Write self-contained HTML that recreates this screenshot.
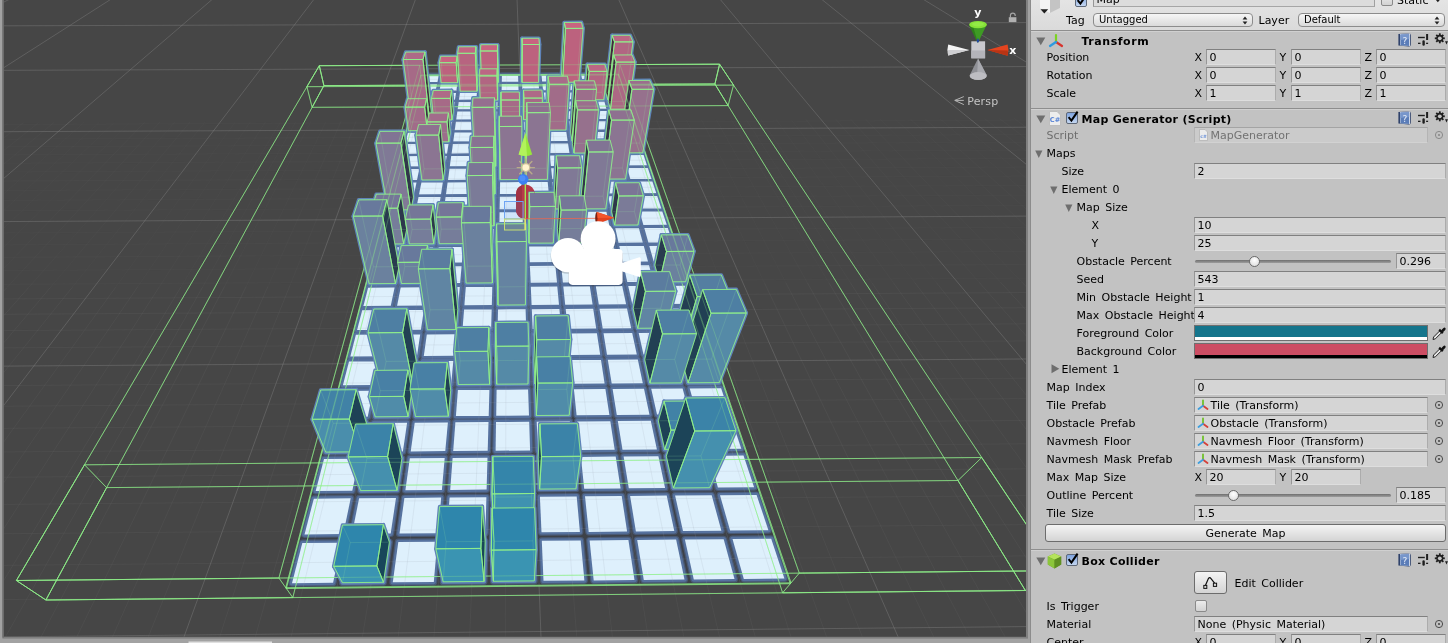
<!DOCTYPE html>
<html><head><meta charset="utf-8"><title>Unity</title><style>
body{margin:0;background:#c2c2c2;overflow:hidden}
#root{will-change:transform;transform:translateZ(0);position:relative;width:1448px;height:643px;overflow:hidden;font-family:'DejaVu Sans','Liberation Sans',sans-serif;font-size:11px;word-spacing:2px}
.t{position:absolute;white-space:nowrap;line-height:14px;height:14px;font-size:11px}
.t.b{font-weight:bold;word-spacing:0px;letter-spacing:0.3px}
.a{position:absolute}
.f{position:absolute;box-sizing:content-box;border:1px solid #acacac;border-top-color:#808080;border-left-color:#969696;border-bottom-color:#dedede;background:#d5d5d5;white-space:nowrap;overflow:hidden}
.f span{position:absolute;left:2.5px;top:1px;line-height:14px}
.dd{position:absolute;height:12px;border:1px solid #8c8c8c;border-radius:4px;background:linear-gradient(#f6f6f6,#dadada);white-space:nowrap}
.dd span{position:absolute;left:5px;top:-1px;line-height:14px;font-size:10px}
.btn{position:absolute;border:1px solid #6c6c6c;border-radius:3px;background:linear-gradient(#f4f4f4,#d4d4d4);text-align:center}
.btn span{line-height:16px;position:relative;top:1px}
.cb{position:absolute;border:1px solid #5e6878;border-radius:2px;background:linear-gradient(#7ea3df,#c4d6f0)}
</style></head><body><div id="root">
<svg width="1030" height="643" viewBox="0 0 1030 643" style="position:absolute;left:0;top:0">
<defs><clipPath id="sc"><rect x="4" y="0" width="1022" height="636.8"/></clipPath></defs>
<rect x="0" y="0" width="1030" height="643" fill="#a2a2a2"/>
<rect x="2.4" y="0" width="1025.6" height="638.6" fill="#808080"/>
<rect x="2.4" y="0" width="1.6" height="637.5" fill="#6c6c6c"/>
<rect x="4" y="0" width="1022" height="636.8" fill="#464646"/>
<rect x="188.5" y="641.5" width="83.5" height="1.5" fill="#e0e0e0"/>
<g clip-path="url(#sc)">
<g><line x1="-2944.3" y1="835.4" x2="101.6" y2="-126.0" stroke="#8a8a8a" stroke-width="1" stroke-opacity="0.38"/><line x1="-2898.9" y1="834.8" x2="-1211.2" y2="295.3" stroke="#8a8a8a" stroke-width="1" stroke-opacity="0.10"/><line x1="-1211.2" y1="295.3" x2="-680.5" y2="125.7" stroke="#8a8a8a" stroke-width="1" stroke-opacity="0.05"/><line x1="-2853.6" y1="834.3" x2="-1188.8" y2="295.2" stroke="#8a8a8a" stroke-width="1" stroke-opacity="0.10"/><line x1="-1188.8" y1="295.2" x2="-665.1" y2="125.6" stroke="#8a8a8a" stroke-width="1" stroke-opacity="0.05"/><line x1="-2808.4" y1="833.7" x2="-1166.4" y2="295.1" stroke="#8a8a8a" stroke-width="1" stroke-opacity="0.10"/><line x1="-1166.4" y1="295.1" x2="-649.7" y2="125.5" stroke="#8a8a8a" stroke-width="1" stroke-opacity="0.05"/><line x1="-2763.2" y1="833.2" x2="-1143.9" y2="294.9" stroke="#8a8a8a" stroke-width="1" stroke-opacity="0.10"/><line x1="-1143.9" y1="294.9" x2="-634.3" y2="125.5" stroke="#8a8a8a" stroke-width="1" stroke-opacity="0.05"/><line x1="-2718.0" y1="832.7" x2="-1121.5" y2="294.8" stroke="#8a8a8a" stroke-width="1" stroke-opacity="0.10"/><line x1="-1121.5" y1="294.8" x2="-618.9" y2="125.4" stroke="#8a8a8a" stroke-width="1" stroke-opacity="0.05"/><line x1="-2672.9" y1="832.1" x2="-1099.1" y2="294.6" stroke="#8a8a8a" stroke-width="1" stroke-opacity="0.10"/><line x1="-1099.1" y1="294.6" x2="-603.5" y2="125.4" stroke="#8a8a8a" stroke-width="1" stroke-opacity="0.05"/><line x1="-2627.8" y1="831.6" x2="-1076.8" y2="294.5" stroke="#8a8a8a" stroke-width="1" stroke-opacity="0.10"/><line x1="-1076.8" y1="294.5" x2="-588.1" y2="125.3" stroke="#8a8a8a" stroke-width="1" stroke-opacity="0.05"/><line x1="-2582.7" y1="831.1" x2="-1054.4" y2="294.4" stroke="#8a8a8a" stroke-width="1" stroke-opacity="0.10"/><line x1="-1054.4" y1="294.4" x2="-572.7" y2="125.2" stroke="#8a8a8a" stroke-width="1" stroke-opacity="0.05"/><line x1="-2537.8" y1="830.5" x2="-1032.0" y2="294.2" stroke="#8a8a8a" stroke-width="1" stroke-opacity="0.10"/><line x1="-1032.0" y1="294.2" x2="-557.3" y2="125.2" stroke="#8a8a8a" stroke-width="1" stroke-opacity="0.05"/><line x1="-2492.8" y1="830.0" x2="153.2" y2="-126.1" stroke="#8a8a8a" stroke-width="1" stroke-opacity="0.38"/><line x1="-2447.9" y1="829.5" x2="-987.3" y2="294.0" stroke="#8a8a8a" stroke-width="1" stroke-opacity="0.10"/><line x1="-987.3" y1="294.0" x2="-526.6" y2="125.0" stroke="#8a8a8a" stroke-width="1" stroke-opacity="0.05"/><line x1="-2403.0" y1="828.9" x2="-965.0" y2="293.8" stroke="#8a8a8a" stroke-width="1" stroke-opacity="0.10"/><line x1="-965.0" y1="293.8" x2="-511.2" y2="125.0" stroke="#8a8a8a" stroke-width="1" stroke-opacity="0.05"/><line x1="-2358.2" y1="828.4" x2="-942.7" y2="293.7" stroke="#8a8a8a" stroke-width="1" stroke-opacity="0.10"/><line x1="-942.7" y1="293.7" x2="-495.8" y2="124.9" stroke="#8a8a8a" stroke-width="1" stroke-opacity="0.05"/><line x1="-2313.5" y1="827.9" x2="-920.4" y2="293.5" stroke="#8a8a8a" stroke-width="1" stroke-opacity="0.10"/><line x1="-920.4" y1="293.5" x2="-480.5" y2="124.8" stroke="#8a8a8a" stroke-width="1" stroke-opacity="0.05"/><line x1="-2268.7" y1="827.3" x2="-898.1" y2="293.4" stroke="#8a8a8a" stroke-width="1" stroke-opacity="0.10"/><line x1="-898.1" y1="293.4" x2="-465.1" y2="124.8" stroke="#8a8a8a" stroke-width="1" stroke-opacity="0.05"/><line x1="-2224.1" y1="826.8" x2="-875.8" y2="293.3" stroke="#8a8a8a" stroke-width="1" stroke-opacity="0.10"/><line x1="-875.8" y1="293.3" x2="-449.8" y2="124.7" stroke="#8a8a8a" stroke-width="1" stroke-opacity="0.05"/><line x1="-2179.4" y1="826.3" x2="-853.5" y2="293.1" stroke="#8a8a8a" stroke-width="1" stroke-opacity="0.10"/><line x1="-853.5" y1="293.1" x2="-434.4" y2="124.6" stroke="#8a8a8a" stroke-width="1" stroke-opacity="0.05"/><line x1="-2134.8" y1="825.7" x2="-831.2" y2="293.0" stroke="#8a8a8a" stroke-width="1" stroke-opacity="0.10"/><line x1="-831.2" y1="293.0" x2="-419.1" y2="124.6" stroke="#8a8a8a" stroke-width="1" stroke-opacity="0.05"/><line x1="-2090.3" y1="825.2" x2="-809.0" y2="292.9" stroke="#8a8a8a" stroke-width="1" stroke-opacity="0.10"/><line x1="-809.0" y1="292.9" x2="-403.8" y2="124.5" stroke="#8a8a8a" stroke-width="1" stroke-opacity="0.05"/><line x1="-2045.8" y1="824.7" x2="204.7" y2="-126.1" stroke="#8a8a8a" stroke-width="1" stroke-opacity="0.38"/><line x1="-2001.3" y1="824.1" x2="-764.5" y2="292.6" stroke="#8a8a8a" stroke-width="1" stroke-opacity="0.10"/><line x1="-764.5" y1="292.6" x2="-373.1" y2="124.4" stroke="#8a8a8a" stroke-width="1" stroke-opacity="0.05"/><line x1="-1956.9" y1="823.6" x2="-742.3" y2="292.5" stroke="#8a8a8a" stroke-width="1" stroke-opacity="0.10"/><line x1="-742.3" y1="292.5" x2="-357.8" y2="124.3" stroke="#8a8a8a" stroke-width="1" stroke-opacity="0.05"/><line x1="-1912.5" y1="823.1" x2="-720.1" y2="292.3" stroke="#8a8a8a" stroke-width="1" stroke-opacity="0.10"/><line x1="-720.1" y1="292.3" x2="-342.5" y2="124.2" stroke="#8a8a8a" stroke-width="1" stroke-opacity="0.05"/><line x1="-1868.2" y1="822.6" x2="-697.9" y2="292.2" stroke="#8a8a8a" stroke-width="1" stroke-opacity="0.10"/><line x1="-697.9" y1="292.2" x2="-327.2" y2="124.2" stroke="#8a8a8a" stroke-width="1" stroke-opacity="0.05"/><line x1="-1823.9" y1="822.0" x2="-675.7" y2="292.0" stroke="#8a8a8a" stroke-width="1" stroke-opacity="0.10"/><line x1="-675.7" y1="292.0" x2="-311.9" y2="124.1" stroke="#8a8a8a" stroke-width="1" stroke-opacity="0.05"/><line x1="-1779.7" y1="821.5" x2="-653.5" y2="291.9" stroke="#8a8a8a" stroke-width="1" stroke-opacity="0.10"/><line x1="-653.5" y1="291.9" x2="-296.6" y2="124.0" stroke="#8a8a8a" stroke-width="1" stroke-opacity="0.05"/><line x1="-1735.5" y1="821.0" x2="-631.4" y2="291.8" stroke="#8a8a8a" stroke-width="1" stroke-opacity="0.10"/><line x1="-631.4" y1="291.8" x2="-281.3" y2="124.0" stroke="#8a8a8a" stroke-width="1" stroke-opacity="0.05"/><line x1="-1691.3" y1="820.4" x2="-609.2" y2="291.6" stroke="#8a8a8a" stroke-width="1" stroke-opacity="0.10"/><line x1="-609.2" y1="291.6" x2="-266.0" y2="123.9" stroke="#8a8a8a" stroke-width="1" stroke-opacity="0.05"/><line x1="-1647.2" y1="819.9" x2="-587.1" y2="291.5" stroke="#8a8a8a" stroke-width="1" stroke-opacity="0.10"/><line x1="-587.1" y1="291.5" x2="-250.7" y2="123.9" stroke="#8a8a8a" stroke-width="1" stroke-opacity="0.05"/><line x1="-1603.1" y1="819.4" x2="256.1" y2="-126.2" stroke="#8a8a8a" stroke-width="1" stroke-opacity="0.38"/><line x1="-1559.1" y1="818.9" x2="-542.8" y2="291.2" stroke="#8a8a8a" stroke-width="1" stroke-opacity="0.10"/><line x1="-542.8" y1="291.2" x2="-220.2" y2="123.7" stroke="#8a8a8a" stroke-width="1" stroke-opacity="0.05"/><line x1="-1515.1" y1="818.3" x2="-520.7" y2="291.1" stroke="#8a8a8a" stroke-width="1" stroke-opacity="0.10"/><line x1="-520.7" y1="291.1" x2="-204.9" y2="123.7" stroke="#8a8a8a" stroke-width="1" stroke-opacity="0.05"/><line x1="-1471.1" y1="817.8" x2="-498.6" y2="291.0" stroke="#8a8a8a" stroke-width="1" stroke-opacity="0.10"/><line x1="-498.6" y1="291.0" x2="-189.7" y2="123.6" stroke="#8a8a8a" stroke-width="1" stroke-opacity="0.05"/><line x1="-1427.2" y1="817.3" x2="-476.5" y2="290.8" stroke="#8a8a8a" stroke-width="1" stroke-opacity="0.10"/><line x1="-476.5" y1="290.8" x2="-174.4" y2="123.5" stroke="#8a8a8a" stroke-width="1" stroke-opacity="0.05"/><line x1="-1383.4" y1="816.8" x2="-454.5" y2="290.7" stroke="#8a8a8a" stroke-width="1" stroke-opacity="0.10"/><line x1="-454.5" y1="290.7" x2="-159.2" y2="123.5" stroke="#8a8a8a" stroke-width="1" stroke-opacity="0.05"/><line x1="-1339.6" y1="816.3" x2="-432.4" y2="290.6" stroke="#8a8a8a" stroke-width="1" stroke-opacity="0.10"/><line x1="-432.4" y1="290.6" x2="-143.9" y2="123.4" stroke="#8a8a8a" stroke-width="1" stroke-opacity="0.05"/><line x1="-1295.8" y1="815.7" x2="-410.3" y2="290.4" stroke="#8a8a8a" stroke-width="1" stroke-opacity="0.10"/><line x1="-410.3" y1="290.4" x2="-128.7" y2="123.3" stroke="#8a8a8a" stroke-width="1" stroke-opacity="0.05"/><line x1="-1252.1" y1="815.2" x2="-388.3" y2="290.3" stroke="#8a8a8a" stroke-width="1" stroke-opacity="0.10"/><line x1="-388.3" y1="290.3" x2="-113.5" y2="123.3" stroke="#8a8a8a" stroke-width="1" stroke-opacity="0.05"/><line x1="-1208.4" y1="814.7" x2="-366.3" y2="290.2" stroke="#8a8a8a" stroke-width="1" stroke-opacity="0.10"/><line x1="-366.3" y1="290.2" x2="-98.2" y2="123.2" stroke="#8a8a8a" stroke-width="1" stroke-opacity="0.05"/><line x1="-1164.7" y1="814.2" x2="307.4" y2="-126.3" stroke="#8a8a8a" stroke-width="1" stroke-opacity="0.38"/><line x1="-1121.1" y1="813.7" x2="-322.2" y2="289.9" stroke="#8a8a8a" stroke-width="1" stroke-opacity="0.10"/><line x1="-322.2" y1="289.9" x2="-67.8" y2="123.1" stroke="#8a8a8a" stroke-width="1" stroke-opacity="0.05"/><line x1="-1077.6" y1="813.1" x2="-300.2" y2="289.8" stroke="#8a8a8a" stroke-width="1" stroke-opacity="0.10"/><line x1="-300.2" y1="289.8" x2="-52.6" y2="123.0" stroke="#8a8a8a" stroke-width="1" stroke-opacity="0.05"/><line x1="-1034.1" y1="812.6" x2="-278.2" y2="289.6" stroke="#8a8a8a" stroke-width="1" stroke-opacity="0.10"/><line x1="-278.2" y1="289.6" x2="-37.4" y2="122.9" stroke="#8a8a8a" stroke-width="1" stroke-opacity="0.05"/><line x1="-990.6" y1="812.1" x2="-256.3" y2="289.5" stroke="#8a8a8a" stroke-width="1" stroke-opacity="0.10"/><line x1="-256.3" y1="289.5" x2="-22.2" y2="122.9" stroke="#8a8a8a" stroke-width="1" stroke-opacity="0.05"/><line x1="-947.2" y1="811.6" x2="-234.3" y2="289.3" stroke="#8a8a8a" stroke-width="1" stroke-opacity="0.10"/><line x1="-234.3" y1="289.3" x2="-7.0" y2="122.8" stroke="#8a8a8a" stroke-width="1" stroke-opacity="0.05"/><line x1="-903.8" y1="811.1" x2="-212.3" y2="289.2" stroke="#8a8a8a" stroke-width="1" stroke-opacity="0.10"/><line x1="-212.3" y1="289.2" x2="8.2" y2="122.7" stroke="#8a8a8a" stroke-width="1" stroke-opacity="0.05"/><line x1="-860.4" y1="810.6" x2="-190.4" y2="289.1" stroke="#8a8a8a" stroke-width="1" stroke-opacity="0.10"/><line x1="-190.4" y1="289.1" x2="23.4" y2="122.7" stroke="#8a8a8a" stroke-width="1" stroke-opacity="0.05"/><line x1="-817.1" y1="810.0" x2="-168.5" y2="288.9" stroke="#8a8a8a" stroke-width="1" stroke-opacity="0.10"/><line x1="-168.5" y1="288.9" x2="38.6" y2="122.6" stroke="#8a8a8a" stroke-width="1" stroke-opacity="0.05"/><line x1="-773.8" y1="809.5" x2="-146.5" y2="288.8" stroke="#8a8a8a" stroke-width="1" stroke-opacity="0.10"/><line x1="-146.5" y1="288.8" x2="53.8" y2="122.6" stroke="#8a8a8a" stroke-width="1" stroke-opacity="0.05"/><line x1="-730.6" y1="809.0" x2="358.7" y2="-126.4" stroke="#8a8a8a" stroke-width="1" stroke-opacity="0.38"/><line x1="-687.4" y1="808.5" x2="-102.7" y2="288.5" stroke="#8a8a8a" stroke-width="1" stroke-opacity="0.10"/><line x1="-102.7" y1="288.5" x2="84.1" y2="122.4" stroke="#8a8a8a" stroke-width="1" stroke-opacity="0.05"/><line x1="-644.3" y1="808.0" x2="-80.8" y2="288.4" stroke="#8a8a8a" stroke-width="1" stroke-opacity="0.10"/><line x1="-80.8" y1="288.4" x2="99.2" y2="122.4" stroke="#8a8a8a" stroke-width="1" stroke-opacity="0.05"/><line x1="-601.2" y1="807.5" x2="-59.0" y2="288.3" stroke="#8a8a8a" stroke-width="1" stroke-opacity="0.10"/><line x1="-59.0" y1="288.3" x2="114.4" y2="122.3" stroke="#8a8a8a" stroke-width="1" stroke-opacity="0.05"/><line x1="-558.1" y1="807.0" x2="-37.1" y2="288.1" stroke="#8a8a8a" stroke-width="1" stroke-opacity="0.10"/><line x1="-37.1" y1="288.1" x2="129.5" y2="122.2" stroke="#8a8a8a" stroke-width="1" stroke-opacity="0.05"/><line x1="-515.1" y1="806.4" x2="-15.2" y2="288.0" stroke="#8a8a8a" stroke-width="1" stroke-opacity="0.10"/><line x1="-15.2" y1="288.0" x2="144.7" y2="122.2" stroke="#8a8a8a" stroke-width="1" stroke-opacity="0.05"/><line x1="-472.2" y1="805.9" x2="6.6" y2="287.9" stroke="#8a8a8a" stroke-width="1" stroke-opacity="0.10"/><line x1="6.6" y1="287.9" x2="159.8" y2="122.1" stroke="#8a8a8a" stroke-width="1" stroke-opacity="0.05"/><line x1="-429.2" y1="805.4" x2="28.5" y2="287.7" stroke="#8a8a8a" stroke-width="1" stroke-opacity="0.10"/><line x1="28.5" y1="287.7" x2="175.0" y2="122.0" stroke="#8a8a8a" stroke-width="1" stroke-opacity="0.05"/><line x1="-386.3" y1="804.9" x2="50.3" y2="287.6" stroke="#8a8a8a" stroke-width="1" stroke-opacity="0.10"/><line x1="50.3" y1="287.6" x2="190.1" y2="122.0" stroke="#8a8a8a" stroke-width="1" stroke-opacity="0.05"/><line x1="-343.5" y1="804.4" x2="72.1" y2="287.5" stroke="#8a8a8a" stroke-width="1" stroke-opacity="0.10"/><line x1="72.1" y1="287.5" x2="205.2" y2="121.9" stroke="#8a8a8a" stroke-width="1" stroke-opacity="0.05"/><line x1="-300.7" y1="803.9" x2="410.0" y2="-126.4" stroke="#8a8a8a" stroke-width="1" stroke-opacity="0.38"/><line x1="-257.9" y1="803.4" x2="115.7" y2="287.2" stroke="#8a8a8a" stroke-width="1" stroke-opacity="0.10"/><line x1="115.7" y1="287.2" x2="235.4" y2="121.8" stroke="#8a8a8a" stroke-width="1" stroke-opacity="0.05"/><line x1="-215.2" y1="802.9" x2="137.5" y2="287.1" stroke="#8a8a8a" stroke-width="1" stroke-opacity="0.10"/><line x1="137.5" y1="287.1" x2="250.5" y2="121.7" stroke="#8a8a8a" stroke-width="1" stroke-opacity="0.05"/><line x1="-172.5" y1="802.4" x2="159.3" y2="286.9" stroke="#8a8a8a" stroke-width="1" stroke-opacity="0.10"/><line x1="159.3" y1="286.9" x2="265.6" y2="121.7" stroke="#8a8a8a" stroke-width="1" stroke-opacity="0.05"/><line x1="-129.9" y1="801.9" x2="181.0" y2="286.8" stroke="#8a8a8a" stroke-width="1" stroke-opacity="0.10"/><line x1="181.0" y1="286.8" x2="280.7" y2="121.6" stroke="#8a8a8a" stroke-width="1" stroke-opacity="0.05"/><line x1="-87.2" y1="801.4" x2="202.8" y2="286.7" stroke="#8a8a8a" stroke-width="1" stroke-opacity="0.10"/><line x1="202.8" y1="286.7" x2="295.8" y2="121.5" stroke="#8a8a8a" stroke-width="1" stroke-opacity="0.05"/><line x1="-44.7" y1="800.8" x2="224.5" y2="286.5" stroke="#8a8a8a" stroke-width="1" stroke-opacity="0.10"/><line x1="224.5" y1="286.5" x2="310.9" y2="121.5" stroke="#8a8a8a" stroke-width="1" stroke-opacity="0.05"/><line x1="-2.2" y1="800.3" x2="246.2" y2="286.4" stroke="#8a8a8a" stroke-width="1" stroke-opacity="0.10"/><line x1="246.2" y1="286.4" x2="326.0" y2="121.4" stroke="#8a8a8a" stroke-width="1" stroke-opacity="0.05"/><line x1="40.3" y1="799.8" x2="268.0" y2="286.3" stroke="#8a8a8a" stroke-width="1" stroke-opacity="0.10"/><line x1="268.0" y1="286.3" x2="341.1" y2="121.3" stroke="#8a8a8a" stroke-width="1" stroke-opacity="0.05"/><line x1="82.8" y1="799.3" x2="289.7" y2="286.1" stroke="#8a8a8a" stroke-width="1" stroke-opacity="0.10"/><line x1="289.7" y1="286.1" x2="356.1" y2="121.3" stroke="#8a8a8a" stroke-width="1" stroke-opacity="0.05"/><line x1="125.2" y1="798.8" x2="461.2" y2="-126.5" stroke="#8a8a8a" stroke-width="1" stroke-opacity="0.38"/><line x1="167.5" y1="798.3" x2="333.1" y2="285.9" stroke="#8a8a8a" stroke-width="1" stroke-opacity="0.10"/><line x1="333.1" y1="285.9" x2="386.3" y2="121.1" stroke="#8a8a8a" stroke-width="1" stroke-opacity="0.05"/><line x1="209.8" y1="797.8" x2="354.7" y2="285.7" stroke="#8a8a8a" stroke-width="1" stroke-opacity="0.10"/><line x1="354.7" y1="285.7" x2="401.3" y2="121.1" stroke="#8a8a8a" stroke-width="1" stroke-opacity="0.05"/><line x1="252.1" y1="797.3" x2="376.4" y2="285.6" stroke="#8a8a8a" stroke-width="1" stroke-opacity="0.10"/><line x1="376.4" y1="285.6" x2="416.4" y2="121.0" stroke="#8a8a8a" stroke-width="1" stroke-opacity="0.05"/><line x1="294.3" y1="796.8" x2="398.1" y2="285.5" stroke="#8a8a8a" stroke-width="1" stroke-opacity="0.10"/><line x1="398.1" y1="285.5" x2="431.4" y2="120.9" stroke="#8a8a8a" stroke-width="1" stroke-opacity="0.05"/><line x1="336.5" y1="796.3" x2="419.7" y2="285.3" stroke="#8a8a8a" stroke-width="1" stroke-opacity="0.10"/><line x1="419.7" y1="285.3" x2="446.5" y2="120.9" stroke="#8a8a8a" stroke-width="1" stroke-opacity="0.05"/><line x1="378.7" y1="795.8" x2="441.3" y2="285.2" stroke="#8a8a8a" stroke-width="1" stroke-opacity="0.10"/><line x1="441.3" y1="285.2" x2="461.5" y2="120.8" stroke="#8a8a8a" stroke-width="1" stroke-opacity="0.05"/><line x1="420.8" y1="795.3" x2="463.0" y2="285.1" stroke="#8a8a8a" stroke-width="1" stroke-opacity="0.10"/><line x1="463.0" y1="285.1" x2="476.5" y2="120.8" stroke="#8a8a8a" stroke-width="1" stroke-opacity="0.05"/><line x1="462.9" y1="794.8" x2="484.6" y2="285.0" stroke="#8a8a8a" stroke-width="1" stroke-opacity="0.10"/><line x1="484.6" y1="285.0" x2="491.6" y2="120.7" stroke="#8a8a8a" stroke-width="1" stroke-opacity="0.05"/><line x1="504.9" y1="794.3" x2="506.2" y2="284.8" stroke="#8a8a8a" stroke-width="1" stroke-opacity="0.10"/><line x1="506.2" y1="284.8" x2="506.6" y2="120.6" stroke="#8a8a8a" stroke-width="1" stroke-opacity="0.05"/><line x1="546.9" y1="793.8" x2="512.3" y2="-126.6" stroke="#8a8a8a" stroke-width="1" stroke-opacity="0.38"/><line x1="588.9" y1="793.3" x2="549.3" y2="284.6" stroke="#8a8a8a" stroke-width="1" stroke-opacity="0.10"/><line x1="549.3" y1="284.6" x2="536.6" y2="120.5" stroke="#8a8a8a" stroke-width="1" stroke-opacity="0.05"/><line x1="630.8" y1="792.8" x2="570.9" y2="284.4" stroke="#8a8a8a" stroke-width="1" stroke-opacity="0.10"/><line x1="570.9" y1="284.4" x2="551.6" y2="120.4" stroke="#8a8a8a" stroke-width="1" stroke-opacity="0.05"/><line x1="672.7" y1="792.3" x2="592.5" y2="284.3" stroke="#8a8a8a" stroke-width="1" stroke-opacity="0.10"/><line x1="592.5" y1="284.3" x2="566.6" y2="120.4" stroke="#8a8a8a" stroke-width="1" stroke-opacity="0.05"/><line x1="714.5" y1="791.8" x2="614.0" y2="284.2" stroke="#8a8a8a" stroke-width="1" stroke-opacity="0.10"/><line x1="614.0" y1="284.2" x2="581.6" y2="120.3" stroke="#8a8a8a" stroke-width="1" stroke-opacity="0.05"/><line x1="756.3" y1="791.3" x2="635.6" y2="284.0" stroke="#8a8a8a" stroke-width="1" stroke-opacity="0.10"/><line x1="635.6" y1="284.0" x2="596.6" y2="120.2" stroke="#8a8a8a" stroke-width="1" stroke-opacity="0.05"/><line x1="798.1" y1="790.8" x2="657.1" y2="283.9" stroke="#8a8a8a" stroke-width="1" stroke-opacity="0.10"/><line x1="657.1" y1="283.9" x2="611.6" y2="120.2" stroke="#8a8a8a" stroke-width="1" stroke-opacity="0.05"/><line x1="839.8" y1="790.3" x2="678.6" y2="283.8" stroke="#8a8a8a" stroke-width="1" stroke-opacity="0.10"/><line x1="678.6" y1="283.8" x2="626.5" y2="120.1" stroke="#8a8a8a" stroke-width="1" stroke-opacity="0.05"/><line x1="881.4" y1="789.8" x2="700.1" y2="283.6" stroke="#8a8a8a" stroke-width="1" stroke-opacity="0.10"/><line x1="700.1" y1="283.6" x2="641.5" y2="120.1" stroke="#8a8a8a" stroke-width="1" stroke-opacity="0.05"/><line x1="923.1" y1="789.3" x2="721.6" y2="283.5" stroke="#8a8a8a" stroke-width="1" stroke-opacity="0.10"/><line x1="721.6" y1="283.5" x2="656.5" y2="120.0" stroke="#8a8a8a" stroke-width="1" stroke-opacity="0.05"/><line x1="964.7" y1="788.8" x2="563.4" y2="-126.7" stroke="#8a8a8a" stroke-width="1" stroke-opacity="0.38"/><line x1="1006.2" y1="788.3" x2="764.6" y2="283.2" stroke="#8a8a8a" stroke-width="1" stroke-opacity="0.10"/><line x1="764.6" y1="283.2" x2="686.4" y2="119.9" stroke="#8a8a8a" stroke-width="1" stroke-opacity="0.05"/><line x1="1047.8" y1="787.8" x2="786.0" y2="283.1" stroke="#8a8a8a" stroke-width="1" stroke-opacity="0.10"/><line x1="786.0" y1="283.1" x2="701.4" y2="119.8" stroke="#8a8a8a" stroke-width="1" stroke-opacity="0.05"/><line x1="1089.2" y1="787.4" x2="807.5" y2="283.0" stroke="#8a8a8a" stroke-width="1" stroke-opacity="0.10"/><line x1="807.5" y1="283.0" x2="716.3" y2="119.7" stroke="#8a8a8a" stroke-width="1" stroke-opacity="0.05"/><line x1="1130.7" y1="786.9" x2="828.9" y2="282.8" stroke="#8a8a8a" stroke-width="1" stroke-opacity="0.10"/><line x1="828.9" y1="282.8" x2="731.3" y2="119.7" stroke="#8a8a8a" stroke-width="1" stroke-opacity="0.05"/><line x1="1172.1" y1="786.4" x2="850.4" y2="282.7" stroke="#8a8a8a" stroke-width="1" stroke-opacity="0.10"/><line x1="850.4" y1="282.7" x2="746.2" y2="119.6" stroke="#8a8a8a" stroke-width="1" stroke-opacity="0.05"/><line x1="1213.4" y1="785.9" x2="871.8" y2="282.6" stroke="#8a8a8a" stroke-width="1" stroke-opacity="0.10"/><line x1="871.8" y1="282.6" x2="761.1" y2="119.5" stroke="#8a8a8a" stroke-width="1" stroke-opacity="0.05"/><line x1="1254.8" y1="785.4" x2="893.2" y2="282.5" stroke="#8a8a8a" stroke-width="1" stroke-opacity="0.10"/><line x1="893.2" y1="282.5" x2="776.1" y2="119.5" stroke="#8a8a8a" stroke-width="1" stroke-opacity="0.05"/><line x1="1296.0" y1="784.9" x2="914.6" y2="282.3" stroke="#8a8a8a" stroke-width="1" stroke-opacity="0.10"/><line x1="914.6" y1="282.3" x2="791.0" y2="119.4" stroke="#8a8a8a" stroke-width="1" stroke-opacity="0.05"/><line x1="1337.3" y1="784.4" x2="936.0" y2="282.2" stroke="#8a8a8a" stroke-width="1" stroke-opacity="0.10"/><line x1="936.0" y1="282.2" x2="805.9" y2="119.4" stroke="#8a8a8a" stroke-width="1" stroke-opacity="0.05"/><line x1="1378.5" y1="783.9" x2="614.4" y2="-126.7" stroke="#8a8a8a" stroke-width="1" stroke-opacity="0.38"/><line x1="1419.7" y1="783.4" x2="978.8" y2="281.9" stroke="#8a8a8a" stroke-width="1" stroke-opacity="0.10"/><line x1="978.8" y1="281.9" x2="835.7" y2="119.2" stroke="#8a8a8a" stroke-width="1" stroke-opacity="0.05"/><line x1="1460.8" y1="782.9" x2="1000.1" y2="281.8" stroke="#8a8a8a" stroke-width="1" stroke-opacity="0.10"/><line x1="1000.1" y1="281.8" x2="850.6" y2="119.2" stroke="#8a8a8a" stroke-width="1" stroke-opacity="0.05"/><line x1="1501.9" y1="782.4" x2="1021.5" y2="281.7" stroke="#8a8a8a" stroke-width="1" stroke-opacity="0.10"/><line x1="1021.5" y1="281.7" x2="865.5" y2="119.1" stroke="#8a8a8a" stroke-width="1" stroke-opacity="0.05"/><line x1="1542.9" y1="782.0" x2="1042.8" y2="281.5" stroke="#8a8a8a" stroke-width="1" stroke-opacity="0.10"/><line x1="1042.8" y1="281.5" x2="880.4" y2="119.0" stroke="#8a8a8a" stroke-width="1" stroke-opacity="0.05"/><line x1="1583.9" y1="781.5" x2="1064.1" y2="281.4" stroke="#8a8a8a" stroke-width="1" stroke-opacity="0.10"/><line x1="1064.1" y1="281.4" x2="895.3" y2="119.0" stroke="#8a8a8a" stroke-width="1" stroke-opacity="0.05"/><line x1="1624.9" y1="781.0" x2="1085.5" y2="281.3" stroke="#8a8a8a" stroke-width="1" stroke-opacity="0.10"/><line x1="1085.5" y1="281.3" x2="910.2" y2="118.9" stroke="#8a8a8a" stroke-width="1" stroke-opacity="0.05"/><line x1="1665.8" y1="780.5" x2="1106.8" y2="281.1" stroke="#8a8a8a" stroke-width="1" stroke-opacity="0.10"/><line x1="1106.8" y1="281.1" x2="925.0" y2="118.8" stroke="#8a8a8a" stroke-width="1" stroke-opacity="0.05"/><line x1="1706.7" y1="780.0" x2="1128.1" y2="281.0" stroke="#8a8a8a" stroke-width="1" stroke-opacity="0.10"/><line x1="1128.1" y1="281.0" x2="939.9" y2="118.8" stroke="#8a8a8a" stroke-width="1" stroke-opacity="0.05"/><line x1="1747.6" y1="779.5" x2="1149.3" y2="280.9" stroke="#8a8a8a" stroke-width="1" stroke-opacity="0.10"/><line x1="1149.3" y1="280.9" x2="954.8" y2="118.7" stroke="#8a8a8a" stroke-width="1" stroke-opacity="0.05"/><line x1="1788.4" y1="779.0" x2="665.3" y2="-126.8" stroke="#8a8a8a" stroke-width="1" stroke-opacity="0.38"/><line x1="1829.2" y1="778.5" x2="1191.9" y2="280.6" stroke="#8a8a8a" stroke-width="1" stroke-opacity="0.10"/><line x1="1191.9" y1="280.6" x2="984.5" y2="118.6" stroke="#8a8a8a" stroke-width="1" stroke-opacity="0.05"/><line x1="1869.9" y1="778.1" x2="1213.1" y2="280.5" stroke="#8a8a8a" stroke-width="1" stroke-opacity="0.10"/><line x1="1213.1" y1="280.5" x2="999.4" y2="118.5" stroke="#8a8a8a" stroke-width="1" stroke-opacity="0.05"/><line x1="1910.6" y1="777.6" x2="1234.4" y2="280.4" stroke="#8a8a8a" stroke-width="1" stroke-opacity="0.10"/><line x1="1234.4" y1="280.4" x2="1014.2" y2="118.5" stroke="#8a8a8a" stroke-width="1" stroke-opacity="0.05"/><line x1="1951.3" y1="777.1" x2="1255.6" y2="280.2" stroke="#8a8a8a" stroke-width="1" stroke-opacity="0.10"/><line x1="1255.6" y1="280.2" x2="1029.0" y2="118.4" stroke="#8a8a8a" stroke-width="1" stroke-opacity="0.05"/><line x1="1991.9" y1="776.6" x2="1276.9" y2="280.1" stroke="#8a8a8a" stroke-width="1" stroke-opacity="0.10"/><line x1="1276.9" y1="280.1" x2="1043.9" y2="118.3" stroke="#8a8a8a" stroke-width="1" stroke-opacity="0.05"/><line x1="2032.5" y1="776.1" x2="1298.1" y2="280.0" stroke="#8a8a8a" stroke-width="1" stroke-opacity="0.10"/><line x1="1298.1" y1="280.0" x2="1058.7" y2="118.3" stroke="#8a8a8a" stroke-width="1" stroke-opacity="0.05"/><line x1="2073.1" y1="775.6" x2="1319.3" y2="279.8" stroke="#8a8a8a" stroke-width="1" stroke-opacity="0.10"/><line x1="1319.3" y1="279.8" x2="1073.5" y2="118.2" stroke="#8a8a8a" stroke-width="1" stroke-opacity="0.05"/><line x1="2113.6" y1="775.2" x2="1340.5" y2="279.7" stroke="#8a8a8a" stroke-width="1" stroke-opacity="0.10"/><line x1="1340.5" y1="279.7" x2="1088.4" y2="118.2" stroke="#8a8a8a" stroke-width="1" stroke-opacity="0.05"/><line x1="2154.1" y1="774.7" x2="1361.7" y2="279.6" stroke="#8a8a8a" stroke-width="1" stroke-opacity="0.10"/><line x1="1361.7" y1="279.6" x2="1103.2" y2="118.1" stroke="#8a8a8a" stroke-width="1" stroke-opacity="0.05"/><line x1="2194.5" y1="774.2" x2="716.2" y2="-126.9" stroke="#8a8a8a" stroke-width="1" stroke-opacity="0.38"/><line x1="2234.9" y1="773.7" x2="1404.0" y2="279.3" stroke="#8a8a8a" stroke-width="1" stroke-opacity="0.10"/><line x1="1404.0" y1="279.3" x2="1132.8" y2="118.0" stroke="#8a8a8a" stroke-width="1" stroke-opacity="0.05"/><line x1="2275.3" y1="773.2" x2="1425.1" y2="279.2" stroke="#8a8a8a" stroke-width="1" stroke-opacity="0.10"/><line x1="1425.1" y1="279.2" x2="1147.6" y2="117.9" stroke="#8a8a8a" stroke-width="1" stroke-opacity="0.05"/><line x1="2315.6" y1="772.8" x2="1446.3" y2="279.1" stroke="#8a8a8a" stroke-width="1" stroke-opacity="0.10"/><line x1="1446.3" y1="279.1" x2="1162.4" y2="117.8" stroke="#8a8a8a" stroke-width="1" stroke-opacity="0.05"/><line x1="2355.9" y1="772.3" x2="1467.4" y2="278.9" stroke="#8a8a8a" stroke-width="1" stroke-opacity="0.10"/><line x1="1467.4" y1="278.9" x2="1177.2" y2="117.8" stroke="#8a8a8a" stroke-width="1" stroke-opacity="0.05"/><line x1="2396.1" y1="771.8" x2="1488.5" y2="278.8" stroke="#8a8a8a" stroke-width="1" stroke-opacity="0.10"/><line x1="1488.5" y1="278.8" x2="1192.0" y2="117.7" stroke="#8a8a8a" stroke-width="1" stroke-opacity="0.05"/><line x1="2436.3" y1="771.3" x2="1509.7" y2="278.7" stroke="#8a8a8a" stroke-width="1" stroke-opacity="0.10"/><line x1="1509.7" y1="278.7" x2="1206.8" y2="117.7" stroke="#8a8a8a" stroke-width="1" stroke-opacity="0.05"/><line x1="2476.5" y1="770.8" x2="1530.8" y2="278.5" stroke="#8a8a8a" stroke-width="1" stroke-opacity="0.10"/><line x1="1530.8" y1="278.5" x2="1221.5" y2="117.6" stroke="#8a8a8a" stroke-width="1" stroke-opacity="0.05"/><line x1="2516.7" y1="770.4" x2="1551.9" y2="278.4" stroke="#8a8a8a" stroke-width="1" stroke-opacity="0.10"/><line x1="1551.9" y1="278.4" x2="1236.3" y2="117.5" stroke="#8a8a8a" stroke-width="1" stroke-opacity="0.05"/><line x1="2556.8" y1="769.9" x2="1572.9" y2="278.3" stroke="#8a8a8a" stroke-width="1" stroke-opacity="0.10"/><line x1="1572.9" y1="278.3" x2="1251.1" y2="117.5" stroke="#8a8a8a" stroke-width="1" stroke-opacity="0.05"/><line x1="2596.8" y1="769.4" x2="767.0" y2="-127.0" stroke="#8a8a8a" stroke-width="1" stroke-opacity="0.38"/><line x1="2636.8" y1="768.9" x2="1615.1" y2="278.0" stroke="#8a8a8a" stroke-width="1" stroke-opacity="0.10"/><line x1="1615.1" y1="278.0" x2="1280.6" y2="117.3" stroke="#8a8a8a" stroke-width="1" stroke-opacity="0.05"/><line x1="2676.8" y1="768.5" x2="1636.1" y2="277.9" stroke="#8a8a8a" stroke-width="1" stroke-opacity="0.10"/><line x1="1636.1" y1="277.9" x2="1295.3" y2="117.3" stroke="#8a8a8a" stroke-width="1" stroke-opacity="0.05"/><line x1="2716.8" y1="768.0" x2="1657.2" y2="277.8" stroke="#8a8a8a" stroke-width="1" stroke-opacity="0.10"/><line x1="1657.2" y1="277.8" x2="1310.1" y2="117.2" stroke="#8a8a8a" stroke-width="1" stroke-opacity="0.05"/><line x1="2756.7" y1="767.5" x2="1678.2" y2="277.6" stroke="#8a8a8a" stroke-width="1" stroke-opacity="0.10"/><line x1="1678.2" y1="277.6" x2="1324.8" y2="117.1" stroke="#8a8a8a" stroke-width="1" stroke-opacity="0.05"/><line x1="2796.6" y1="767.0" x2="1699.2" y2="277.5" stroke="#8a8a8a" stroke-width="1" stroke-opacity="0.10"/><line x1="1699.2" y1="277.5" x2="1339.6" y2="117.1" stroke="#8a8a8a" stroke-width="1" stroke-opacity="0.05"/><line x1="2836.4" y1="766.6" x2="1720.2" y2="277.4" stroke="#8a8a8a" stroke-width="1" stroke-opacity="0.10"/><line x1="1720.2" y1="277.4" x2="1354.3" y2="117.0" stroke="#8a8a8a" stroke-width="1" stroke-opacity="0.05"/><line x1="2876.2" y1="766.1" x2="1741.2" y2="277.3" stroke="#8a8a8a" stroke-width="1" stroke-opacity="0.10"/><line x1="1741.2" y1="277.3" x2="1369.0" y2="117.0" stroke="#8a8a8a" stroke-width="1" stroke-opacity="0.05"/><line x1="2916.0" y1="765.6" x2="1762.2" y2="277.1" stroke="#8a8a8a" stroke-width="1" stroke-opacity="0.10"/><line x1="1762.2" y1="277.1" x2="1383.7" y2="116.9" stroke="#8a8a8a" stroke-width="1" stroke-opacity="0.05"/><line x1="2955.7" y1="765.1" x2="1783.2" y2="277.0" stroke="#8a8a8a" stroke-width="1" stroke-opacity="0.10"/><line x1="1783.2" y1="277.0" x2="1398.5" y2="116.8" stroke="#8a8a8a" stroke-width="1" stroke-opacity="0.05"/><line x1="2995.4" y1="764.7" x2="817.8" y2="-127.0" stroke="#8a8a8a" stroke-width="1" stroke-opacity="0.38"/><line x1="3035.1" y1="764.2" x2="1825.1" y2="276.7" stroke="#8a8a8a" stroke-width="1" stroke-opacity="0.10"/><line x1="1825.1" y1="276.7" x2="1427.9" y2="116.7" stroke="#8a8a8a" stroke-width="1" stroke-opacity="0.05"/><line x1="3074.7" y1="763.7" x2="1846.1" y2="276.6" stroke="#8a8a8a" stroke-width="1" stroke-opacity="0.10"/><line x1="1846.1" y1="276.6" x2="1442.6" y2="116.6" stroke="#8a8a8a" stroke-width="1" stroke-opacity="0.05"/><line x1="3114.3" y1="763.2" x2="1867.0" y2="276.5" stroke="#8a8a8a" stroke-width="1" stroke-opacity="0.10"/><line x1="1867.0" y1="276.5" x2="1457.3" y2="116.6" stroke="#8a8a8a" stroke-width="1" stroke-opacity="0.05"/><line x1="3153.8" y1="762.8" x2="1887.9" y2="276.4" stroke="#8a8a8a" stroke-width="1" stroke-opacity="0.10"/><line x1="1887.9" y1="276.4" x2="1472.0" y2="116.5" stroke="#8a8a8a" stroke-width="1" stroke-opacity="0.05"/><line x1="3193.3" y1="762.3" x2="1908.9" y2="276.2" stroke="#8a8a8a" stroke-width="1" stroke-opacity="0.10"/><line x1="1908.9" y1="276.2" x2="1486.7" y2="116.5" stroke="#8a8a8a" stroke-width="1" stroke-opacity="0.05"/><line x1="3232.8" y1="761.8" x2="1929.8" y2="276.1" stroke="#8a8a8a" stroke-width="1" stroke-opacity="0.10"/><line x1="1929.8" y1="276.1" x2="1501.3" y2="116.4" stroke="#8a8a8a" stroke-width="1" stroke-opacity="0.05"/><line x1="3272.2" y1="761.4" x2="1950.7" y2="276.0" stroke="#8a8a8a" stroke-width="1" stroke-opacity="0.10"/><line x1="1950.7" y1="276.0" x2="1516.0" y2="116.3" stroke="#8a8a8a" stroke-width="1" stroke-opacity="0.05"/><line x1="3311.6" y1="760.9" x2="1971.6" y2="275.9" stroke="#8a8a8a" stroke-width="1" stroke-opacity="0.10"/><line x1="1971.6" y1="275.9" x2="1530.7" y2="116.3" stroke="#8a8a8a" stroke-width="1" stroke-opacity="0.05"/><line x1="3351.0" y1="760.4" x2="1992.4" y2="275.7" stroke="#8a8a8a" stroke-width="1" stroke-opacity="0.10"/><line x1="1992.4" y1="275.7" x2="1545.4" y2="116.2" stroke="#8a8a8a" stroke-width="1" stroke-opacity="0.05"/><line x1="3390.3" y1="760.0" x2="868.5" y2="-127.1" stroke="#8a8a8a" stroke-width="1" stroke-opacity="0.38"/><line x1="3429.6" y1="759.5" x2="2034.2" y2="275.5" stroke="#8a8a8a" stroke-width="1" stroke-opacity="0.10"/><line x1="2034.2" y1="275.5" x2="1574.7" y2="116.1" stroke="#8a8a8a" stroke-width="1" stroke-opacity="0.05"/><line x1="3468.8" y1="759.0" x2="2055.0" y2="275.3" stroke="#8a8a8a" stroke-width="1" stroke-opacity="0.10"/><line x1="2055.0" y1="275.3" x2="1589.3" y2="116.0" stroke="#8a8a8a" stroke-width="1" stroke-opacity="0.05"/><line x1="3508.1" y1="758.6" x2="2075.9" y2="275.2" stroke="#8a8a8a" stroke-width="1" stroke-opacity="0.10"/><line x1="2075.9" y1="275.2" x2="1604.0" y2="116.0" stroke="#8a8a8a" stroke-width="1" stroke-opacity="0.05"/><line x1="3547.2" y1="758.1" x2="2096.7" y2="275.1" stroke="#8a8a8a" stroke-width="1" stroke-opacity="0.10"/><line x1="2096.7" y1="275.1" x2="1618.6" y2="115.9" stroke="#8a8a8a" stroke-width="1" stroke-opacity="0.05"/><line x1="3586.4" y1="757.6" x2="2117.5" y2="275.0" stroke="#8a8a8a" stroke-width="1" stroke-opacity="0.10"/><line x1="2117.5" y1="275.0" x2="1633.3" y2="115.8" stroke="#8a8a8a" stroke-width="1" stroke-opacity="0.05"/><line x1="3625.5" y1="757.2" x2="2138.3" y2="274.8" stroke="#8a8a8a" stroke-width="1" stroke-opacity="0.10"/><line x1="2138.3" y1="274.8" x2="1647.9" y2="115.8" stroke="#8a8a8a" stroke-width="1" stroke-opacity="0.05"/><line x1="3664.6" y1="756.7" x2="2159.1" y2="274.7" stroke="#8a8a8a" stroke-width="1" stroke-opacity="0.10"/><line x1="2159.1" y1="274.7" x2="1662.5" y2="115.7" stroke="#8a8a8a" stroke-width="1" stroke-opacity="0.05"/><line x1="3703.6" y1="756.2" x2="2179.9" y2="274.6" stroke="#8a8a8a" stroke-width="1" stroke-opacity="0.10"/><line x1="2179.9" y1="274.6" x2="1677.1" y2="115.6" stroke="#8a8a8a" stroke-width="1" stroke-opacity="0.05"/><line x1="3742.6" y1="755.8" x2="2200.7" y2="274.5" stroke="#8a8a8a" stroke-width="1" stroke-opacity="0.10"/><line x1="2200.7" y1="274.5" x2="1691.8" y2="115.6" stroke="#8a8a8a" stroke-width="1" stroke-opacity="0.05"/><line x1="3781.6" y1="755.3" x2="919.1" y2="-127.2" stroke="#8a8a8a" stroke-width="1" stroke-opacity="0.38"/><line x1="-2298.3" y1="797.8" x2="3217.4" y2="733.9" stroke="#8a8a8a" stroke-width="1" stroke-opacity="0.10"/><line x1="-2160.0" y1="745.9" x2="3091.5" y2="688.1" stroke="#8a8a8a" stroke-width="1" stroke-opacity="0.10"/><line x1="-2034.8" y1="699.0" x2="2976.9" y2="646.3" stroke="#8a8a8a" stroke-width="1" stroke-opacity="0.10"/><line x1="-3059.5" y1="667.7" x2="3868.9" y2="598.0" stroke="#8a8a8a" stroke-width="1" stroke-opacity="0.38"/><line x1="-1816.5" y1="617.1" x2="2775.6" y2="572.9" stroke="#8a8a8a" stroke-width="1" stroke-opacity="0.10"/><line x1="-1720.8" y1="581.3" x2="2686.8" y2="540.5" stroke="#8a8a8a" stroke-width="1" stroke-opacity="0.10"/><line x1="-1632.7" y1="548.3" x2="2604.7" y2="510.6" stroke="#8a8a8a" stroke-width="1" stroke-opacity="0.10"/><line x1="-1551.3" y1="517.7" x2="2528.6" y2="482.8" stroke="#8a8a8a" stroke-width="1" stroke-opacity="0.10"/><line x1="-1475.9" y1="489.5" x2="2457.7" y2="457.0" stroke="#8a8a8a" stroke-width="1" stroke-opacity="0.10"/><line x1="-1405.8" y1="463.2" x2="2391.7" y2="432.9" stroke="#8a8a8a" stroke-width="1" stroke-opacity="0.10"/><line x1="-1340.5" y1="438.7" x2="2330.0" y2="410.4" stroke="#8a8a8a" stroke-width="1" stroke-opacity="0.10"/><line x1="-1279.4" y1="415.8" x2="2272.2" y2="389.3" stroke="#8a8a8a" stroke-width="1" stroke-opacity="0.10"/><line x1="-1222.3" y1="394.4" x2="2218.0" y2="369.6" stroke="#8a8a8a" stroke-width="1" stroke-opacity="0.10"/><line x1="-1945.3" y1="379.8" x2="2874.9" y2="346.0" stroke="#8a8a8a" stroke-width="1" stroke-opacity="0.38"/><line x1="-1118.4" y1="355.5" x2="2118.9" y2="333.5" stroke="#8a8a8a" stroke-width="1" stroke-opacity="0.10"/><line x1="-1071.0" y1="337.7" x2="2073.6" y2="316.9" stroke="#8a8a8a" stroke-width="1" stroke-opacity="0.10"/><line x1="-1026.3" y1="320.9" x2="2030.7" y2="301.3" stroke="#8a8a8a" stroke-width="1" stroke-opacity="0.10"/><line x1="-984.0" y1="305.1" x2="1990.2" y2="286.5" stroke="#8a8a8a" stroke-width="1" stroke-opacity="0.10"/><line x1="-944.0" y1="290.1" x2="1951.7" y2="272.5" stroke="#8a8a8a" stroke-width="1" stroke-opacity="0.05"/><line x1="-906.1" y1="275.9" x2="1915.2" y2="259.2" stroke="#8a8a8a" stroke-width="1" stroke-opacity="0.05"/><line x1="-870.2" y1="262.4" x2="1880.4" y2="246.5" stroke="#8a8a8a" stroke-width="1" stroke-opacity="0.05"/><line x1="-836.0" y1="249.6" x2="1847.4" y2="234.4" stroke="#8a8a8a" stroke-width="1" stroke-opacity="0.05"/><line x1="-803.4" y1="237.4" x2="1815.9" y2="223.0" stroke="#8a8a8a" stroke-width="1" stroke-opacity="0.05"/><line x1="-1361.5" y1="228.9" x2="2334.6" y2="209.1" stroke="#8a8a8a" stroke-width="1" stroke-opacity="0.38"/><line x1="-742.9" y1="214.7" x2="1757.1" y2="201.5" stroke="#8a8a8a" stroke-width="1" stroke-opacity="0.05"/><line x1="-714.6" y1="204.1" x2="1729.7" y2="191.5" stroke="#8a8a8a" stroke-width="1" stroke-opacity="0.05"/><line x1="-687.7" y1="194.0" x2="1703.4" y2="182.0" stroke="#8a8a8a" stroke-width="1" stroke-opacity="0.05"/><line x1="-661.8" y1="184.3" x2="1678.3" y2="172.8" stroke="#8a8a8a" stroke-width="1" stroke-opacity="0.05"/><line x1="-637.1" y1="175.0" x2="1654.2" y2="164.0" stroke="#8a8a8a" stroke-width="1" stroke-opacity="0.05"/><line x1="-613.4" y1="166.1" x2="1631.0" y2="155.6" stroke="#8a8a8a" stroke-width="1" stroke-opacity="0.05"/><line x1="-590.7" y1="157.6" x2="1608.8" y2="147.5" stroke="#8a8a8a" stroke-width="1" stroke-opacity="0.05"/><line x1="-568.8" y1="149.4" x2="1587.4" y2="139.7" stroke="#8a8a8a" stroke-width="1" stroke-opacity="0.05"/><line x1="-547.8" y1="141.6" x2="1566.9" y2="132.2" stroke="#8a8a8a" stroke-width="1" stroke-opacity="0.05"/><line x1="-1002.2" y1="136.1" x2="1995.1" y2="123.0" stroke="#8a8a8a" stroke-width="1" stroke-opacity="0.38"/><line x1="-508.2" y1="126.7" x2="1528.0" y2="118.0" stroke="#8a8a8a" stroke-width="1" stroke-opacity="0.05"/><line x1="-758.8" y1="73.1" x2="1762.0" y2="63.9" stroke="#8a8a8a" stroke-width="1" stroke-opacity="0.38"/><line x1="-582.9" y1="27.7" x2="1592.0" y2="20.8" stroke="#8a8a8a" stroke-width="1" stroke-opacity="0.38"/><line x1="-450.0" y1="-6.7" x2="1462.6" y2="-12.0" stroke="#8a8a8a" stroke-width="1" stroke-opacity="0.38"/><line x1="-345.9" y1="-33.5" x2="1360.8" y2="-37.8" stroke="#8a8a8a" stroke-width="1" stroke-opacity="0.38"/><line x1="-262.3" y1="-55.2" x2="1278.6" y2="-58.6" stroke="#8a8a8a" stroke-width="1" stroke-opacity="0.38"/><line x1="-193.6" y1="-72.9" x2="1210.9" y2="-75.8" stroke="#8a8a8a" stroke-width="1" stroke-opacity="0.38"/><line x1="-136.1" y1="-87.8" x2="1154.1" y2="-90.2" stroke="#8a8a8a" stroke-width="1" stroke-opacity="0.38"/><line x1="-87.4" y1="-100.4" x2="1105.7" y2="-102.4" stroke="#8a8a8a" stroke-width="1" stroke-opacity="0.38"/><line x1="-45.5" y1="-111.2" x2="1064.1" y2="-113.0" stroke="#8a8a8a" stroke-width="1" stroke-opacity="0.38"/><line x1="-9.1" y1="-120.6" x2="1028.0" y2="-122.2" stroke="#8a8a8a" stroke-width="1" stroke-opacity="0.38"/><line x1="22.8" y1="-128.8" x2="996.2" y2="-130.2" stroke="#8a8a8a" stroke-width="1" stroke-opacity="0.38"/><line x1="51.0" y1="-136.1" x2="968.1" y2="-137.3" stroke="#8a8a8a" stroke-width="1" stroke-opacity="0.38"/></g>
<polygon points="286.1,588.1 790.7,583.3 618.7,74.6 420.9,75.4" fill="#3d4148"/>
<g fill="none" stroke="#56729f" stroke-width="7.0" stroke-linejoin="round" stroke-opacity="0.5"><polygon points="420.8,82.8 437.3,82.7 438.7,76.0 422.5,76.1"/><polygon points="441.0,82.7 457.6,82.7 458.6,76.0 442.4,76.0"/><polygon points="461.3,82.7 477.8,82.6 478.4,75.9 462.2,76.0"/><polygon points="481.6,82.6 498.1,82.5 498.2,75.8 482.1,75.9"/><polygon points="501.8,82.5 518.3,82.4 518.1,75.7 501.9,75.8"/><polygon points="522.0,82.4 538.5,82.4 537.9,75.7 521.7,75.7"/><polygon points="542.2,82.3 558.7,82.3 557.7,75.6 541.6,75.7"/><polygon points="562.5,82.3 578.9,82.2 577.5,75.5 561.4,75.6"/><polygon points="582.7,82.2 599.1,82.1 597.3,75.5 581.2,75.5"/><polygon points="602.8,82.1 619.3,82.0 617.1,75.4 601.0,75.4"/><polygon points="418.6,91.4 435.5,91.3 437.0,84.3 420.4,84.4"/><polygon points="439.4,91.3 456.3,91.3 457.3,84.2 440.7,84.3"/><polygon points="460.1,91.2 477.1,91.2 477.7,84.1 461.1,84.2"/><polygon points="480.9,91.2 497.8,91.1 498.0,84.1 481.4,84.1"/><polygon points="501.6,91.1 518.6,91.0 518.3,84.0 501.8,84.1"/><polygon points="522.4,91.0 539.3,90.9 538.6,83.9 522.1,84.0"/><polygon points="543.1,90.9 560.0,90.9 559.0,83.8 542.4,83.9"/><polygon points="563.9,90.8 580.7,90.8 579.2,83.8 562.7,83.8"/><polygon points="584.6,90.8 601.4,90.7 599.5,83.7 583.0,83.7"/><polygon points="605.3,90.7 622.1,90.6 619.8,83.6 603.3,83.7"/><polygon points="416.2,100.5 433.6,100.4 435.2,93.0 418.1,93.1"/><polygon points="437.6,100.4 454.9,100.3 456.0,92.9 439.0,93.0"/><polygon points="458.9,100.3 476.3,100.2 476.9,92.8 459.9,92.9"/><polygon points="480.2,100.2 497.6,100.1 497.8,92.7 480.8,92.8"/><polygon points="501.5,100.1 518.8,100.1 518.6,92.7 501.6,92.7"/><polygon points="522.8,100.0 540.1,100.0 539.4,92.6 522.5,92.6"/><polygon points="544.1,100.0 561.4,99.9 560.3,92.5 543.3,92.6"/><polygon points="565.3,99.9 582.7,99.8 581.1,92.4 564.1,92.5"/><polygon points="586.6,99.8 603.9,99.7 601.9,92.3 584.9,92.4"/><polygon points="607.8,99.7 625.1,99.6 622.7,92.2 605.7,92.3"/><polygon points="413.8,110.0 431.6,109.9 433.3,102.1 415.8,102.2"/><polygon points="435.7,109.9 453.5,109.8 454.7,102.0 437.2,102.1"/><polygon points="457.6,109.8 475.4,109.8 476.1,101.9 458.7,102.0"/><polygon points="479.5,109.7 497.3,109.7 497.5,101.9 480.1,101.9"/><polygon points="501.3,109.6 519.2,109.6 518.9,101.8 501.5,101.8"/><polygon points="523.2,109.6 541.0,109.5 540.3,101.7 522.9,101.8"/><polygon points="545.0,109.5 562.8,109.4 561.7,101.6 544.2,101.7"/><polygon points="566.9,109.4 584.7,109.3 583.0,101.5 565.6,101.6"/><polygon points="588.7,109.3 606.5,109.2 604.4,101.4 587.0,101.5"/><polygon points="610.5,109.2 628.3,109.1 625.7,101.3 608.3,101.4"/><polygon points="411.2,120.1 429.5,120.0 431.3,111.8 413.3,111.8"/><polygon points="433.7,120.0 452.0,119.9 453.3,111.7 435.3,111.7"/><polygon points="456.2,119.9 474.5,119.8 475.3,111.6 457.3,111.6"/><polygon points="478.7,119.8 497.0,119.7 497.2,111.5 479.3,111.6"/><polygon points="501.2,119.7 519.5,119.6 519.2,111.4 501.3,111.5"/><polygon points="523.6,119.6 541.9,119.5 541.2,111.3 523.3,111.4"/><polygon points="546.1,119.5 564.4,119.4 563.1,111.2 545.2,111.3"/><polygon points="568.5,119.4 586.8,119.3 585.1,111.1 567.2,111.2"/><polygon points="591.0,119.3 609.2,119.2 607.0,111.0 589.1,111.1"/><polygon points="613.4,119.2 631.6,119.1 628.9,110.9 611.0,111.0"/><polygon points="408.5,130.7 427.3,130.6 429.1,121.9 410.7,122.0"/><polygon points="431.6,130.6 450.5,130.5 451.8,121.8 433.3,121.9"/><polygon points="454.7,130.5 473.6,130.4 474.4,121.7 455.9,121.8"/><polygon points="477.9,130.4 496.7,130.3 497.0,121.6 478.5,121.7"/><polygon points="501.0,130.3 519.8,130.2 519.5,121.5 501.1,121.6"/><polygon points="524.1,130.2 542.9,130.1 542.1,121.4 523.7,121.5"/><polygon points="547.2,130.1 566.0,130.0 564.7,121.3 546.3,121.4"/><polygon points="570.3,130.0 589.1,129.9 587.2,121.2 568.8,121.3"/><polygon points="593.3,129.9 612.1,129.8 609.7,121.2 591.4,121.2"/><polygon points="616.4,129.8 635.2,129.7 632.3,121.1 613.9,121.1"/><polygon points="405.6,142.0 425.0,141.9 426.9,132.7 407.9,132.8"/><polygon points="429.4,141.9 448.8,141.8 450.2,132.6 431.2,132.7"/><polygon points="453.2,141.8 472.6,141.7 473.4,132.5 454.5,132.6"/><polygon points="477.0,141.7 496.4,141.6 496.7,132.4 477.7,132.4"/><polygon points="500.8,141.6 520.2,141.5 519.9,132.3 501.0,132.3"/><polygon points="524.6,141.4 543.9,141.4 543.1,132.2 524.2,132.2"/><polygon points="548.3,141.3 567.7,141.3 566.3,132.1 547.4,132.1"/><polygon points="572.1,141.2 591.4,141.1 589.5,132.0 570.6,132.0"/><polygon points="595.8,141.1 615.2,141.0 612.7,131.9 593.8,131.9"/><polygon points="619.6,141.0 638.9,140.9 635.8,131.8 617.0,131.8"/><polygon points="402.5,153.9 422.5,153.8 424.5,144.1 405.0,144.1"/><polygon points="427.0,153.8 447.0,153.7 448.5,143.9 429.0,144.0"/><polygon points="451.6,153.7 471.5,153.6 472.4,143.8 452.9,143.9"/><polygon points="476.1,153.6 496.1,153.5 496.3,143.7 476.8,143.8"/><polygon points="500.6,153.5 520.6,153.4 520.2,143.6 500.8,143.7"/><polygon points="525.1,153.4 545.0,153.3 544.1,143.5 524.7,143.6"/><polygon points="549.6,153.2 569.5,153.2 568.0,143.4 548.6,143.5"/><polygon points="574.0,153.1 594.0,153.0 591.9,143.3 572.4,143.4"/><polygon points="598.5,153.0 618.4,152.9 615.8,143.2 596.3,143.3"/><polygon points="622.9,152.9 642.8,152.8 639.6,143.1 620.2,143.2"/><polygon points="399.2,166.6 419.8,166.5 422.0,156.1 401.9,156.2"/><polygon points="424.5,166.5 445.1,166.4 446.7,156.0 426.6,156.1"/><polygon points="449.8,166.4 470.4,166.3 471.3,155.9 451.2,156.0"/><polygon points="475.1,166.3 495.7,166.2 496.0,155.8 475.9,155.9"/><polygon points="500.4,166.1 521.0,166.0 520.6,155.7 500.6,155.8"/><polygon points="525.6,166.0 546.2,165.9 545.3,155.6 525.2,155.6"/><polygon points="550.9,165.9 571.4,165.8 569.9,155.4 549.8,155.5"/><polygon points="576.1,165.8 596.6,165.7 594.5,155.3 574.4,155.4"/><polygon points="601.3,165.7 621.8,165.6 619.0,155.2 599.0,155.3"/><polygon points="626.5,165.5 647.0,165.4 643.6,155.1 623.6,155.2"/><polygon points="395.7,180.1 417.0,180.0 419.3,169.0 398.6,169.1"/><polygon points="421.9,180.0 443.1,179.9 444.8,168.8 424.0,168.9"/><polygon points="448.0,179.9 469.2,179.8 470.2,168.7 449.5,168.8"/><polygon points="474.1,179.7 495.3,179.6 495.6,168.6 474.9,168.7"/><polygon points="500.2,179.6 521.4,179.5 521.0,168.5 500.3,168.6"/><polygon points="526.2,179.5 547.4,179.4 546.4,168.3 525.7,168.4"/><polygon points="552.3,179.3 573.5,179.2 571.8,168.2 551.1,168.3"/><polygon points="578.3,179.2 599.5,179.1 597.2,168.1 576.5,168.2"/><polygon points="604.3,179.1 625.5,179.0 622.5,168.0 601.9,168.1"/><polygon points="630.3,179.0 651.5,178.9 647.8,167.9 627.2,168.0"/><polygon points="392.0,194.5 414.0,194.4 416.5,182.6 395.1,182.7"/><polygon points="419.0,194.4 441.0,194.3 442.8,182.5 421.4,182.6"/><polygon points="446.0,194.2 468.0,194.1 469.0,182.3 447.6,182.5"/><polygon points="473.0,194.1 494.9,194.0 495.3,182.2 473.9,182.3"/><polygon points="499.9,194.0 521.9,193.9 521.5,182.1 500.1,182.2"/><polygon points="526.8,193.8 548.8,193.7 547.7,182.0 526.3,182.1"/><polygon points="553.7,193.7 575.7,193.6 573.9,181.8 552.5,181.9"/><polygon points="580.6,193.6 602.5,193.4 600.1,181.7 578.7,181.8"/><polygon points="607.5,193.4 629.4,193.3 626.2,181.6 604.9,181.7"/><polygon points="634.4,193.3 656.3,193.2 652.4,181.4 631.1,181.5"/><polygon points="388.1,209.9 410.8,209.8 413.5,197.2 391.3,197.3"/><polygon points="416.0,209.8 438.7,209.6 440.6,197.0 418.5,197.1"/><polygon points="443.9,209.6 466.6,209.5 467.7,196.9 445.6,197.0"/><polygon points="471.8,209.5 494.5,209.3 494.8,196.8 472.7,196.9"/><polygon points="499.6,209.3 522.3,209.2 521.9,196.6 499.9,196.7"/><polygon points="527.5,209.2 550.2,209.1 549.0,196.5 527.0,196.6"/><polygon points="555.3,209.0 578.0,208.9 576.1,196.3 554.0,196.5"/><polygon points="583.1,208.9 605.8,208.8 603.1,196.2 581.1,196.3"/><polygon points="610.9,208.7 633.6,208.6 630.2,196.1 608.1,196.2"/><polygon points="638.7,208.6 661.3,208.5 657.2,195.9 635.2,196.0"/><polygon points="383.8,226.4 407.4,226.3 410.2,212.7 387.3,212.9"/><polygon points="412.7,226.2 436.3,226.1 438.3,212.6 415.4,212.7"/><polygon points="441.6,226.1 465.2,225.9 466.4,212.4 443.5,212.6"/><polygon points="470.5,225.9 494.0,225.8 494.4,212.3 471.6,212.4"/><polygon points="499.4,225.8 522.9,225.6 522.4,212.2 499.6,212.3"/><polygon points="528.2,225.6 551.7,225.5 550.5,212.0 527.6,212.1"/><polygon points="557.0,225.4 580.5,225.3 578.4,211.9 555.6,212.0"/><polygon points="585.8,225.3 609.3,225.2 606.4,211.7 583.6,211.8"/><polygon points="614.6,225.1 638.0,225.0 634.4,211.6 611.6,211.7"/><polygon points="643.4,225.0 666.8,224.8 662.3,211.4 639.6,211.5"/><polygon points="379.3,244.1 403.7,243.9 406.7,229.4 383.0,229.6"/><polygon points="409.3,243.9 433.7,243.8 435.8,229.3 412.1,229.4"/><polygon points="439.2,243.7 463.6,243.6 464.9,229.1 441.2,229.2"/><polygon points="469.2,243.6 493.5,243.4 493.9,229.0 470.3,229.1"/><polygon points="499.1,243.4 523.4,243.3 523.0,228.8 499.3,228.9"/><polygon points="529.0,243.2 553.3,243.1 552.0,228.6 528.3,228.8"/><polygon points="558.8,243.1 583.2,242.9 581.0,228.5 557.4,228.6"/><polygon points="588.7,242.9 613.0,242.8 610.0,228.3 586.3,228.4"/><polygon points="618.5,242.7 642.8,242.6 638.9,228.2 615.3,228.3"/><polygon points="648.4,242.6 672.6,242.4 667.8,228.0 644.3,228.1"/><polygon points="374.4,263.1 399.7,263.0 403.0,247.3 378.4,247.5"/><polygon points="405.5,262.9 430.9,262.8 433.2,247.2 408.6,247.3"/><polygon points="436.6,262.8 461.9,262.6 463.3,247.0 438.7,247.1"/><polygon points="467.7,262.6 493.0,262.4 493.4,246.8 468.9,247.0"/><polygon points="498.7,262.4 524.0,262.2 523.5,246.7 499.0,246.8"/><polygon points="529.8,262.2 555.1,262.1 553.6,246.5 529.1,246.6"/><polygon points="560.8,262.0 586.1,261.9 583.7,246.3 559.2,246.5"/><polygon points="591.8,261.8 617.0,261.7 613.7,246.2 589.3,246.3"/><polygon points="622.8,261.7 648.0,261.5 643.8,246.0 619.3,246.1"/><polygon points="653.7,261.5 678.9,261.3 673.8,245.8 649.3,245.9"/><polygon points="369.1,283.7 395.5,283.5 399.0,266.7 373.4,266.8"/><polygon points="401.4,283.5 427.8,283.3 430.3,266.5 404.8,266.6"/><polygon points="433.8,283.3 460.1,283.1 461.6,266.3 436.1,266.4"/><polygon points="466.1,283.1 492.4,282.9 492.9,266.1 467.4,266.2"/><polygon points="498.4,282.9 524.7,282.7 524.2,265.9 498.7,266.1"/><polygon points="530.7,282.7 557.0,282.5 555.4,265.7 529.9,265.9"/><polygon points="562.9,282.5 589.2,282.3 586.6,265.5 561.2,265.7"/><polygon points="595.1,282.3 621.4,282.1 617.8,265.4 592.4,265.5"/><polygon points="627.3,282.1 653.6,281.9 649.0,265.2 623.6,265.3"/><polygon points="659.5,281.9 685.7,281.7 680.1,265.0 654.8,265.1"/><polygon points="363.4,305.9 390.8,305.8 394.6,287.5 368.1,287.7"/><polygon points="397.1,305.7 424.5,305.5 427.2,287.3 400.7,287.5"/><polygon points="430.7,305.5 458.2,305.3 459.8,287.1 433.2,287.3"/><polygon points="464.4,305.3 491.8,305.1 492.3,286.9 465.8,287.1"/><polygon points="498.0,305.1 525.4,304.9 524.8,286.7 498.3,286.9"/><polygon points="531.6,304.9 559.0,304.7 557.3,286.5 530.8,286.7"/><polygon points="565.2,304.7 592.6,304.5 589.8,286.3 563.3,286.5"/><polygon points="598.8,304.4 626.1,304.3 622.2,286.1 595.8,286.3"/><polygon points="632.3,304.2 659.6,304.1 654.6,285.9 628.2,286.1"/><polygon points="665.8,304.0 693.1,303.8 687.0,285.7 660.6,285.9"/><polygon points="357.1,330.1 385.8,329.9 389.9,310.1 362.2,310.3"/><polygon points="392.3,329.9 420.9,329.7 423.9,309.9 396.2,310.0"/><polygon points="427.4,329.7 456.0,329.5 457.8,309.6 430.1,309.8"/><polygon points="462.5,329.4 491.1,329.2 491.7,309.4 464.1,309.6"/><polygon points="497.6,329.2 526.2,329.0 525.6,309.2 498.0,309.4"/><polygon points="532.7,329.0 561.2,328.8 559.4,309.0 531.8,309.2"/><polygon points="567.7,328.7 596.2,328.5 593.2,308.8 565.7,309.0"/><polygon points="602.7,328.5 631.2,328.3 627.0,308.6 599.5,308.7"/><polygon points="637.7,328.3 666.1,328.1 660.8,308.3 633.2,308.5"/><polygon points="672.6,328.0 701.1,327.8 694.5,308.1 667.0,308.3"/><polygon points="350.3,356.5 380.3,356.3 384.8,334.6 355.9,334.8"/><polygon points="387.1,356.2 417.0,356.0 420.2,334.4 391.4,334.6"/><polygon points="423.8,356.0 453.7,355.8 455.6,334.2 426.8,334.4"/><polygon points="460.5,355.7 490.4,355.5 491.0,333.9 462.2,334.1"/><polygon points="497.2,355.5 527.0,355.3 526.3,333.7 497.5,333.9"/><polygon points="533.8,355.2 563.6,355.0 561.6,333.5 532.9,333.6"/><polygon points="570.4,355.0 600.2,354.8 596.9,333.2 568.2,333.4"/><polygon points="607.0,354.7 636.8,354.5 632.2,333.0 603.5,333.2"/><polygon points="643.5,354.5 673.3,354.3 667.4,332.7 638.7,332.9"/><polygon points="680.0,354.2 709.8,354.0 702.6,332.5 673.9,332.7"/><polygon points="342.9,385.3 374.3,385.1 379.2,361.4 349.0,361.6"/><polygon points="381.4,385.1 412.8,384.8 416.3,361.2 386.1,361.4"/><polygon points="419.9,384.8 451.2,384.6 453.3,360.9 423.1,361.1"/><polygon points="458.3,384.5 489.6,384.3 490.2,360.6 460.1,360.9"/><polygon points="496.7,384.2 528.0,384.0 527.2,360.4 497.1,360.6"/><polygon points="535.0,384.0 566.3,383.7 564.1,360.1 534.0,360.3"/><polygon points="573.4,383.7 604.6,383.4 601.0,359.9 570.9,360.1"/><polygon points="611.7,383.4 642.8,383.2 637.8,359.6 607.8,359.8"/><polygon points="649.9,383.1 681.1,382.9 674.7,359.4 644.7,359.6"/><polygon points="688.1,382.8 719.3,382.6 711.5,359.1 681.5,359.3"/><polygon points="334.8,417.1 367.7,416.8 373.1,390.8 341.5,391.0"/><polygon points="375.2,416.8 408.1,416.5 411.9,390.5 380.3,390.7"/><polygon points="415.5,416.5 448.4,416.2 450.7,390.2 419.1,390.4"/><polygon points="455.9,416.1 488.7,415.9 489.4,389.9 457.9,390.1"/><polygon points="496.2,415.8 529.0,415.6 528.1,389.6 496.6,389.8"/><polygon points="536.4,415.5 569.2,415.3 566.8,389.3 535.3,389.6"/><polygon points="576.6,415.2 609.4,415.0 605.4,389.1 573.9,389.3"/><polygon points="616.8,414.9 649.5,414.7 644.0,388.8 612.6,389.0"/><polygon points="657.0,414.6 689.7,414.4 682.6,388.5 651.2,388.7"/><polygon points="697.1,414.3 729.7,414.1 721.1,388.2 689.7,388.4"/><polygon points="325.7,452.1 360.4,451.8 366.4,423.0 333.2,423.3"/><polygon points="368.3,451.8 402.9,451.5 407.1,422.7 373.9,423.0"/><polygon points="410.7,451.4 445.3,451.1 447.9,422.4 414.7,422.7"/><polygon points="453.2,451.1 487.7,450.8 488.5,422.1 455.4,422.3"/><polygon points="495.6,450.7 530.1,450.5 529.2,421.8 496.0,422.0"/><polygon points="537.9,450.4 572.4,450.1 569.8,421.5 536.7,421.7"/><polygon points="580.2,450.1 614.7,449.8 610.3,421.2 577.3,421.4"/><polygon points="622.5,449.7 656.9,449.4 650.8,420.8 617.8,421.1"/><polygon points="664.7,449.4 699.1,449.1 691.3,420.5 658.3,420.8"/><polygon points="706.9,449.0 741.3,448.8 731.8,420.2 698.8,420.5"/><polygon points="315.7,491.0 352.3,490.7 359.0,458.7 324.0,459.0"/><polygon points="360.6,490.6 397.1,490.3 401.9,458.4 366.9,458.6"/><polygon points="405.4,490.2 441.9,489.9 444.7,458.0 409.8,458.3"/><polygon points="450.2,489.9 486.6,489.5 487.5,457.7 452.6,457.9"/><polygon points="494.9,489.5 531.3,489.2 530.3,457.3 495.4,457.6"/><polygon points="539.6,489.1 576.0,488.8 573.0,457.0 538.2,457.3"/><polygon points="584.2,488.7 620.6,488.4 615.7,456.6 580.9,456.9"/><polygon points="628.8,488.3 665.1,488.0 658.4,456.3 623.6,456.6"/><polygon points="673.4,488.0 709.6,487.7 701.0,455.9 666.3,456.2"/><polygon points="717.9,487.6 754.1,487.3 743.5,455.6 708.9,455.9"/><polygon points="304.5,534.4 343.3,534.1 350.7,498.3 313.8,498.7"/><polygon points="352.0,534.0 390.7,533.6 396.0,498.0 359.1,498.3"/><polygon points="399.5,533.6 438.1,533.2 441.2,497.6 404.4,497.9"/><polygon points="446.8,533.1 485.4,532.8 486.4,497.2 449.6,497.5"/><polygon points="494.2,532.7 532.7,532.4 531.6,496.8 494.8,497.1"/><polygon points="541.5,532.3 579.9,532.0 576.7,496.4 539.9,496.7"/><polygon points="588.7,531.9 627.1,531.5 621.7,496.0 585.0,496.3"/><polygon points="635.9,531.5 674.3,531.1 666.7,495.6 630.1,496.0"/><polygon points="683.0,531.0 721.4,530.7 711.7,495.3 675.1,495.6"/><polygon points="730.1,530.6 768.4,530.3 756.6,494.9 720.0,495.2"/><polygon points="292.0,583.2 333.1,582.8 341.5,542.7 302.3,543.0"/><polygon points="342.4,582.7 383.5,582.3 389.4,542.2 350.3,542.6"/><polygon points="392.8,582.3 433.8,581.9 437.3,541.8 398.3,542.1"/><polygon points="443.1,581.8 484.1,581.4 485.2,541.4 446.2,541.7"/><polygon points="493.4,581.3 534.3,580.9 533.0,540.9 494.0,541.3"/><polygon points="543.5,580.8 584.4,580.4 580.7,540.5 541.8,540.8"/><polygon points="593.7,580.4 634.5,580.0 628.4,540.1 589.6,540.4"/><polygon points="643.8,579.9 684.5,579.5 676.1,539.6 637.2,540.0"/><polygon points="693.8,579.4 734.5,579.0 723.7,539.2 684.9,539.6"/><polygon points="743.8,578.9 784.4,578.5 771.2,538.8 732.5,539.1"/></g>
<g stroke="#56729f" stroke-width="4.6" stroke-linejoin="round" paint-order="stroke"><polygon points="420.8,82.8 437.3,82.7 438.7,76.0 422.5,76.1" fill="#def0fc"/><polygon points="441.0,82.7 457.6,82.7 458.6,76.0 442.4,76.0" fill="#def0fc"/><polygon points="461.3,82.7 477.8,82.6 478.4,75.9 462.2,76.0" fill="#def0fc"/><polygon points="481.6,82.6 498.1,82.5 498.2,75.8 482.1,75.9" fill="#def0fc"/><polygon points="501.8,82.5 518.3,82.4 518.1,75.7 501.9,75.8" fill="#def0fc"/><polygon points="522.0,82.4 538.5,82.4 537.9,75.7 521.7,75.7" fill="#def0fc"/><polygon points="542.2,82.3 558.7,82.3 557.7,75.6 541.6,75.7" fill="#def0fc"/><polygon points="562.5,82.3 578.9,82.2 577.5,75.5 561.4,75.6" fill="#def0fc"/><polygon points="582.7,82.2 599.1,82.1 597.3,75.5 581.2,75.5" fill="#def0fc"/><polygon points="602.8,82.1 619.3,82.0 617.1,75.4 601.0,75.4" fill="#def0fc"/><polygon points="418.6,91.4 435.5,91.3 437.0,84.3 420.4,84.4" fill="#def0fc"/><polygon points="439.4,91.3 456.3,91.3 457.3,84.2 440.7,84.3" fill="#def0fc"/><polygon points="460.1,91.2 477.1,91.2 477.7,84.1 461.1,84.2" fill="#def0fc"/><polygon points="480.9,91.2 497.8,91.1 498.0,84.1 481.4,84.1" fill="#def0fc"/><polygon points="501.6,91.1 518.6,91.0 518.3,84.0 501.8,84.1" fill="#def0fc"/><polygon points="522.4,91.0 539.3,90.9 538.6,83.9 522.1,84.0" fill="#def0fc"/><polygon points="543.1,90.9 560.0,90.9 559.0,83.8 542.4,83.9" fill="#def0fc"/><polygon points="563.9,90.8 580.7,90.8 579.2,83.8 562.7,83.8" fill="#def0fc"/><polygon points="584.6,90.8 601.4,90.7 599.5,83.7 583.0,83.7" fill="#def0fc"/><polygon points="605.3,90.7 622.1,90.6 619.8,83.6 603.3,83.7" fill="#def0fc"/><polygon points="416.2,100.5 433.6,100.4 435.2,93.0 418.1,93.1" fill="#def0fc"/><polygon points="437.6,100.4 454.9,100.3 456.0,92.9 439.0,93.0" fill="#def0fc"/><polygon points="458.9,100.3 476.3,100.2 476.9,92.8 459.9,92.9" fill="#def0fc"/><polygon points="480.2,100.2 497.6,100.1 497.8,92.7 480.8,92.8" fill="#def0fc"/><polygon points="501.5,100.1 518.8,100.1 518.6,92.7 501.6,92.7" fill="#def0fc"/><polygon points="522.8,100.0 540.1,100.0 539.4,92.6 522.5,92.6" fill="#def0fc"/><polygon points="544.1,100.0 561.4,99.9 560.3,92.5 543.3,92.6" fill="#def0fc"/><polygon points="565.3,99.9 582.7,99.8 581.1,92.4 564.1,92.5" fill="#def0fc"/><polygon points="586.6,99.8 603.9,99.7 601.9,92.3 584.9,92.4" fill="#def0fc"/><polygon points="607.8,99.7 625.1,99.6 622.7,92.2 605.7,92.3" fill="#def0fc"/><polygon points="413.8,110.0 431.6,109.9 433.3,102.1 415.8,102.2" fill="#def0fc"/><polygon points="435.7,109.9 453.5,109.8 454.7,102.0 437.2,102.1" fill="#def0fc"/><polygon points="457.6,109.8 475.4,109.8 476.1,101.9 458.7,102.0" fill="#def0fc"/><polygon points="479.5,109.7 497.3,109.7 497.5,101.9 480.1,101.9" fill="#def0fc"/><polygon points="501.3,109.6 519.2,109.6 518.9,101.8 501.5,101.8" fill="#def0fc"/><polygon points="523.2,109.6 541.0,109.5 540.3,101.7 522.9,101.8" fill="#def0fc"/><polygon points="545.0,109.5 562.8,109.4 561.7,101.6 544.2,101.7" fill="#def0fc"/><polygon points="566.9,109.4 584.7,109.3 583.0,101.5 565.6,101.6" fill="#def0fc"/><polygon points="588.7,109.3 606.5,109.2 604.4,101.4 587.0,101.5" fill="#def0fc"/><polygon points="610.5,109.2 628.3,109.1 625.7,101.3 608.3,101.4" fill="#def0fc"/><polygon points="411.2,120.1 429.5,120.0 431.3,111.8 413.3,111.8" fill="#def0fc"/><polygon points="433.7,120.0 452.0,119.9 453.3,111.7 435.3,111.7" fill="#def0fc"/><polygon points="456.2,119.9 474.5,119.8 475.3,111.6 457.3,111.6" fill="#def0fc"/><polygon points="478.7,119.8 497.0,119.7 497.2,111.5 479.3,111.6" fill="#def0fc"/><polygon points="501.2,119.7 519.5,119.6 519.2,111.4 501.3,111.5" fill="#def0fc"/><polygon points="523.6,119.6 541.9,119.5 541.2,111.3 523.3,111.4" fill="#def0fc"/><polygon points="546.1,119.5 564.4,119.4 563.1,111.2 545.2,111.3" fill="#def0fc"/><polygon points="568.5,119.4 586.8,119.3 585.1,111.1 567.2,111.2" fill="#def0fc"/><polygon points="591.0,119.3 609.2,119.2 607.0,111.0 589.1,111.1" fill="#def0fc"/><polygon points="613.4,119.2 631.6,119.1 628.9,110.9 611.0,111.0" fill="#def0fc"/><polygon points="408.5,130.7 427.3,130.6 429.1,121.9 410.7,122.0" fill="#def0fc"/><polygon points="431.6,130.6 450.5,130.5 451.8,121.8 433.3,121.9" fill="#def0fc"/><polygon points="454.7,130.5 473.6,130.4 474.4,121.7 455.9,121.8" fill="#def0fc"/><polygon points="477.9,130.4 496.7,130.3 497.0,121.6 478.5,121.7" fill="#def0fc"/><polygon points="501.0,130.3 519.8,130.2 519.5,121.5 501.1,121.6" fill="#def0fc"/><polygon points="524.1,130.2 542.9,130.1 542.1,121.4 523.7,121.5" fill="#def0fc"/><polygon points="547.2,130.1 566.0,130.0 564.7,121.3 546.3,121.4" fill="#def0fc"/><polygon points="570.3,130.0 589.1,129.9 587.2,121.2 568.8,121.3" fill="#def0fc"/><polygon points="593.3,129.9 612.1,129.8 609.7,121.2 591.4,121.2" fill="#def0fc"/><polygon points="616.4,129.8 635.2,129.7 632.3,121.1 613.9,121.1" fill="#def0fc"/><polygon points="405.6,142.0 425.0,141.9 426.9,132.7 407.9,132.8" fill="#def0fc"/><polygon points="429.4,141.9 448.8,141.8 450.2,132.6 431.2,132.7" fill="#def0fc"/><polygon points="453.2,141.8 472.6,141.7 473.4,132.5 454.5,132.6" fill="#def0fc"/><polygon points="477.0,141.7 496.4,141.6 496.7,132.4 477.7,132.4" fill="#def0fc"/><polygon points="500.8,141.6 520.2,141.5 519.9,132.3 501.0,132.3" fill="#def0fc"/><polygon points="524.6,141.4 543.9,141.4 543.1,132.2 524.2,132.2" fill="#def0fc"/><polygon points="548.3,141.3 567.7,141.3 566.3,132.1 547.4,132.1" fill="#def0fc"/><polygon points="572.1,141.2 591.4,141.1 589.5,132.0 570.6,132.0" fill="#def0fc"/><polygon points="595.8,141.1 615.2,141.0 612.7,131.9 593.8,131.9" fill="#def0fc"/><polygon points="619.6,141.0 638.9,140.9 635.8,131.8 617.0,131.8" fill="#def0fc"/><polygon points="402.5,153.9 422.5,153.8 424.5,144.1 405.0,144.1" fill="#def0fc"/><polygon points="427.0,153.8 447.0,153.7 448.5,143.9 429.0,144.0" fill="#def0fc"/><polygon points="451.6,153.7 471.5,153.6 472.4,143.8 452.9,143.9" fill="#def0fc"/><polygon points="476.1,153.6 496.1,153.5 496.3,143.7 476.8,143.8" fill="#def0fc"/><polygon points="500.6,153.5 520.6,153.4 520.2,143.6 500.8,143.7" fill="#def0fc"/><polygon points="525.1,153.4 545.0,153.3 544.1,143.5 524.7,143.6" fill="#def0fc"/><polygon points="549.6,153.2 569.5,153.2 568.0,143.4 548.6,143.5" fill="#def0fc"/><polygon points="574.0,153.1 594.0,153.0 591.9,143.3 572.4,143.4" fill="#def0fc"/><polygon points="598.5,153.0 618.4,152.9 615.8,143.2 596.3,143.3" fill="#def0fc"/><polygon points="622.9,152.9 642.8,152.8 639.6,143.1 620.2,143.2" fill="#def0fc"/><polygon points="399.2,166.6 419.8,166.5 422.0,156.1 401.9,156.2" fill="#def0fc"/><polygon points="424.5,166.5 445.1,166.4 446.7,156.0 426.6,156.1" fill="#def0fc"/><polygon points="449.8,166.4 470.4,166.3 471.3,155.9 451.2,156.0" fill="#def0fc"/><polygon points="475.1,166.3 495.7,166.2 496.0,155.8 475.9,155.9" fill="#def0fc"/><polygon points="500.4,166.1 521.0,166.0 520.6,155.7 500.6,155.8" fill="#def0fc"/><polygon points="525.6,166.0 546.2,165.9 545.3,155.6 525.2,155.6" fill="#def0fc"/><polygon points="550.9,165.9 571.4,165.8 569.9,155.4 549.8,155.5" fill="#def0fc"/><polygon points="576.1,165.8 596.6,165.7 594.5,155.3 574.4,155.4" fill="#def0fc"/><polygon points="601.3,165.7 621.8,165.6 619.0,155.2 599.0,155.3" fill="#def0fc"/><polygon points="626.5,165.5 647.0,165.4 643.6,155.1 623.6,155.2" fill="#def0fc"/><polygon points="395.7,180.1 417.0,180.0 419.3,169.0 398.6,169.1" fill="#def0fc"/><polygon points="421.9,180.0 443.1,179.9 444.8,168.8 424.0,168.9" fill="#def0fc"/><polygon points="448.0,179.9 469.2,179.8 470.2,168.7 449.5,168.8" fill="#def0fc"/><polygon points="474.1,179.7 495.3,179.6 495.6,168.6 474.9,168.7" fill="#def0fc"/><polygon points="500.2,179.6 521.4,179.5 521.0,168.5 500.3,168.6" fill="#def0fc"/><polygon points="526.2,179.5 547.4,179.4 546.4,168.3 525.7,168.4" fill="#def0fc"/><polygon points="552.3,179.3 573.5,179.2 571.8,168.2 551.1,168.3" fill="#def0fc"/><polygon points="578.3,179.2 599.5,179.1 597.2,168.1 576.5,168.2" fill="#def0fc"/><polygon points="604.3,179.1 625.5,179.0 622.5,168.0 601.9,168.1" fill="#def0fc"/><polygon points="630.3,179.0 651.5,178.9 647.8,167.9 627.2,168.0" fill="#def0fc"/><polygon points="392.0,194.5 414.0,194.4 416.5,182.6 395.1,182.7" fill="#def0fc"/><polygon points="419.0,194.4 441.0,194.3 442.8,182.5 421.4,182.6" fill="#def0fc"/><polygon points="446.0,194.2 468.0,194.1 469.0,182.3 447.6,182.5" fill="#def0fc"/><polygon points="473.0,194.1 494.9,194.0 495.3,182.2 473.9,182.3" fill="#def0fc"/><polygon points="499.9,194.0 521.9,193.9 521.5,182.1 500.1,182.2" fill="#def0fc"/><polygon points="526.8,193.8 548.8,193.7 547.7,182.0 526.3,182.1" fill="#def0fc"/><polygon points="553.7,193.7 575.7,193.6 573.9,181.8 552.5,181.9" fill="#def0fc"/><polygon points="580.6,193.6 602.5,193.4 600.1,181.7 578.7,181.8" fill="#def0fc"/><polygon points="607.5,193.4 629.4,193.3 626.2,181.6 604.9,181.7" fill="#def0fc"/><polygon points="634.4,193.3 656.3,193.2 652.4,181.4 631.1,181.5" fill="#def0fc"/><polygon points="388.1,209.9 410.8,209.8 413.5,197.2 391.3,197.3" fill="#def0fc"/><polygon points="416.0,209.8 438.7,209.6 440.6,197.0 418.5,197.1" fill="#def0fc"/><polygon points="443.9,209.6 466.6,209.5 467.7,196.9 445.6,197.0" fill="#def0fc"/><polygon points="471.8,209.5 494.5,209.3 494.8,196.8 472.7,196.9" fill="#def0fc"/><polygon points="499.6,209.3 522.3,209.2 521.9,196.6 499.9,196.7" fill="#def0fc"/><polygon points="527.5,209.2 550.2,209.1 549.0,196.5 527.0,196.6" fill="#def0fc"/><polygon points="555.3,209.0 578.0,208.9 576.1,196.3 554.0,196.5" fill="#def0fc"/><polygon points="583.1,208.9 605.8,208.8 603.1,196.2 581.1,196.3" fill="#def0fc"/><polygon points="610.9,208.7 633.6,208.6 630.2,196.1 608.1,196.2" fill="#def0fc"/><polygon points="638.7,208.6 661.3,208.5 657.2,195.9 635.2,196.0" fill="#def0fc"/><polygon points="383.8,226.4 407.4,226.3 410.2,212.7 387.3,212.9" fill="#def0fc"/><polygon points="412.7,226.2 436.3,226.1 438.3,212.6 415.4,212.7" fill="#def0fc"/><polygon points="441.6,226.1 465.2,225.9 466.4,212.4 443.5,212.6" fill="#def0fc"/><polygon points="470.5,225.9 494.0,225.8 494.4,212.3 471.6,212.4" fill="#def0fc"/><polygon points="499.4,225.8 522.9,225.6 522.4,212.2 499.6,212.3" fill="#def0fc"/><polygon points="528.2,225.6 551.7,225.5 550.5,212.0 527.6,212.1" fill="#def0fc"/><polygon points="557.0,225.4 580.5,225.3 578.4,211.9 555.6,212.0" fill="#def0fc"/><polygon points="585.8,225.3 609.3,225.2 606.4,211.7 583.6,211.8" fill="#def0fc"/><polygon points="614.6,225.1 638.0,225.0 634.4,211.6 611.6,211.7" fill="#def0fc"/><polygon points="643.4,225.0 666.8,224.8 662.3,211.4 639.6,211.5" fill="#def0fc"/><polygon points="379.3,244.1 403.7,243.9 406.7,229.4 383.0,229.6" fill="#def0fc"/><polygon points="409.3,243.9 433.7,243.8 435.8,229.3 412.1,229.4" fill="#def0fc"/><polygon points="439.2,243.7 463.6,243.6 464.9,229.1 441.2,229.2" fill="#def0fc"/><polygon points="469.2,243.6 493.5,243.4 493.9,229.0 470.3,229.1" fill="#def0fc"/><polygon points="499.1,243.4 523.4,243.3 523.0,228.8 499.3,228.9" fill="#def0fc"/><polygon points="529.0,243.2 553.3,243.1 552.0,228.6 528.3,228.8" fill="#def0fc"/><polygon points="558.8,243.1 583.2,242.9 581.0,228.5 557.4,228.6" fill="#def0fc"/><polygon points="588.7,242.9 613.0,242.8 610.0,228.3 586.3,228.4" fill="#def0fc"/><polygon points="618.5,242.7 642.8,242.6 638.9,228.2 615.3,228.3" fill="#def0fc"/><polygon points="648.4,242.6 672.6,242.4 667.8,228.0 644.3,228.1" fill="#def0fc"/><polygon points="374.4,263.1 399.7,263.0 403.0,247.3 378.4,247.5" fill="#def0fc"/><polygon points="405.5,262.9 430.9,262.8 433.2,247.2 408.6,247.3" fill="#def0fc"/><polygon points="436.6,262.8 461.9,262.6 463.3,247.0 438.7,247.1" fill="#def0fc"/><polygon points="467.7,262.6 493.0,262.4 493.4,246.8 468.9,247.0" fill="#def0fc"/><polygon points="498.7,262.4 524.0,262.2 523.5,246.7 499.0,246.8" fill="#def0fc"/><polygon points="529.8,262.2 555.1,262.1 553.6,246.5 529.1,246.6" fill="#def0fc"/><polygon points="560.8,262.0 586.1,261.9 583.7,246.3 559.2,246.5" fill="#def0fc"/><polygon points="591.8,261.8 617.0,261.7 613.7,246.2 589.3,246.3" fill="#def0fc"/><polygon points="622.8,261.7 648.0,261.5 643.8,246.0 619.3,246.1" fill="#def0fc"/><polygon points="653.7,261.5 678.9,261.3 673.8,245.8 649.3,245.9" fill="#def0fc"/><polygon points="369.1,283.7 395.5,283.5 399.0,266.7 373.4,266.8" fill="#def0fc"/><polygon points="401.4,283.5 427.8,283.3 430.3,266.5 404.8,266.6" fill="#def0fc"/><polygon points="433.8,283.3 460.1,283.1 461.6,266.3 436.1,266.4" fill="#def0fc"/><polygon points="466.1,283.1 492.4,282.9 492.9,266.1 467.4,266.2" fill="#def0fc"/><polygon points="498.4,282.9 524.7,282.7 524.2,265.9 498.7,266.1" fill="#def0fc"/><polygon points="530.7,282.7 557.0,282.5 555.4,265.7 529.9,265.9" fill="#def0fc"/><polygon points="562.9,282.5 589.2,282.3 586.6,265.5 561.2,265.7" fill="#def0fc"/><polygon points="595.1,282.3 621.4,282.1 617.8,265.4 592.4,265.5" fill="#def0fc"/><polygon points="627.3,282.1 653.6,281.9 649.0,265.2 623.6,265.3" fill="#def0fc"/><polygon points="659.5,281.9 685.7,281.7 680.1,265.0 654.8,265.1" fill="#def0fc"/><polygon points="363.4,305.9 390.8,305.8 394.6,287.5 368.1,287.7" fill="#def0fc"/><polygon points="397.1,305.7 424.5,305.5 427.2,287.3 400.7,287.5" fill="#def0fc"/><polygon points="430.7,305.5 458.2,305.3 459.8,287.1 433.2,287.3" fill="#def0fc"/><polygon points="464.4,305.3 491.8,305.1 492.3,286.9 465.8,287.1" fill="#def0fc"/><polygon points="498.0,305.1 525.4,304.9 524.8,286.7 498.3,286.9" fill="#def0fc"/><polygon points="531.6,304.9 559.0,304.7 557.3,286.5 530.8,286.7" fill="#def0fc"/><polygon points="565.2,304.7 592.6,304.5 589.8,286.3 563.3,286.5" fill="#def0fc"/><polygon points="598.8,304.4 626.1,304.3 622.2,286.1 595.8,286.3" fill="#def0fc"/><polygon points="632.3,304.2 659.6,304.1 654.6,285.9 628.2,286.1" fill="#def0fc"/><polygon points="665.8,304.0 693.1,303.8 687.0,285.7 660.6,285.9" fill="#def0fc"/><polygon points="357.1,330.1 385.8,329.9 389.9,310.1 362.2,310.3" fill="#def0fc"/><polygon points="392.3,329.9 420.9,329.7 423.9,309.9 396.2,310.0" fill="#def0fc"/><polygon points="427.4,329.7 456.0,329.5 457.8,309.6 430.1,309.8" fill="#def0fc"/><polygon points="462.5,329.4 491.1,329.2 491.7,309.4 464.1,309.6" fill="#def0fc"/><polygon points="497.6,329.2 526.2,329.0 525.6,309.2 498.0,309.4" fill="#def0fc"/><polygon points="532.7,329.0 561.2,328.8 559.4,309.0 531.8,309.2" fill="#def0fc"/><polygon points="567.7,328.7 596.2,328.5 593.2,308.8 565.7,309.0" fill="#def0fc"/><polygon points="602.7,328.5 631.2,328.3 627.0,308.6 599.5,308.7" fill="#def0fc"/><polygon points="637.7,328.3 666.1,328.1 660.8,308.3 633.2,308.5" fill="#def0fc"/><polygon points="672.6,328.0 701.1,327.8 694.5,308.1 667.0,308.3" fill="#def0fc"/><polygon points="350.3,356.5 380.3,356.3 384.8,334.6 355.9,334.8" fill="#def0fc"/><polygon points="387.1,356.2 417.0,356.0 420.2,334.4 391.4,334.6" fill="#def0fc"/><polygon points="423.8,356.0 453.7,355.8 455.6,334.2 426.8,334.4" fill="#def0fc"/><polygon points="460.5,355.7 490.4,355.5 491.0,333.9 462.2,334.1" fill="#def0fc"/><polygon points="497.2,355.5 527.0,355.3 526.3,333.7 497.5,333.9" fill="#def0fc"/><polygon points="533.8,355.2 563.6,355.0 561.6,333.5 532.9,333.6" fill="#def0fc"/><polygon points="570.4,355.0 600.2,354.8 596.9,333.2 568.2,333.4" fill="#def0fc"/><polygon points="607.0,354.7 636.8,354.5 632.2,333.0 603.5,333.2" fill="#def0fc"/><polygon points="643.5,354.5 673.3,354.3 667.4,332.7 638.7,332.9" fill="#def0fc"/><polygon points="680.0,354.2 709.8,354.0 702.6,332.5 673.9,332.7" fill="#def0fc"/><polygon points="342.9,385.3 374.3,385.1 379.2,361.4 349.0,361.6" fill="#def0fc"/><polygon points="381.4,385.1 412.8,384.8 416.3,361.2 386.1,361.4" fill="#def0fc"/><polygon points="419.9,384.8 451.2,384.6 453.3,360.9 423.1,361.1" fill="#def0fc"/><polygon points="458.3,384.5 489.6,384.3 490.2,360.6 460.1,360.9" fill="#def0fc"/><polygon points="496.7,384.2 528.0,384.0 527.2,360.4 497.1,360.6" fill="#def0fc"/><polygon points="535.0,384.0 566.3,383.7 564.1,360.1 534.0,360.3" fill="#def0fc"/><polygon points="573.4,383.7 604.6,383.4 601.0,359.9 570.9,360.1" fill="#def0fc"/><polygon points="611.7,383.4 642.8,383.2 637.8,359.6 607.8,359.8" fill="#def0fc"/><polygon points="649.9,383.1 681.1,382.9 674.7,359.4 644.7,359.6" fill="#def0fc"/><polygon points="688.1,382.8 719.3,382.6 711.5,359.1 681.5,359.3" fill="#def0fc"/><polygon points="334.8,417.1 367.7,416.8 373.1,390.8 341.5,391.0" fill="#def0fc"/><polygon points="375.2,416.8 408.1,416.5 411.9,390.5 380.3,390.7" fill="#def0fc"/><polygon points="415.5,416.5 448.4,416.2 450.7,390.2 419.1,390.4" fill="#def0fc"/><polygon points="455.9,416.1 488.7,415.9 489.4,389.9 457.9,390.1" fill="#def0fc"/><polygon points="496.2,415.8 529.0,415.6 528.1,389.6 496.6,389.8" fill="#def0fc"/><polygon points="536.4,415.5 569.2,415.3 566.8,389.3 535.3,389.6" fill="#def0fc"/><polygon points="576.6,415.2 609.4,415.0 605.4,389.1 573.9,389.3" fill="#def0fc"/><polygon points="616.8,414.9 649.5,414.7 644.0,388.8 612.6,389.0" fill="#def0fc"/><polygon points="657.0,414.6 689.7,414.4 682.6,388.5 651.2,388.7" fill="#def0fc"/><polygon points="697.1,414.3 729.7,414.1 721.1,388.2 689.7,388.4" fill="#def0fc"/><polygon points="325.7,452.1 360.4,451.8 366.4,423.0 333.2,423.3" fill="#def0fc"/><polygon points="368.3,451.8 402.9,451.5 407.1,422.7 373.9,423.0" fill="#def0fc"/><polygon points="410.7,451.4 445.3,451.1 447.9,422.4 414.7,422.7" fill="#def0fc"/><polygon points="453.2,451.1 487.7,450.8 488.5,422.1 455.4,422.3" fill="#def0fc"/><polygon points="495.6,450.7 530.1,450.5 529.2,421.8 496.0,422.0" fill="#def0fc"/><polygon points="537.9,450.4 572.4,450.1 569.8,421.5 536.7,421.7" fill="#def0fc"/><polygon points="580.2,450.1 614.7,449.8 610.3,421.2 577.3,421.4" fill="#def0fc"/><polygon points="622.5,449.7 656.9,449.4 650.8,420.8 617.8,421.1" fill="#def0fc"/><polygon points="664.7,449.4 699.1,449.1 691.3,420.5 658.3,420.8" fill="#def0fc"/><polygon points="706.9,449.0 741.3,448.8 731.8,420.2 698.8,420.5" fill="#def0fc"/><polygon points="315.7,491.0 352.3,490.7 359.0,458.7 324.0,459.0" fill="#def0fc"/><polygon points="360.6,490.6 397.1,490.3 401.9,458.4 366.9,458.6" fill="#def0fc"/><polygon points="405.4,490.2 441.9,489.9 444.7,458.0 409.8,458.3" fill="#def0fc"/><polygon points="450.2,489.9 486.6,489.5 487.5,457.7 452.6,457.9" fill="#def0fc"/><polygon points="494.9,489.5 531.3,489.2 530.3,457.3 495.4,457.6" fill="#def0fc"/><polygon points="539.6,489.1 576.0,488.8 573.0,457.0 538.2,457.3" fill="#def0fc"/><polygon points="584.2,488.7 620.6,488.4 615.7,456.6 580.9,456.9" fill="#def0fc"/><polygon points="628.8,488.3 665.1,488.0 658.4,456.3 623.6,456.6" fill="#def0fc"/><polygon points="673.4,488.0 709.6,487.7 701.0,455.9 666.3,456.2" fill="#def0fc"/><polygon points="717.9,487.6 754.1,487.3 743.5,455.6 708.9,455.9" fill="#def0fc"/><polygon points="304.5,534.4 343.3,534.1 350.7,498.3 313.8,498.7" fill="#def0fc"/><polygon points="352.0,534.0 390.7,533.6 396.0,498.0 359.1,498.3" fill="#def0fc"/><polygon points="399.5,533.6 438.1,533.2 441.2,497.6 404.4,497.9" fill="#def0fc"/><polygon points="446.8,533.1 485.4,532.8 486.4,497.2 449.6,497.5" fill="#def0fc"/><polygon points="494.2,532.7 532.7,532.4 531.6,496.8 494.8,497.1" fill="#def0fc"/><polygon points="541.5,532.3 579.9,532.0 576.7,496.4 539.9,496.7" fill="#def0fc"/><polygon points="588.7,531.9 627.1,531.5 621.7,496.0 585.0,496.3" fill="#def0fc"/><polygon points="635.9,531.5 674.3,531.1 666.7,495.6 630.1,496.0" fill="#def0fc"/><polygon points="683.0,531.0 721.4,530.7 711.7,495.3 675.1,495.6" fill="#def0fc"/><polygon points="730.1,530.6 768.4,530.3 756.6,494.9 720.0,495.2" fill="#def0fc"/><polygon points="292.0,583.2 333.1,582.8 341.5,542.7 302.3,543.0" fill="#def0fc"/><polygon points="342.4,582.7 383.5,582.3 389.4,542.2 350.3,542.6" fill="#def0fc"/><polygon points="392.8,582.3 433.8,581.9 437.3,541.8 398.3,542.1" fill="#def0fc"/><polygon points="443.1,581.8 484.1,581.4 485.2,541.4 446.2,541.7" fill="#def0fc"/><polygon points="493.4,581.3 534.3,580.9 533.0,540.9 494.0,541.3" fill="#def0fc"/><polygon points="543.5,580.8 584.4,580.4 580.7,540.5 541.8,540.8" fill="#def0fc"/><polygon points="593.7,580.4 634.5,580.0 628.4,540.1 589.6,540.4" fill="#def0fc"/><polygon points="643.8,579.9 684.5,579.5 676.1,539.6 637.2,540.0" fill="#def0fc"/><polygon points="693.8,579.4 734.5,579.0 723.7,539.2 684.9,539.6" fill="#def0fc"/><polygon points="743.8,578.9 784.4,578.5 771.2,538.8 732.5,539.1" fill="#def0fc"/></g>
<clipPath id="fl"><polygon points="286.1,588.1 790.7,583.3 618.7,74.6 420.9,75.4" fill="#000"/></clipPath>
<g clip-path="url(#fl)" stroke-opacity="0.15"><line x1="269.1" y1="588.2" x2="414.3" y2="75.4" stroke="#9aa4ae" stroke-width="1"/><line x1="303.0" y1="587.9" x2="427.5" y2="75.3" stroke="#9aa4ae" stroke-width="1"/><line x1="336.8" y1="587.6" x2="440.7" y2="75.3" stroke="#9aa4ae" stroke-width="1"/><line x1="370.6" y1="587.3" x2="453.9" y2="75.2" stroke="#9aa4ae" stroke-width="1"/><line x1="404.3" y1="587.0" x2="467.1" y2="75.2" stroke="#9aa4ae" stroke-width="1"/><line x1="438.0" y1="586.6" x2="480.3" y2="75.1" stroke="#9aa4ae" stroke-width="1"/><line x1="471.8" y1="586.3" x2="493.5" y2="75.1" stroke="#9aa4ae" stroke-width="1"/><line x1="505.4" y1="586.0" x2="506.7" y2="75.0" stroke="#9aa4ae" stroke-width="1"/><line x1="539.1" y1="585.7" x2="519.9" y2="75.0" stroke="#9aa4ae" stroke-width="1"/><line x1="572.7" y1="585.3" x2="533.1" y2="74.9" stroke="#9aa4ae" stroke-width="1"/><line x1="606.3" y1="585.0" x2="546.2" y2="74.9" stroke="#9aa4ae" stroke-width="1"/><line x1="639.9" y1="584.7" x2="559.4" y2="74.9" stroke="#9aa4ae" stroke-width="1"/><line x1="673.4" y1="584.4" x2="572.6" y2="74.8" stroke="#9aa4ae" stroke-width="1"/><line x1="707.0" y1="584.1" x2="585.8" y2="74.8" stroke="#9aa4ae" stroke-width="1"/><line x1="740.5" y1="583.7" x2="598.9" y2="74.7" stroke="#9aa4ae" stroke-width="1"/><line x1="773.9" y1="583.4" x2="612.1" y2="74.7" stroke="#9aa4ae" stroke-width="1"/><line x1="807.4" y1="583.1" x2="625.2" y2="74.6" stroke="#9aa4ae" stroke-width="1"/><line x1="283.7" y1="596.9" x2="793.6" y2="592.0" stroke="#9aa4ae" stroke-width="1"/><line x1="292.7" y1="562.7" x2="782.2" y2="558.1" stroke="#9aa4ae" stroke-width="1"/><line x1="301.0" y1="531.1" x2="771.6" y2="526.9" stroke="#9aa4ae" stroke-width="1"/><line x1="308.7" y1="501.8" x2="761.8" y2="497.9" stroke="#9aa4ae" stroke-width="1"/><line x1="315.9" y1="474.7" x2="752.7" y2="471.1" stroke="#9aa4ae" stroke-width="1"/><line x1="322.5" y1="449.4" x2="744.3" y2="446.0" stroke="#9aa4ae" stroke-width="1"/><line x1="328.7" y1="425.8" x2="736.4" y2="422.7" stroke="#9aa4ae" stroke-width="1"/><line x1="334.5" y1="403.8" x2="729.0" y2="400.9" stroke="#9aa4ae" stroke-width="1"/><line x1="339.9" y1="383.1" x2="722.1" y2="380.4" stroke="#9aa4ae" stroke-width="1"/><line x1="345.0" y1="363.7" x2="715.6" y2="361.1" stroke="#9aa4ae" stroke-width="1"/><line x1="349.8" y1="345.5" x2="709.4" y2="343.0" stroke="#9aa4ae" stroke-width="1"/><line x1="354.4" y1="328.3" x2="703.7" y2="326.0" stroke="#9aa4ae" stroke-width="1"/><line x1="358.6" y1="312.0" x2="698.2" y2="309.9" stroke="#9aa4ae" stroke-width="1"/><line x1="362.7" y1="296.7" x2="693.1" y2="294.6" stroke="#9aa4ae" stroke-width="1"/><line x1="366.5" y1="282.1" x2="688.2" y2="280.2" stroke="#9aa4ae" stroke-width="1"/><line x1="370.1" y1="268.3" x2="683.5" y2="266.5" stroke="#9aa4ae" stroke-width="1"/><line x1="373.6" y1="255.2" x2="679.1" y2="253.4" stroke="#9aa4ae" stroke-width="1"/><line x1="376.9" y1="242.7" x2="674.9" y2="241.1" stroke="#9aa4ae" stroke-width="1"/><line x1="380.0" y1="230.9" x2="671.0" y2="229.3" stroke="#9aa4ae" stroke-width="1"/><line x1="383.0" y1="219.5" x2="667.1" y2="218.0" stroke="#9aa4ae" stroke-width="1"/><line x1="385.8" y1="208.7" x2="663.5" y2="207.3" stroke="#9aa4ae" stroke-width="1"/><line x1="388.5" y1="198.4" x2="660.1" y2="197.0" stroke="#9aa4ae" stroke-width="1"/><line x1="391.1" y1="188.5" x2="656.7" y2="187.2" stroke="#9aa4ae" stroke-width="1"/><line x1="393.6" y1="179.1" x2="653.6" y2="177.8" stroke="#9aa4ae" stroke-width="1"/><line x1="396.0" y1="170.0" x2="650.5" y2="168.8" stroke="#9aa4ae" stroke-width="1"/><line x1="398.3" y1="161.4" x2="647.6" y2="160.2" stroke="#9aa4ae" stroke-width="1"/><line x1="400.4" y1="153.0" x2="644.8" y2="151.9" stroke="#9aa4ae" stroke-width="1"/><line x1="402.6" y1="145.0" x2="642.1" y2="143.9" stroke="#9aa4ae" stroke-width="1"/><line x1="404.6" y1="137.3" x2="639.5" y2="136.3" stroke="#9aa4ae" stroke-width="1"/><line x1="406.5" y1="129.9" x2="637.0" y2="128.9" stroke="#9aa4ae" stroke-width="1"/><line x1="408.4" y1="122.8" x2="634.6" y2="121.8" stroke="#9aa4ae" stroke-width="1"/><line x1="410.2" y1="115.9" x2="632.3" y2="115.0" stroke="#9aa4ae" stroke-width="1"/><line x1="411.9" y1="109.3" x2="630.1" y2="108.4" stroke="#9aa4ae" stroke-width="1"/><line x1="413.6" y1="102.9" x2="627.9" y2="102.0" stroke="#9aa4ae" stroke-width="1"/><line x1="415.2" y1="96.7" x2="625.8" y2="95.9" stroke="#9aa4ae" stroke-width="1"/><line x1="416.8" y1="90.8" x2="623.8" y2="90.0" stroke="#9aa4ae" stroke-width="1"/><line x1="418.3" y1="85.0" x2="621.9" y2="84.2" stroke="#9aa4ae" stroke-width="1"/><line x1="419.8" y1="79.4" x2="620.0" y2="78.7" stroke="#9aa4ae" stroke-width="1"/></g>
<g stroke-opacity="0.72"><line x1="286.3" y1="588.5" x2="790.3" y2="583.7" stroke="#8ff08a" stroke-width="1.0"/><line x1="286.3" y1="588.5" x2="420.9" y2="75.8" stroke="#8ff08a" stroke-width="1.0"/><line x1="286.3" y1="588.5" x2="285.8" y2="587.7" stroke="#8ff08a" stroke-width="1.0"/><line x1="285.8" y1="587.7" x2="791.0" y2="582.9" stroke="#8ff08a" stroke-width="1.0"/><line x1="285.8" y1="587.7" x2="420.8" y2="75.0" stroke="#8ff08a" stroke-width="1.0"/><line x1="420.9" y1="75.8" x2="618.6" y2="75.0" stroke="#8ff08a" stroke-width="1.0"/><line x1="420.9" y1="75.8" x2="420.8" y2="75.0" stroke="#8ff08a" stroke-width="1.0"/><line x1="420.8" y1="75.0" x2="618.7" y2="74.2" stroke="#8ff08a" stroke-width="1.0"/><line x1="790.3" y1="583.7" x2="618.6" y2="75.0" stroke="#8ff08a" stroke-width="1.0"/><line x1="790.3" y1="583.7" x2="791.0" y2="582.9" stroke="#8ff08a" stroke-width="1.0"/><line x1="791.0" y1="582.9" x2="618.7" y2="74.2" stroke="#8ff08a" stroke-width="1.0"/><line x1="618.6" y1="75.0" x2="618.7" y2="74.2" stroke="#8ff08a" stroke-width="1.0"/><line x1="45.9" y1="600.0" x2="292.8" y2="597.6" stroke="#8ff08a" stroke-width="1.0"/><line x1="45.9" y1="600.0" x2="323.9" y2="85.6" stroke="#8ff08a" stroke-width="1.0"/><line x1="45.9" y1="600.0" x2="16.4" y2="580.5" stroke="#8ff08a" stroke-width="1.0"/><line x1="16.4" y1="580.5" x2="278.9" y2="578.0" stroke="#8ff08a" stroke-width="1.0"/><line x1="16.4" y1="580.5" x2="319.3" y2="65.7" stroke="#8ff08a" stroke-width="1.0"/><line x1="323.9" y1="85.6" x2="422.0" y2="85.2" stroke="#8ff08a" stroke-width="1.0"/><line x1="323.9" y1="85.6" x2="319.3" y2="65.7" stroke="#8ff08a" stroke-width="1.0"/><line x1="319.3" y1="65.7" x2="419.7" y2="65.3" stroke="#8ff08a" stroke-width="1.0"/><line x1="292.8" y1="597.6" x2="422.0" y2="85.2" stroke="#8ff08a" stroke-width="1.0"/><line x1="292.8" y1="597.6" x2="278.9" y2="578.0" stroke="#8ff08a" stroke-width="1.0"/><line x1="278.9" y1="578.0" x2="419.7" y2="65.3" stroke="#8ff08a" stroke-width="1.0"/><line x1="422.0" y1="85.2" x2="419.7" y2="65.3" stroke="#8ff08a" stroke-width="1.0"/><line x1="782.6" y1="592.8" x2="1025.4" y2="590.5" stroke="#8ff08a" stroke-width="1.0"/><line x1="782.6" y1="592.8" x2="617.4" y2="84.4" stroke="#8ff08a" stroke-width="1.0"/><line x1="782.6" y1="592.8" x2="799.3" y2="573.1" stroke="#8ff08a" stroke-width="1.0"/><line x1="799.3" y1="573.1" x2="1057.2" y2="570.7" stroke="#8ff08a" stroke-width="1.0"/><line x1="799.3" y1="573.1" x2="619.9" y2="64.6" stroke="#8ff08a" stroke-width="1.0"/><line x1="617.4" y1="84.4" x2="714.9" y2="84.0" stroke="#8ff08a" stroke-width="1.0"/><line x1="617.4" y1="84.4" x2="619.9" y2="64.6" stroke="#8ff08a" stroke-width="1.0"/><line x1="619.9" y1="64.6" x2="719.6" y2="64.2" stroke="#8ff08a" stroke-width="1.0"/><line x1="1025.4" y1="590.5" x2="714.9" y2="84.0" stroke="#8ff08a" stroke-width="1.0"/><line x1="1025.4" y1="590.5" x2="1057.2" y2="570.7" stroke="#8ff08a" stroke-width="1.0"/><line x1="1057.2" y1="570.7" x2="719.6" y2="64.2" stroke="#8ff08a" stroke-width="1.0"/><line x1="714.9" y1="84.0" x2="719.6" y2="64.2" stroke="#8ff08a" stroke-width="1.0"/><line x1="312.1" y1="107.3" x2="728.1" y2="105.6" stroke="#8ff08a" stroke-width="1.0"/><line x1="312.1" y1="107.3" x2="323.9" y2="85.6" stroke="#8ff08a" stroke-width="1.0"/><line x1="312.1" y1="107.3" x2="306.9" y2="86.7" stroke="#8ff08a" stroke-width="1.0"/><line x1="306.9" y1="86.7" x2="733.5" y2="85.1" stroke="#8ff08a" stroke-width="1.0"/><line x1="306.9" y1="86.7" x2="319.3" y2="65.7" stroke="#8ff08a" stroke-width="1.0"/><line x1="323.9" y1="85.6" x2="714.9" y2="84.0" stroke="#8ff08a" stroke-width="1.0"/><line x1="323.9" y1="85.6" x2="319.3" y2="65.7" stroke="#8ff08a" stroke-width="1.0"/><line x1="319.3" y1="65.7" x2="719.6" y2="64.2" stroke="#8ff08a" stroke-width="1.0"/><line x1="728.1" y1="105.6" x2="714.9" y2="84.0" stroke="#8ff08a" stroke-width="1.0"/><line x1="728.1" y1="105.6" x2="733.5" y2="85.1" stroke="#8ff08a" stroke-width="1.0"/><line x1="733.5" y1="85.1" x2="719.6" y2="64.2" stroke="#8ff08a" stroke-width="1.0"/><line x1="714.9" y1="84.0" x2="719.6" y2="64.2" stroke="#8ff08a" stroke-width="1.0"/><line x1="45.9" y1="600.0" x2="1025.4" y2="590.5" stroke="#8ff08a" stroke-width="1.0"/><line x1="45.9" y1="600.0" x2="106.6" y2="487.6" stroke="#8ff08a" stroke-width="1.0"/><line x1="45.9" y1="600.0" x2="16.4" y2="580.5" stroke="#8ff08a" stroke-width="1.0"/><line x1="16.4" y1="580.5" x2="1057.2" y2="570.7" stroke="#8ff08a" stroke-width="1.0"/><line x1="16.4" y1="580.5" x2="84.5" y2="464.8" stroke="#8ff08a" stroke-width="1.0"/><line x1="106.6" y1="487.6" x2="958.0" y2="480.5" stroke="#8ff08a" stroke-width="1.0"/><line x1="106.6" y1="487.6" x2="84.5" y2="464.8" stroke="#8ff08a" stroke-width="1.0"/><line x1="84.5" y1="464.8" x2="981.7" y2="457.5" stroke="#8ff08a" stroke-width="1.0"/><line x1="1025.4" y1="590.5" x2="958.0" y2="480.5" stroke="#8ff08a" stroke-width="1.0"/><line x1="1025.4" y1="590.5" x2="1057.2" y2="570.7" stroke="#8ff08a" stroke-width="1.0"/><line x1="1057.2" y1="570.7" x2="981.7" y2="457.5" stroke="#8ff08a" stroke-width="1.0"/><line x1="958.0" y1="480.5" x2="981.7" y2="457.5" stroke="#8ff08a" stroke-width="1.0"/></g>
<g stroke="#5f83b8" stroke-width="3.6" stroke-linejoin="round"><polygon points="562.5,82.3 561.4,75.6 564.3,22.5 565.5,28.4" fill="#5f83b8"/><polygon points="562.5,82.3 578.9,82.2 583.1,28.4 565.5,28.4" fill="#5f83b8"/><polygon points="565.5,28.4 583.1,28.4 581.5,22.4 564.3,22.5" fill="#5f83b8"/><polygon points="457.6,82.7 458.6,76.0 457.2,56.2 456.2,62.7" fill="#5f83b8"/><polygon points="441.0,82.7 457.6,82.7 456.2,62.7 439.3,62.7" fill="#5f83b8"/><polygon points="439.3,62.7 456.2,62.7 457.2,56.2 440.7,56.3" fill="#5f83b8"/><polygon points="522.0,82.4 521.7,75.7 522.0,38.3 522.3,44.5" fill="#5f83b8"/><polygon points="522.0,82.4 538.5,82.4 539.6,44.5 522.3,44.5" fill="#5f83b8"/><polygon points="522.3,44.5 539.6,44.5 538.9,38.3 522.0,38.3" fill="#5f83b8"/><polygon points="498.1,82.5 498.2,75.8 497.6,44.7 497.4,51.0" fill="#5f83b8"/><polygon points="481.6,82.6 498.1,82.5 497.4,51.0 480.3,51.0" fill="#5f83b8"/><polygon points="480.3,51.0 497.4,51.0 497.6,44.7 480.8,44.7" fill="#5f83b8"/><polygon points="477.1,91.2 477.7,84.1 476.0,46.7 475.3,53.3" fill="#5f83b8"/><polygon points="460.1,91.2 477.1,91.2 475.3,53.3 457.6,53.3" fill="#5f83b8"/><polygon points="457.6,53.3 475.3,53.3 476.0,46.7 458.6,46.8" fill="#5f83b8"/><polygon points="607.8,99.7 605.7,92.3 612.1,35.3 614.5,41.9" fill="#5f83b8"/><polygon points="607.8,99.7 625.1,99.6 633.0,41.9 614.5,41.9" fill="#5f83b8"/><polygon points="614.5,41.9 633.0,41.9 630.2,35.3 612.1,35.3" fill="#5f83b8"/><polygon points="586.6,99.8 584.9,92.4 587.3,64.4 589.1,71.4" fill="#5f83b8"/><polygon points="586.6,99.8 603.9,99.7 607.0,71.4 589.1,71.4" fill="#5f83b8"/><polygon points="589.1,71.4 607.0,71.4 604.9,64.3 587.3,64.4" fill="#5f83b8"/><polygon points="497.6,100.1 497.8,92.7 497.3,68.8 497.0,75.9" fill="#5f83b8"/><polygon points="480.2,100.2 497.6,100.1 497.0,75.9 479.2,75.9" fill="#5f83b8"/><polygon points="479.2,75.9 497.0,75.9 497.3,68.8 479.8,68.8" fill="#5f83b8"/><polygon points="610.5,109.2 608.3,101.4 613.7,55.0 616.1,62.1" fill="#5f83b8"/><polygon points="610.5,109.2 628.3,109.1 635.0,62.1 616.1,62.1" fill="#5f83b8"/><polygon points="616.1,62.1 635.0,62.1 632.1,54.9 613.7,55.0" fill="#5f83b8"/><polygon points="429.5,120.0 431.3,111.8 425.0,52.0 423.0,59.5" fill="#5f83b8"/><polygon points="411.2,120.1 429.5,120.0 423.0,59.5 403.2,59.5" fill="#5f83b8"/><polygon points="403.2,59.5 423.0,59.5 425.0,52.0 405.7,52.1" fill="#5f83b8"/><polygon points="452.0,119.9 453.3,111.7 451.6,90.4 450.3,98.4" fill="#5f83b8"/><polygon points="433.7,120.0 452.0,119.9 450.3,98.4 431.5,98.4" fill="#5f83b8"/><polygon points="431.5,98.4 450.3,98.4 451.6,90.4 433.2,90.5" fill="#5f83b8"/><polygon points="523.6,119.6 523.3,111.4 523.5,90.2 523.9,98.1" fill="#5f83b8"/><polygon points="523.6,119.6 541.9,119.5 542.7,98.1 523.9,98.1" fill="#5f83b8"/><polygon points="523.9,98.1 542.7,98.1 541.9,90.1 523.5,90.2" fill="#5f83b8"/><polygon points="501.2,119.7 501.3,111.5 501.0,92.0 500.8,100.0" fill="#5f83b8"/><polygon points="501.2,119.7 519.5,119.6 519.6,100.0 500.8,100.0" fill="#5f83b8"/><polygon points="500.8,100.0 519.6,100.0 519.3,92.0 501.0,92.0" fill="#5f83b8"/><polygon points="427.3,130.6 429.1,121.9 426.6,98.6 424.7,107.1" fill="#5f83b8"/><polygon points="408.5,130.7 427.3,130.6 424.7,107.1 405.2,107.2" fill="#5f83b8"/><polygon points="405.2,107.2 424.7,107.1 426.6,98.6 407.6,98.7" fill="#5f83b8"/><polygon points="547.2,130.1 546.3,121.4 548.1,76.3 549.1,84.3" fill="#5f83b8"/><polygon points="547.2,130.1 566.0,130.0 569.0,84.3 549.1,84.3" fill="#5f83b8"/><polygon points="549.1,84.3 569.0,84.3 567.5,76.2 548.1,76.3" fill="#5f83b8"/><polygon points="572.1,141.2 570.6,132.0 574.2,80.8 575.9,89.3" fill="#5f83b8"/><polygon points="572.1,141.2 591.4,141.1 596.6,89.3 575.9,89.3" fill="#5f83b8"/><polygon points="575.9,89.3 596.6,89.3 594.4,80.8 574.2,80.8" fill="#5f83b8"/><polygon points="448.8,141.8 450.2,132.6 448.5,112.9 447.1,121.9" fill="#5f83b8"/><polygon points="429.4,141.9 448.8,141.8 447.1,121.9 427.2,121.9" fill="#5f83b8"/><polygon points="427.2,121.9 447.1,121.9 448.5,112.9 429.1,113.0" fill="#5f83b8"/><polygon points="622.9,152.9 620.2,143.2 628.8,80.5 632.0,89.3" fill="#5f83b8"/><polygon points="622.9,152.9 642.8,152.8 653.6,89.3 632.0,89.3" fill="#5f83b8"/><polygon points="632.0,89.3 653.6,89.3 649.8,80.4 628.8,80.5" fill="#5f83b8"/><polygon points="574.0,153.1 572.4,143.4 575.6,100.7 577.4,109.9" fill="#5f83b8"/><polygon points="574.0,153.1 594.0,153.0 598.5,109.9 577.4,109.9" fill="#5f83b8"/><polygon points="577.4,109.9 598.5,109.9 596.2,100.7 575.6,100.7" fill="#5f83b8"/><polygon points="495.7,166.2 496.0,155.8 494.5,97.8 494.2,107.4" fill="#5f83b8"/><polygon points="475.1,166.3 495.7,166.2 494.2,107.4 472.0,107.5" fill="#5f83b8"/><polygon points="472.0,107.5 494.2,107.4 494.5,97.8 472.9,97.9" fill="#5f83b8"/><polygon points="604.3,179.1 601.9,168.1 608.7,109.9 611.5,120.1" fill="#5f83b8"/><polygon points="604.3,179.1 625.5,179.0 634.4,120.1 611.5,120.1" fill="#5f83b8"/><polygon points="611.5,120.1 634.4,120.1 630.9,109.8 608.7,109.9" fill="#5f83b8"/><polygon points="443.1,179.9 444.8,168.8 440.6,124.5 438.7,135.1" fill="#5f83b8"/><polygon points="421.9,180.0 443.1,179.9 438.7,135.1 416.1,135.2" fill="#5f83b8"/><polygon points="416.1,135.2 438.7,135.1 440.6,124.5 418.6,124.6" fill="#5f83b8"/><polygon points="526.2,179.5 525.7,168.4 526.7,102.6 527.2,112.7" fill="#5f83b8"/><polygon points="526.2,179.5 547.4,179.4 550.4,112.6 527.2,112.7" fill="#5f83b8"/><polygon points="527.2,112.7 550.4,112.6 549.2,102.5 526.7,102.6" fill="#5f83b8"/><polygon points="500.2,179.6 500.3,168.6 499.3,116.2 499.1,126.5" fill="#5f83b8"/><polygon points="500.2,179.6 521.4,179.5 521.9,126.4 499.1,126.5" fill="#5f83b8"/><polygon points="499.1,126.5 521.9,126.4 521.5,116.1 499.3,116.2" fill="#5f83b8"/><polygon points="494.9,194.0 495.3,182.2 494.0,136.2 493.6,147.4" fill="#5f83b8"/><polygon points="473.0,194.1 494.9,194.0 493.6,147.4 470.2,147.5" fill="#5f83b8"/><polygon points="470.2,147.5 493.6,147.4 494.0,136.2 471.3,136.3" fill="#5f83b8"/><polygon points="410.8,209.8 413.5,197.2 404.1,131.3 400.9,143.1" fill="#5f83b8"/><polygon points="388.1,209.9 410.8,209.8 400.9,143.1 376.0,143.2" fill="#5f83b8"/><polygon points="376.0,143.2 400.9,143.1 404.1,131.3 379.9,131.4" fill="#5f83b8"/><polygon points="583.1,208.9 581.1,196.3 586.3,140.2 588.7,152.0" fill="#5f83b8"/><polygon points="583.1,208.9 605.8,208.8 613.2,151.9 588.7,152.0" fill="#5f83b8"/><polygon points="588.7,152.0 613.2,151.9 610.1,140.1 586.3,140.2" fill="#5f83b8"/><polygon points="555.3,209.0 554.0,196.5 556.3,155.8 557.7,168.0" fill="#5f83b8"/><polygon points="555.3,209.0 578.0,208.9 581.7,167.8 557.7,168.0" fill="#5f83b8"/><polygon points="557.7,168.0 581.7,167.8 579.6,155.7 556.3,155.8" fill="#5f83b8"/><polygon points="614.6,225.1 611.6,211.7 615.6,182.8 618.8,196.0" fill="#5f83b8"/><polygon points="614.6,225.1 638.0,225.0 643.3,195.8 618.8,196.0" fill="#5f83b8"/><polygon points="618.8,196.0 643.3,195.8 639.3,182.7 615.6,182.8" fill="#5f83b8"/><polygon points="494.0,225.8 494.4,212.3 492.9,162.5 492.5,175.4" fill="#5f83b8"/><polygon points="470.5,225.9 494.0,225.8 492.5,175.4 467.2,175.6" fill="#5f83b8"/><polygon points="467.2,175.6 492.5,175.4 492.9,162.5 468.4,162.6" fill="#5f83b8"/><polygon points="403.7,243.9 406.7,229.4 401.1,194.1 397.7,208.2" fill="#5f83b8"/><polygon points="379.3,244.1 403.7,243.9 397.7,208.2 372.0,208.4" fill="#5f83b8"/><polygon points="372.0,208.4 397.7,208.2 401.1,194.1 376.2,194.2" fill="#5f83b8"/><polygon points="433.7,243.8 435.8,229.3 433.0,204.9 430.7,219.1" fill="#5f83b8"/><polygon points="409.3,243.9 433.7,243.8 430.7,219.1 405.3,219.3" fill="#5f83b8"/><polygon points="405.3,219.3 430.7,219.1 433.0,204.9 408.4,205.0" fill="#5f83b8"/><polygon points="558.8,243.1 557.4,228.6 559.4,195.9 561.0,210.1" fill="#5f83b8"/><polygon points="558.8,243.1 583.2,242.9 586.6,209.9 561.0,210.1" fill="#5f83b8"/><polygon points="561.0,210.1 586.6,209.9 584.1,195.8 559.4,195.9" fill="#5f83b8"/><polygon points="463.6,243.6 464.9,229.1 462.9,202.7 461.6,216.9" fill="#5f83b8"/><polygon points="439.2,243.7 463.6,243.6 461.6,216.9 436.2,217.1" fill="#5f83b8"/><polygon points="436.2,217.1 461.6,216.9 462.9,202.7 438.3,202.8" fill="#5f83b8"/><polygon points="529.0,243.2 528.3,228.8 529.1,192.5 529.7,206.6" fill="#5f83b8"/><polygon points="529.0,243.2 553.3,243.1 555.4,206.4 529.7,206.6" fill="#5f83b8"/><polygon points="529.7,206.6 555.4,206.4 554.0,192.3 529.1,192.5" fill="#5f83b8"/><polygon points="659.5,281.9 654.8,265.1 661.3,234.9 666.5,251.5" fill="#5f83b8"/><polygon points="659.5,281.9 685.7,281.7 694.0,251.3 666.5,251.5" fill="#5f83b8"/><polygon points="666.5,251.5 694.0,251.3 687.9,234.8 661.3,234.9" fill="#5f83b8"/><polygon points="395.5,283.5 399.0,266.7 386.9,199.7 382.6,216.0" fill="#5f83b8"/><polygon points="369.1,283.7 395.5,283.5 382.6,216.0 353.3,216.2" fill="#5f83b8"/><polygon points="353.3,216.2 382.6,216.0 386.9,199.7 358.7,199.9" fill="#5f83b8"/><polygon points="427.8,283.3 430.3,266.5 427.5,245.5 424.9,262.2" fill="#5f83b8"/><polygon points="401.4,283.5 427.8,283.3 424.9,262.2 397.6,262.4" fill="#5f83b8"/><polygon points="397.6,262.4 424.9,262.2 427.5,245.5 401.2,245.6" fill="#5f83b8"/><polygon points="492.4,282.9 492.9,266.1 490.8,206.3 490.3,222.6" fill="#5f83b8"/><polygon points="466.1,283.1 492.4,282.9 490.3,222.6 461.4,222.8" fill="#5f83b8"/><polygon points="461.4,222.8 490.3,222.6 490.8,206.3 463.0,206.4" fill="#5f83b8"/><polygon points="498.0,305.1 498.3,286.9 496.6,223.9 496.2,241.7" fill="#5f83b8"/><polygon points="498.0,305.1 525.4,304.9 526.5,241.5 496.2,241.7" fill="#5f83b8"/><polygon points="496.2,241.7 526.5,241.5 525.8,223.7 496.6,223.9" fill="#5f83b8"/><polygon points="637.7,328.3 633.2,308.5 640.5,271.8 645.4,291.4" fill="#5f83b8"/><polygon points="637.7,328.3 666.1,328.1 675.7,291.2 645.4,291.4" fill="#5f83b8"/><polygon points="645.4,291.4 675.7,291.2 669.7,271.6 640.5,271.8" fill="#5f83b8"/><polygon points="456.0,329.5 457.8,309.6 452.0,249.2 449.9,268.7" fill="#5f83b8"/><polygon points="427.4,329.7 456.0,329.5 449.9,268.7 418.3,268.9" fill="#5f83b8"/><polygon points="418.3,268.9 449.9,268.7 452.0,249.2 421.6,249.3" fill="#5f83b8"/><polygon points="680.0,354.2 673.9,332.7 689.8,275.2 697.1,296.6" fill="#5f83b8"/><polygon points="680.0,354.2 709.8,354.0 730.0,296.4 697.1,296.6" fill="#5f83b8"/><polygon points="697.1,296.6 730.0,296.4 721.3,275.0 689.8,275.2" fill="#5f83b8"/><polygon points="688.1,382.8 681.5,359.3 702.6,289.6 711.0,313.2" fill="#5f83b8"/><polygon points="688.1,382.8 719.3,382.6 746.3,313.0 711.0,313.2" fill="#5f83b8"/><polygon points="711.0,313.2 746.3,313.0 736.3,289.4 702.6,289.6" fill="#5f83b8"/><polygon points="649.9,383.1 644.7,359.6 656.3,310.2 662.5,333.9" fill="#5f83b8"/><polygon points="649.9,383.1 681.1,382.9 696.6,333.7 662.5,333.9" fill="#5f83b8"/><polygon points="662.5,333.9 696.6,333.7 689.0,310.0 656.3,310.2" fill="#5f83b8"/><polygon points="412.8,384.8 416.3,361.2 406.8,308.8 402.6,332.6" fill="#5f83b8"/><polygon points="381.4,385.1 412.8,384.8 402.6,332.6 368.1,332.8" fill="#5f83b8"/><polygon points="368.1,332.8 402.6,332.6 406.8,308.8 373.8,309.0" fill="#5f83b8"/><polygon points="535.0,384.0 534.0,360.3 535.6,316.0 536.7,339.7" fill="#5f83b8"/><polygon points="535.0,384.0 566.3,383.7 570.6,339.5 536.7,339.7" fill="#5f83b8"/><polygon points="536.7,339.7 570.6,339.5 568.1,315.7 535.6,316.0" fill="#5f83b8"/><polygon points="489.6,384.3 490.2,360.6 488.8,327.5 488.0,351.3" fill="#5f83b8"/><polygon points="458.3,384.5 489.6,384.3 488.0,351.3 454.7,351.5" fill="#5f83b8"/><polygon points="454.7,351.5 488.0,351.3 488.8,327.5 456.8,327.7" fill="#5f83b8"/><polygon points="496.7,384.2 497.1,360.6 495.8,322.5 495.4,346.3" fill="#5f83b8"/><polygon points="496.7,384.2 528.0,384.0 528.9,346.1 495.4,346.3" fill="#5f83b8"/><polygon points="495.4,346.3 528.9,346.1 528.0,322.3 495.8,322.5" fill="#5f83b8"/><polygon points="408.1,416.5 411.9,390.5 407.9,370.1 403.7,396.4" fill="#5f83b8"/><polygon points="375.2,416.8 408.1,416.5 403.7,396.4 369.4,396.6" fill="#5f83b8"/><polygon points="369.4,396.6 403.7,396.4 407.9,370.1 375.0,370.4" fill="#5f83b8"/><polygon points="448.4,416.2 450.7,390.2 447.3,362.6 444.7,388.9" fill="#5f83b8"/><polygon points="415.5,416.5 448.4,416.2 444.7,388.9 410.0,389.1" fill="#5f83b8"/><polygon points="410.0,389.1 444.7,388.9 447.3,362.6 414.0,362.8" fill="#5f83b8"/><polygon points="536.4,415.5 535.3,389.6 536.6,356.9 537.8,383.1" fill="#5f83b8"/><polygon points="536.4,415.5 569.2,415.3 572.7,382.9 537.8,383.1" fill="#5f83b8"/><polygon points="537.8,383.1 572.7,382.9 570.1,356.6 536.6,356.9" fill="#5f83b8"/><polygon points="664.7,449.4 658.3,420.8 664.1,401.2 671.0,430.1" fill="#5f83b8"/><polygon points="664.7,449.4 699.1,449.1 706.8,429.9 671.0,430.1" fill="#5f83b8"/><polygon points="671.0,430.1 706.8,429.9 698.4,401.0 664.1,401.2" fill="#5f83b8"/><polygon points="360.4,451.8 366.4,423.0 356.2,389.7 349.3,419.1" fill="#5f83b8"/><polygon points="325.7,452.1 360.4,451.8 349.3,419.1 312.2,419.3" fill="#5f83b8"/><polygon points="312.2,419.3 349.3,419.1 356.2,389.7 320.7,390.0" fill="#5f83b8"/><polygon points="673.4,488.0 666.3,456.2 685.7,398.0 694.7,431.0" fill="#5f83b8"/><polygon points="673.4,488.0 709.6,487.7 735.9,430.7 694.7,431.0" fill="#5f83b8"/><polygon points="694.7,431.0 735.9,430.7 724.9,397.7 685.7,398.0" fill="#5f83b8"/><polygon points="397.1,490.3 401.9,458.4 393.2,423.7 387.6,456.5" fill="#5f83b8"/><polygon points="360.6,490.6 397.1,490.3 387.6,456.5 348.2,456.9" fill="#5f83b8"/><polygon points="348.2,456.9 387.6,456.5 393.2,423.7 355.5,424.0" fill="#5f83b8"/><polygon points="539.6,489.1 538.2,457.3 539.9,423.9 541.5,456.6" fill="#5f83b8"/><polygon points="539.6,489.1 576.0,488.8 580.7,456.3 541.5,456.6" fill="#5f83b8"/><polygon points="541.5,456.6 580.7,456.3 577.3,423.7 539.9,423.9" fill="#5f83b8"/><polygon points="494.2,532.7 494.8,497.1 492.8,456.7 492.0,493.9" fill="#5f83b8"/><polygon points="494.2,532.7 532.7,532.4 534.5,493.5 492.0,493.9" fill="#5f83b8"/><polygon points="492.0,493.9 534.5,493.5 533.2,456.4 492.8,456.7" fill="#5f83b8"/><polygon points="383.5,582.3 389.4,542.2 383.4,524.7 376.9,565.9" fill="#5f83b8"/><polygon points="342.4,582.7 383.5,582.3 376.9,565.9 333.7,566.3" fill="#5f83b8"/><polygon points="333.7,566.3 376.9,565.9 383.4,524.7 342.5,525.1" fill="#5f83b8"/><polygon points="484.1,581.4 485.2,541.4 482.3,506.3 480.9,548.4" fill="#5f83b8"/><polygon points="443.1,581.8 484.1,581.4 480.9,548.4 435.9,548.8" fill="#5f83b8"/><polygon points="435.9,548.8 480.9,548.4 482.3,506.3 439.6,506.6" fill="#5f83b8"/><polygon points="493.4,581.3 494.0,541.3 492.1,508.1 491.3,550.1" fill="#5f83b8"/><polygon points="493.4,581.3 534.3,580.9 536.1,549.7 491.3,550.1" fill="#5f83b8"/><polygon points="491.3,550.1 536.1,549.7 534.6,507.7 492.1,508.1" fill="#5f83b8"/></g>
<g><polygon points="562.5,82.3 561.4,75.6 564.3,22.5 565.5,28.4" fill="#46283c"/><polygon points="562.5,82.3 578.9,82.2 583.1,28.4 565.5,28.4" fill="#bc627e"/><polygon points="565.5,28.4 583.1,28.4 581.5,22.4 564.3,22.5" fill="#c86480"/><line x1="562.5" y1="82.3" x2="578.9" y2="82.2" stroke="rgba(150,230,160,0.22)" stroke-width="0.8"/><line x1="562.5" y1="82.3" x2="561.4" y2="75.6" stroke="rgba(150,230,160,0.22)" stroke-width="0.8"/><line x1="562.5" y1="82.3" x2="565.5" y2="28.4" stroke="rgba(150,230,160,0.22)" stroke-width="0.8"/><line x1="565.5" y1="28.4" x2="583.1" y2="28.4" stroke="rgba(150,230,160,0.22)" stroke-width="0.8"/><line x1="565.5" y1="28.4" x2="564.3" y2="22.5" stroke="rgba(150,230,160,0.22)" stroke-width="0.8"/><line x1="561.4" y1="75.6" x2="577.5" y2="75.5" stroke="rgba(150,230,160,0.22)" stroke-width="0.8"/><line x1="561.4" y1="75.6" x2="564.3" y2="22.5" stroke="rgba(150,230,160,0.22)" stroke-width="0.8"/><line x1="564.3" y1="22.5" x2="581.5" y2="22.4" stroke="rgba(150,230,160,0.22)" stroke-width="0.8"/><line x1="578.9" y1="82.2" x2="577.5" y2="75.5" stroke="rgba(150,230,160,0.22)" stroke-width="0.8"/><line x1="578.9" y1="82.2" x2="583.1" y2="28.4" stroke="rgba(150,230,160,0.22)" stroke-width="0.8"/><line x1="583.1" y1="28.4" x2="581.5" y2="22.4" stroke="rgba(150,230,160,0.22)" stroke-width="0.8"/><line x1="577.5" y1="75.5" x2="581.5" y2="22.4" stroke="rgba(150,230,160,0.22)" stroke-width="0.8"/><polygon points="562.5,82.3 561.4,75.6 564.3,22.5 565.5,28.4" fill="none" stroke="#8ff08a" stroke-width="1.0" stroke-linejoin="round" stroke-opacity="0.85"/><polygon points="562.5,82.3 578.9,82.2 583.1,28.4 565.5,28.4" fill="none" stroke="#8ff08a" stroke-width="1.0" stroke-linejoin="round" stroke-opacity="0.85"/><polygon points="565.5,28.4 583.1,28.4 581.5,22.4 564.3,22.5" fill="none" stroke="#8ff08a" stroke-width="1.0" stroke-linejoin="round" stroke-opacity="0.85"/></g>
<g><polygon points="457.6,82.7 458.6,76.0 457.2,56.2 456.2,62.7" fill="#46283c"/><polygon points="441.0,82.7 457.6,82.7 456.2,62.7 439.3,62.7" fill="#bc627e"/><polygon points="439.3,62.7 456.2,62.7 457.2,56.2 440.7,56.3" fill="#c86480"/><line x1="441.0" y1="82.7" x2="457.6" y2="82.7" stroke="rgba(150,230,160,0.22)" stroke-width="0.8"/><line x1="441.0" y1="82.7" x2="442.4" y2="76.0" stroke="rgba(150,230,160,0.22)" stroke-width="0.8"/><line x1="441.0" y1="82.7" x2="439.3" y2="62.7" stroke="rgba(150,230,160,0.22)" stroke-width="0.8"/><line x1="439.3" y1="62.7" x2="456.2" y2="62.7" stroke="rgba(150,230,160,0.22)" stroke-width="0.8"/><line x1="439.3" y1="62.7" x2="440.7" y2="56.3" stroke="rgba(150,230,160,0.22)" stroke-width="0.8"/><line x1="442.4" y1="76.0" x2="458.6" y2="76.0" stroke="rgba(150,230,160,0.22)" stroke-width="0.8"/><line x1="442.4" y1="76.0" x2="440.7" y2="56.3" stroke="rgba(150,230,160,0.22)" stroke-width="0.8"/><line x1="440.7" y1="56.3" x2="457.2" y2="56.2" stroke="rgba(150,230,160,0.22)" stroke-width="0.8"/><line x1="457.6" y1="82.7" x2="458.6" y2="76.0" stroke="rgba(150,230,160,0.22)" stroke-width="0.8"/><line x1="457.6" y1="82.7" x2="456.2" y2="62.7" stroke="rgba(150,230,160,0.22)" stroke-width="0.8"/><line x1="456.2" y1="62.7" x2="457.2" y2="56.2" stroke="rgba(150,230,160,0.22)" stroke-width="0.8"/><line x1="458.6" y1="76.0" x2="457.2" y2="56.2" stroke="rgba(150,230,160,0.22)" stroke-width="0.8"/><polygon points="457.6,82.7 458.6,76.0 457.2,56.2 456.2,62.7" fill="none" stroke="#8ff08a" stroke-width="1.0" stroke-linejoin="round" stroke-opacity="0.85"/><polygon points="441.0,82.7 457.6,82.7 456.2,62.7 439.3,62.7" fill="none" stroke="#8ff08a" stroke-width="1.0" stroke-linejoin="round" stroke-opacity="0.85"/><polygon points="439.3,62.7 456.2,62.7 457.2,56.2 440.7,56.3" fill="none" stroke="#8ff08a" stroke-width="1.0" stroke-linejoin="round" stroke-opacity="0.85"/></g>
<g><polygon points="522.0,82.4 521.7,75.7 522.0,38.3 522.3,44.5" fill="#46283c"/><polygon points="522.0,82.4 538.5,82.4 539.6,44.5 522.3,44.5" fill="#bc627e"/><polygon points="522.3,44.5 539.6,44.5 538.9,38.3 522.0,38.3" fill="#c86480"/><line x1="522.0" y1="82.4" x2="538.5" y2="82.4" stroke="rgba(150,230,160,0.22)" stroke-width="0.8"/><line x1="522.0" y1="82.4" x2="521.7" y2="75.7" stroke="rgba(150,230,160,0.22)" stroke-width="0.8"/><line x1="522.0" y1="82.4" x2="522.3" y2="44.5" stroke="rgba(150,230,160,0.22)" stroke-width="0.8"/><line x1="522.3" y1="44.5" x2="539.6" y2="44.5" stroke="rgba(150,230,160,0.22)" stroke-width="0.8"/><line x1="522.3" y1="44.5" x2="522.0" y2="38.3" stroke="rgba(150,230,160,0.22)" stroke-width="0.8"/><line x1="521.7" y1="75.7" x2="537.9" y2="75.7" stroke="rgba(150,230,160,0.22)" stroke-width="0.8"/><line x1="521.7" y1="75.7" x2="522.0" y2="38.3" stroke="rgba(150,230,160,0.22)" stroke-width="0.8"/><line x1="522.0" y1="38.3" x2="538.9" y2="38.3" stroke="rgba(150,230,160,0.22)" stroke-width="0.8"/><line x1="538.5" y1="82.4" x2="537.9" y2="75.7" stroke="rgba(150,230,160,0.22)" stroke-width="0.8"/><line x1="538.5" y1="82.4" x2="539.6" y2="44.5" stroke="rgba(150,230,160,0.22)" stroke-width="0.8"/><line x1="539.6" y1="44.5" x2="538.9" y2="38.3" stroke="rgba(150,230,160,0.22)" stroke-width="0.8"/><line x1="537.9" y1="75.7" x2="538.9" y2="38.3" stroke="rgba(150,230,160,0.22)" stroke-width="0.8"/><polygon points="522.0,82.4 521.7,75.7 522.0,38.3 522.3,44.5" fill="none" stroke="#8ff08a" stroke-width="1.0" stroke-linejoin="round" stroke-opacity="0.85"/><polygon points="522.0,82.4 538.5,82.4 539.6,44.5 522.3,44.5" fill="none" stroke="#8ff08a" stroke-width="1.0" stroke-linejoin="round" stroke-opacity="0.85"/><polygon points="522.3,44.5 539.6,44.5 538.9,38.3 522.0,38.3" fill="none" stroke="#8ff08a" stroke-width="1.0" stroke-linejoin="round" stroke-opacity="0.85"/></g>
<g><polygon points="498.1,82.5 498.2,75.8 497.6,44.7 497.4,51.0" fill="#46283c"/><polygon points="481.6,82.6 498.1,82.5 497.4,51.0 480.3,51.0" fill="#bc627e"/><polygon points="480.3,51.0 497.4,51.0 497.6,44.7 480.8,44.7" fill="#c86480"/><line x1="481.6" y1="82.6" x2="498.1" y2="82.5" stroke="rgba(150,230,160,0.22)" stroke-width="0.8"/><line x1="481.6" y1="82.6" x2="482.1" y2="75.9" stroke="rgba(150,230,160,0.22)" stroke-width="0.8"/><line x1="481.6" y1="82.6" x2="480.3" y2="51.0" stroke="rgba(150,230,160,0.22)" stroke-width="0.8"/><line x1="480.3" y1="51.0" x2="497.4" y2="51.0" stroke="rgba(150,230,160,0.22)" stroke-width="0.8"/><line x1="480.3" y1="51.0" x2="480.8" y2="44.7" stroke="rgba(150,230,160,0.22)" stroke-width="0.8"/><line x1="482.1" y1="75.9" x2="498.2" y2="75.8" stroke="rgba(150,230,160,0.22)" stroke-width="0.8"/><line x1="482.1" y1="75.9" x2="480.8" y2="44.7" stroke="rgba(150,230,160,0.22)" stroke-width="0.8"/><line x1="480.8" y1="44.7" x2="497.6" y2="44.7" stroke="rgba(150,230,160,0.22)" stroke-width="0.8"/><line x1="498.1" y1="82.5" x2="498.2" y2="75.8" stroke="rgba(150,230,160,0.22)" stroke-width="0.8"/><line x1="498.1" y1="82.5" x2="497.4" y2="51.0" stroke="rgba(150,230,160,0.22)" stroke-width="0.8"/><line x1="497.4" y1="51.0" x2="497.6" y2="44.7" stroke="rgba(150,230,160,0.22)" stroke-width="0.8"/><line x1="498.2" y1="75.8" x2="497.6" y2="44.7" stroke="rgba(150,230,160,0.22)" stroke-width="0.8"/><polygon points="498.1,82.5 498.2,75.8 497.6,44.7 497.4,51.0" fill="none" stroke="#8ff08a" stroke-width="1.0" stroke-linejoin="round" stroke-opacity="0.85"/><polygon points="481.6,82.6 498.1,82.5 497.4,51.0 480.3,51.0" fill="none" stroke="#8ff08a" stroke-width="1.0" stroke-linejoin="round" stroke-opacity="0.85"/><polygon points="480.3,51.0 497.4,51.0 497.6,44.7 480.8,44.7" fill="none" stroke="#8ff08a" stroke-width="1.0" stroke-linejoin="round" stroke-opacity="0.85"/></g>
<g><polygon points="477.1,91.2 477.7,84.1 476.0,46.7 475.3,53.3" fill="#44293d"/><polygon points="460.1,91.2 477.1,91.2 475.3,53.3 457.6,53.3" fill="#b76480"/><polygon points="457.6,53.3 475.3,53.3 476.0,46.7 458.6,46.8" fill="#c26582"/><line x1="460.1" y1="91.2" x2="477.1" y2="91.2" stroke="rgba(150,230,160,0.22)" stroke-width="0.8"/><line x1="460.1" y1="91.2" x2="461.1" y2="84.2" stroke="rgba(150,230,160,0.22)" stroke-width="0.8"/><line x1="460.1" y1="91.2" x2="457.6" y2="53.3" stroke="rgba(150,230,160,0.22)" stroke-width="0.8"/><line x1="457.6" y1="53.3" x2="475.3" y2="53.3" stroke="rgba(150,230,160,0.22)" stroke-width="0.8"/><line x1="457.6" y1="53.3" x2="458.6" y2="46.8" stroke="rgba(150,230,160,0.22)" stroke-width="0.8"/><line x1="461.1" y1="84.2" x2="477.7" y2="84.1" stroke="rgba(150,230,160,0.22)" stroke-width="0.8"/><line x1="461.1" y1="84.2" x2="458.6" y2="46.8" stroke="rgba(150,230,160,0.22)" stroke-width="0.8"/><line x1="458.6" y1="46.8" x2="476.0" y2="46.7" stroke="rgba(150,230,160,0.22)" stroke-width="0.8"/><line x1="477.1" y1="91.2" x2="477.7" y2="84.1" stroke="rgba(150,230,160,0.22)" stroke-width="0.8"/><line x1="477.1" y1="91.2" x2="475.3" y2="53.3" stroke="rgba(150,230,160,0.22)" stroke-width="0.8"/><line x1="475.3" y1="53.3" x2="476.0" y2="46.7" stroke="rgba(150,230,160,0.22)" stroke-width="0.8"/><line x1="477.7" y1="84.1" x2="476.0" y2="46.7" stroke="rgba(150,230,160,0.22)" stroke-width="0.8"/><polygon points="477.1,91.2 477.7,84.1 476.0,46.7 475.3,53.3" fill="none" stroke="#8ff08a" stroke-width="1.0" stroke-linejoin="round" stroke-opacity="0.85"/><polygon points="460.1,91.2 477.1,91.2 475.3,53.3 457.6,53.3" fill="none" stroke="#8ff08a" stroke-width="1.0" stroke-linejoin="round" stroke-opacity="0.85"/><polygon points="457.6,53.3 475.3,53.3 476.0,46.7 458.6,46.8" fill="none" stroke="#8ff08a" stroke-width="1.0" stroke-linejoin="round" stroke-opacity="0.85"/></g>
<g><polygon points="607.8,99.7 605.7,92.3 612.1,35.3 614.5,41.9" fill="#422a3e"/><polygon points="607.8,99.7 625.1,99.6 633.0,41.9 614.5,41.9" fill="#b16682"/><polygon points="614.5,41.9 633.0,41.9 630.2,35.3 612.1,35.3" fill="#bb6784"/><line x1="607.8" y1="99.7" x2="625.1" y2="99.6" stroke="rgba(150,230,160,0.22)" stroke-width="0.8"/><line x1="607.8" y1="99.7" x2="605.7" y2="92.3" stroke="rgba(150,230,160,0.22)" stroke-width="0.8"/><line x1="607.8" y1="99.7" x2="614.5" y2="41.9" stroke="rgba(150,230,160,0.22)" stroke-width="0.8"/><line x1="614.5" y1="41.9" x2="633.0" y2="41.9" stroke="rgba(150,230,160,0.22)" stroke-width="0.8"/><line x1="614.5" y1="41.9" x2="612.1" y2="35.3" stroke="rgba(150,230,160,0.22)" stroke-width="0.8"/><line x1="605.7" y1="92.3" x2="622.7" y2="92.2" stroke="rgba(150,230,160,0.22)" stroke-width="0.8"/><line x1="605.7" y1="92.3" x2="612.1" y2="35.3" stroke="rgba(150,230,160,0.22)" stroke-width="0.8"/><line x1="612.1" y1="35.3" x2="630.2" y2="35.3" stroke="rgba(150,230,160,0.22)" stroke-width="0.8"/><line x1="625.1" y1="99.6" x2="622.7" y2="92.2" stroke="rgba(150,230,160,0.22)" stroke-width="0.8"/><line x1="625.1" y1="99.6" x2="633.0" y2="41.9" stroke="rgba(150,230,160,0.22)" stroke-width="0.8"/><line x1="633.0" y1="41.9" x2="630.2" y2="35.3" stroke="rgba(150,230,160,0.22)" stroke-width="0.8"/><line x1="622.7" y1="92.2" x2="630.2" y2="35.3" stroke="rgba(150,230,160,0.22)" stroke-width="0.8"/><polygon points="607.8,99.7 605.7,92.3 612.1,35.3 614.5,41.9" fill="none" stroke="#8ff08a" stroke-width="1.0" stroke-linejoin="round" stroke-opacity="0.85"/><polygon points="607.8,99.7 625.1,99.6 633.0,41.9 614.5,41.9" fill="none" stroke="#8ff08a" stroke-width="1.0" stroke-linejoin="round" stroke-opacity="0.85"/><polygon points="614.5,41.9 633.0,41.9 630.2,35.3 612.1,35.3" fill="none" stroke="#8ff08a" stroke-width="1.0" stroke-linejoin="round" stroke-opacity="0.85"/></g>
<g><polygon points="586.6,99.8 584.9,92.4 587.3,64.4 589.1,71.4" fill="#422a3e"/><polygon points="586.6,99.8 603.9,99.7 607.0,71.4 589.1,71.4" fill="#b16682"/><polygon points="589.1,71.4 607.0,71.4 604.9,64.3 587.3,64.4" fill="#bb6784"/><line x1="586.6" y1="99.8" x2="603.9" y2="99.7" stroke="rgba(150,230,160,0.22)" stroke-width="0.8"/><line x1="586.6" y1="99.8" x2="584.9" y2="92.4" stroke="rgba(150,230,160,0.22)" stroke-width="0.8"/><line x1="586.6" y1="99.8" x2="589.1" y2="71.4" stroke="rgba(150,230,160,0.22)" stroke-width="0.8"/><line x1="589.1" y1="71.4" x2="607.0" y2="71.4" stroke="rgba(150,230,160,0.22)" stroke-width="0.8"/><line x1="589.1" y1="71.4" x2="587.3" y2="64.4" stroke="rgba(150,230,160,0.22)" stroke-width="0.8"/><line x1="584.9" y1="92.4" x2="601.9" y2="92.3" stroke="rgba(150,230,160,0.22)" stroke-width="0.8"/><line x1="584.9" y1="92.4" x2="587.3" y2="64.4" stroke="rgba(150,230,160,0.22)" stroke-width="0.8"/><line x1="587.3" y1="64.4" x2="604.9" y2="64.3" stroke="rgba(150,230,160,0.22)" stroke-width="0.8"/><line x1="603.9" y1="99.7" x2="601.9" y2="92.3" stroke="rgba(150,230,160,0.22)" stroke-width="0.8"/><line x1="603.9" y1="99.7" x2="607.0" y2="71.4" stroke="rgba(150,230,160,0.22)" stroke-width="0.8"/><line x1="607.0" y1="71.4" x2="604.9" y2="64.3" stroke="rgba(150,230,160,0.22)" stroke-width="0.8"/><line x1="601.9" y1="92.3" x2="604.9" y2="64.3" stroke="rgba(150,230,160,0.22)" stroke-width="0.8"/><polygon points="586.6,99.8 584.9,92.4 587.3,64.4 589.1,71.4" fill="none" stroke="#8ff08a" stroke-width="1.0" stroke-linejoin="round" stroke-opacity="0.85"/><polygon points="586.6,99.8 603.9,99.7 607.0,71.4 589.1,71.4" fill="none" stroke="#8ff08a" stroke-width="1.0" stroke-linejoin="round" stroke-opacity="0.85"/><polygon points="589.1,71.4 607.0,71.4 604.9,64.3 587.3,64.4" fill="none" stroke="#8ff08a" stroke-width="1.0" stroke-linejoin="round" stroke-opacity="0.85"/></g>
<g><polygon points="497.6,100.1 497.8,92.7 497.3,68.8 497.0,75.9" fill="#422a3e"/><polygon points="480.2,100.2 497.6,100.1 497.0,75.9 479.2,75.9" fill="#b16682"/><polygon points="479.2,75.9 497.0,75.9 497.3,68.8 479.8,68.8" fill="#bb6784"/><line x1="480.2" y1="100.2" x2="497.6" y2="100.1" stroke="rgba(150,230,160,0.22)" stroke-width="0.8"/><line x1="480.2" y1="100.2" x2="480.8" y2="92.8" stroke="rgba(150,230,160,0.22)" stroke-width="0.8"/><line x1="480.2" y1="100.2" x2="479.2" y2="75.9" stroke="rgba(150,230,160,0.22)" stroke-width="0.8"/><line x1="479.2" y1="75.9" x2="497.0" y2="75.9" stroke="rgba(150,230,160,0.22)" stroke-width="0.8"/><line x1="479.2" y1="75.9" x2="479.8" y2="68.8" stroke="rgba(150,230,160,0.22)" stroke-width="0.8"/><line x1="480.8" y1="92.8" x2="497.8" y2="92.7" stroke="rgba(150,230,160,0.22)" stroke-width="0.8"/><line x1="480.8" y1="92.8" x2="479.8" y2="68.8" stroke="rgba(150,230,160,0.22)" stroke-width="0.8"/><line x1="479.8" y1="68.8" x2="497.3" y2="68.8" stroke="rgba(150,230,160,0.22)" stroke-width="0.8"/><line x1="497.6" y1="100.1" x2="497.8" y2="92.7" stroke="rgba(150,230,160,0.22)" stroke-width="0.8"/><line x1="497.6" y1="100.1" x2="497.0" y2="75.9" stroke="rgba(150,230,160,0.22)" stroke-width="0.8"/><line x1="497.0" y1="75.9" x2="497.3" y2="68.8" stroke="rgba(150,230,160,0.22)" stroke-width="0.8"/><line x1="497.8" y1="92.7" x2="497.3" y2="68.8" stroke="rgba(150,230,160,0.22)" stroke-width="0.8"/><polygon points="497.6,100.1 497.8,92.7 497.3,68.8 497.0,75.9" fill="none" stroke="#8ff08a" stroke-width="1.0" stroke-linejoin="round" stroke-opacity="0.85"/><polygon points="480.2,100.2 497.6,100.1 497.0,75.9 479.2,75.9" fill="none" stroke="#8ff08a" stroke-width="1.0" stroke-linejoin="round" stroke-opacity="0.85"/><polygon points="479.2,75.9 497.0,75.9 497.3,68.8 479.8,68.8" fill="none" stroke="#8ff08a" stroke-width="1.0" stroke-linejoin="round" stroke-opacity="0.85"/></g>
<g><polygon points="610.5,109.2 608.3,101.4 613.7,55.0 616.1,62.1" fill="#402c40"/><polygon points="610.5,109.2 628.3,109.1 635.0,62.1 616.1,62.1" fill="#ac6884"/><polygon points="616.1,62.1 635.0,62.1 632.1,54.9 613.7,55.0" fill="#b56886"/><line x1="610.5" y1="109.2" x2="628.3" y2="109.1" stroke="rgba(150,230,160,0.22)" stroke-width="0.8"/><line x1="610.5" y1="109.2" x2="608.3" y2="101.4" stroke="rgba(150,230,160,0.22)" stroke-width="0.8"/><line x1="610.5" y1="109.2" x2="616.1" y2="62.1" stroke="rgba(150,230,160,0.22)" stroke-width="0.8"/><line x1="616.1" y1="62.1" x2="635.0" y2="62.1" stroke="rgba(150,230,160,0.22)" stroke-width="0.8"/><line x1="616.1" y1="62.1" x2="613.7" y2="55.0" stroke="rgba(150,230,160,0.22)" stroke-width="0.8"/><line x1="608.3" y1="101.4" x2="625.7" y2="101.3" stroke="rgba(150,230,160,0.22)" stroke-width="0.8"/><line x1="608.3" y1="101.4" x2="613.7" y2="55.0" stroke="rgba(150,230,160,0.22)" stroke-width="0.8"/><line x1="613.7" y1="55.0" x2="632.1" y2="54.9" stroke="rgba(150,230,160,0.22)" stroke-width="0.8"/><line x1="628.3" y1="109.1" x2="625.7" y2="101.3" stroke="rgba(150,230,160,0.22)" stroke-width="0.8"/><line x1="628.3" y1="109.1" x2="635.0" y2="62.1" stroke="rgba(150,230,160,0.22)" stroke-width="0.8"/><line x1="635.0" y1="62.1" x2="632.1" y2="54.9" stroke="rgba(150,230,160,0.22)" stroke-width="0.8"/><line x1="625.7" y1="101.3" x2="632.1" y2="54.9" stroke="rgba(150,230,160,0.22)" stroke-width="0.8"/><polygon points="610.5,109.2 608.3,101.4 613.7,55.0 616.1,62.1" fill="none" stroke="#8ff08a" stroke-width="1.0" stroke-linejoin="round" stroke-opacity="0.85"/><polygon points="610.5,109.2 628.3,109.1 635.0,62.1 616.1,62.1" fill="none" stroke="#8ff08a" stroke-width="1.0" stroke-linejoin="round" stroke-opacity="0.85"/><polygon points="616.1,62.1 635.0,62.1 632.1,54.9 613.7,55.0" fill="none" stroke="#8ff08a" stroke-width="1.0" stroke-linejoin="round" stroke-opacity="0.85"/></g>
<g><polygon points="429.5,120.0 431.3,111.8 425.0,52.0 423.0,59.5" fill="#3e2d41"/><polygon points="411.2,120.1 429.5,120.0 423.0,59.5 403.2,59.5" fill="#a66a87"/><polygon points="403.2,59.5 423.0,59.5 425.0,52.0 405.7,52.1" fill="#ae6a87"/><line x1="411.2" y1="120.1" x2="429.5" y2="120.0" stroke="rgba(150,230,160,0.22)" stroke-width="0.8"/><line x1="411.2" y1="120.1" x2="413.3" y2="111.8" stroke="rgba(150,230,160,0.22)" stroke-width="0.8"/><line x1="411.2" y1="120.1" x2="403.2" y2="59.5" stroke="rgba(150,230,160,0.22)" stroke-width="0.8"/><line x1="403.2" y1="59.5" x2="423.0" y2="59.5" stroke="rgba(150,230,160,0.22)" stroke-width="0.8"/><line x1="403.2" y1="59.5" x2="405.7" y2="52.1" stroke="rgba(150,230,160,0.22)" stroke-width="0.8"/><line x1="413.3" y1="111.8" x2="431.3" y2="111.8" stroke="rgba(150,230,160,0.22)" stroke-width="0.8"/><line x1="413.3" y1="111.8" x2="405.7" y2="52.1" stroke="rgba(150,230,160,0.22)" stroke-width="0.8"/><line x1="405.7" y1="52.1" x2="425.0" y2="52.0" stroke="rgba(150,230,160,0.22)" stroke-width="0.8"/><line x1="429.5" y1="120.0" x2="431.3" y2="111.8" stroke="rgba(150,230,160,0.22)" stroke-width="0.8"/><line x1="429.5" y1="120.0" x2="423.0" y2="59.5" stroke="rgba(150,230,160,0.22)" stroke-width="0.8"/><line x1="423.0" y1="59.5" x2="425.0" y2="52.0" stroke="rgba(150,230,160,0.22)" stroke-width="0.8"/><line x1="431.3" y1="111.8" x2="425.0" y2="52.0" stroke="rgba(150,230,160,0.22)" stroke-width="0.8"/><polygon points="429.5,120.0 431.3,111.8 425.0,52.0 423.0,59.5" fill="none" stroke="#8ff08a" stroke-width="1.0" stroke-linejoin="round" stroke-opacity="0.85"/><polygon points="411.2,120.1 429.5,120.0 423.0,59.5 403.2,59.5" fill="none" stroke="#8ff08a" stroke-width="1.0" stroke-linejoin="round" stroke-opacity="0.85"/><polygon points="403.2,59.5 423.0,59.5 425.0,52.0 405.7,52.1" fill="none" stroke="#8ff08a" stroke-width="1.0" stroke-linejoin="round" stroke-opacity="0.85"/></g>
<g><polygon points="452.0,119.9 453.3,111.7 451.6,90.4 450.3,98.4" fill="#3e2d41"/><polygon points="433.7,120.0 452.0,119.9 450.3,98.4 431.5,98.4" fill="#a66a87"/><polygon points="431.5,98.4 450.3,98.4 451.6,90.4 433.2,90.5" fill="#ae6a87"/><line x1="433.7" y1="120.0" x2="452.0" y2="119.9" stroke="rgba(150,230,160,0.22)" stroke-width="0.8"/><line x1="433.7" y1="120.0" x2="435.3" y2="111.7" stroke="rgba(150,230,160,0.22)" stroke-width="0.8"/><line x1="433.7" y1="120.0" x2="431.5" y2="98.4" stroke="rgba(150,230,160,0.22)" stroke-width="0.8"/><line x1="431.5" y1="98.4" x2="450.3" y2="98.4" stroke="rgba(150,230,160,0.22)" stroke-width="0.8"/><line x1="431.5" y1="98.4" x2="433.2" y2="90.5" stroke="rgba(150,230,160,0.22)" stroke-width="0.8"/><line x1="435.3" y1="111.7" x2="453.3" y2="111.7" stroke="rgba(150,230,160,0.22)" stroke-width="0.8"/><line x1="435.3" y1="111.7" x2="433.2" y2="90.5" stroke="rgba(150,230,160,0.22)" stroke-width="0.8"/><line x1="433.2" y1="90.5" x2="451.6" y2="90.4" stroke="rgba(150,230,160,0.22)" stroke-width="0.8"/><line x1="452.0" y1="119.9" x2="453.3" y2="111.7" stroke="rgba(150,230,160,0.22)" stroke-width="0.8"/><line x1="452.0" y1="119.9" x2="450.3" y2="98.4" stroke="rgba(150,230,160,0.22)" stroke-width="0.8"/><line x1="450.3" y1="98.4" x2="451.6" y2="90.4" stroke="rgba(150,230,160,0.22)" stroke-width="0.8"/><line x1="453.3" y1="111.7" x2="451.6" y2="90.4" stroke="rgba(150,230,160,0.22)" stroke-width="0.8"/><polygon points="452.0,119.9 453.3,111.7 451.6,90.4 450.3,98.4" fill="none" stroke="#8ff08a" stroke-width="1.0" stroke-linejoin="round" stroke-opacity="0.85"/><polygon points="433.7,120.0 452.0,119.9 450.3,98.4 431.5,98.4" fill="none" stroke="#8ff08a" stroke-width="1.0" stroke-linejoin="round" stroke-opacity="0.85"/><polygon points="431.5,98.4 450.3,98.4 451.6,90.4 433.2,90.5" fill="none" stroke="#8ff08a" stroke-width="1.0" stroke-linejoin="round" stroke-opacity="0.85"/></g>
<g><polygon points="523.6,119.6 523.3,111.4 523.5,90.2 523.9,98.1" fill="#3e2d41"/><polygon points="523.6,119.6 541.9,119.5 542.7,98.1 523.9,98.1" fill="#a66a87"/><polygon points="523.9,98.1 542.7,98.1 541.9,90.1 523.5,90.2" fill="#ae6a87"/><line x1="523.6" y1="119.6" x2="541.9" y2="119.5" stroke="rgba(150,230,160,0.22)" stroke-width="0.8"/><line x1="523.6" y1="119.6" x2="523.3" y2="111.4" stroke="rgba(150,230,160,0.22)" stroke-width="0.8"/><line x1="523.6" y1="119.6" x2="523.9" y2="98.1" stroke="rgba(150,230,160,0.22)" stroke-width="0.8"/><line x1="523.9" y1="98.1" x2="542.7" y2="98.1" stroke="rgba(150,230,160,0.22)" stroke-width="0.8"/><line x1="523.9" y1="98.1" x2="523.5" y2="90.2" stroke="rgba(150,230,160,0.22)" stroke-width="0.8"/><line x1="523.3" y1="111.4" x2="541.2" y2="111.3" stroke="rgba(150,230,160,0.22)" stroke-width="0.8"/><line x1="523.3" y1="111.4" x2="523.5" y2="90.2" stroke="rgba(150,230,160,0.22)" stroke-width="0.8"/><line x1="523.5" y1="90.2" x2="541.9" y2="90.1" stroke="rgba(150,230,160,0.22)" stroke-width="0.8"/><line x1="541.9" y1="119.5" x2="541.2" y2="111.3" stroke="rgba(150,230,160,0.22)" stroke-width="0.8"/><line x1="541.9" y1="119.5" x2="542.7" y2="98.1" stroke="rgba(150,230,160,0.22)" stroke-width="0.8"/><line x1="542.7" y1="98.1" x2="541.9" y2="90.1" stroke="rgba(150,230,160,0.22)" stroke-width="0.8"/><line x1="541.2" y1="111.3" x2="541.9" y2="90.1" stroke="rgba(150,230,160,0.22)" stroke-width="0.8"/><polygon points="523.6,119.6 523.3,111.4 523.5,90.2 523.9,98.1" fill="none" stroke="#8ff08a" stroke-width="1.0" stroke-linejoin="round" stroke-opacity="0.85"/><polygon points="523.6,119.6 541.9,119.5 542.7,98.1 523.9,98.1" fill="none" stroke="#8ff08a" stroke-width="1.0" stroke-linejoin="round" stroke-opacity="0.85"/><polygon points="523.9,98.1 542.7,98.1 541.9,90.1 523.5,90.2" fill="none" stroke="#8ff08a" stroke-width="1.0" stroke-linejoin="round" stroke-opacity="0.85"/></g>
<g><polygon points="501.2,119.7 501.3,111.5 501.0,92.0 500.8,100.0" fill="#3e2d41"/><polygon points="501.2,119.7 519.5,119.6 519.6,100.0 500.8,100.0" fill="#a66a87"/><polygon points="500.8,100.0 519.6,100.0 519.3,92.0 501.0,92.0" fill="#ae6a87"/><line x1="501.2" y1="119.7" x2="519.5" y2="119.6" stroke="rgba(150,230,160,0.22)" stroke-width="0.8"/><line x1="501.2" y1="119.7" x2="501.3" y2="111.5" stroke="rgba(150,230,160,0.22)" stroke-width="0.8"/><line x1="501.2" y1="119.7" x2="500.8" y2="100.0" stroke="rgba(150,230,160,0.22)" stroke-width="0.8"/><line x1="500.8" y1="100.0" x2="519.6" y2="100.0" stroke="rgba(150,230,160,0.22)" stroke-width="0.8"/><line x1="500.8" y1="100.0" x2="501.0" y2="92.0" stroke="rgba(150,230,160,0.22)" stroke-width="0.8"/><line x1="501.3" y1="111.5" x2="519.2" y2="111.4" stroke="rgba(150,230,160,0.22)" stroke-width="0.8"/><line x1="501.3" y1="111.5" x2="501.0" y2="92.0" stroke="rgba(150,230,160,0.22)" stroke-width="0.8"/><line x1="501.0" y1="92.0" x2="519.3" y2="92.0" stroke="rgba(150,230,160,0.22)" stroke-width="0.8"/><line x1="519.5" y1="119.6" x2="519.2" y2="111.4" stroke="rgba(150,230,160,0.22)" stroke-width="0.8"/><line x1="519.5" y1="119.6" x2="519.6" y2="100.0" stroke="rgba(150,230,160,0.22)" stroke-width="0.8"/><line x1="519.6" y1="100.0" x2="519.3" y2="92.0" stroke="rgba(150,230,160,0.22)" stroke-width="0.8"/><line x1="519.2" y1="111.4" x2="519.3" y2="92.0" stroke="rgba(150,230,160,0.22)" stroke-width="0.8"/><polygon points="501.2,119.7 501.3,111.5 501.0,92.0 500.8,100.0" fill="none" stroke="#8ff08a" stroke-width="1.0" stroke-linejoin="round" stroke-opacity="0.85"/><polygon points="501.2,119.7 519.5,119.6 519.6,100.0 500.8,100.0" fill="none" stroke="#8ff08a" stroke-width="1.0" stroke-linejoin="round" stroke-opacity="0.85"/><polygon points="500.8,100.0 519.6,100.0 519.3,92.0 501.0,92.0" fill="none" stroke="#8ff08a" stroke-width="1.0" stroke-linejoin="round" stroke-opacity="0.85"/></g>
<g><polygon points="427.3,130.6 429.1,121.9 426.6,98.6 424.7,107.1" fill="#3c2e42"/><polygon points="408.5,130.7 427.3,130.6 424.7,107.1 405.2,107.2" fill="#a16c89"/><polygon points="405.2,107.2 424.7,107.1 426.6,98.6 407.6,98.7" fill="#a86b89"/><line x1="408.5" y1="130.7" x2="427.3" y2="130.6" stroke="rgba(150,230,160,0.22)" stroke-width="0.8"/><line x1="408.5" y1="130.7" x2="410.7" y2="122.0" stroke="rgba(150,230,160,0.22)" stroke-width="0.8"/><line x1="408.5" y1="130.7" x2="405.2" y2="107.2" stroke="rgba(150,230,160,0.22)" stroke-width="0.8"/><line x1="405.2" y1="107.2" x2="424.7" y2="107.1" stroke="rgba(150,230,160,0.22)" stroke-width="0.8"/><line x1="405.2" y1="107.2" x2="407.6" y2="98.7" stroke="rgba(150,230,160,0.22)" stroke-width="0.8"/><line x1="410.7" y1="122.0" x2="429.1" y2="121.9" stroke="rgba(150,230,160,0.22)" stroke-width="0.8"/><line x1="410.7" y1="122.0" x2="407.6" y2="98.7" stroke="rgba(150,230,160,0.22)" stroke-width="0.8"/><line x1="407.6" y1="98.7" x2="426.6" y2="98.6" stroke="rgba(150,230,160,0.22)" stroke-width="0.8"/><line x1="427.3" y1="130.6" x2="429.1" y2="121.9" stroke="rgba(150,230,160,0.22)" stroke-width="0.8"/><line x1="427.3" y1="130.6" x2="424.7" y2="107.1" stroke="rgba(150,230,160,0.22)" stroke-width="0.8"/><line x1="424.7" y1="107.1" x2="426.6" y2="98.6" stroke="rgba(150,230,160,0.22)" stroke-width="0.8"/><line x1="429.1" y1="121.9" x2="426.6" y2="98.6" stroke="rgba(150,230,160,0.22)" stroke-width="0.8"/><polygon points="427.3,130.6 429.1,121.9 426.6,98.6 424.7,107.1" fill="none" stroke="#8ff08a" stroke-width="1.0" stroke-linejoin="round" stroke-opacity="0.85"/><polygon points="408.5,130.7 427.3,130.6 424.7,107.1 405.2,107.2" fill="none" stroke="#8ff08a" stroke-width="1.0" stroke-linejoin="round" stroke-opacity="0.85"/><polygon points="405.2,107.2 424.7,107.1 426.6,98.6 407.6,98.7" fill="none" stroke="#8ff08a" stroke-width="1.0" stroke-linejoin="round" stroke-opacity="0.85"/></g>
<g><polygon points="547.2,130.1 546.3,121.4 548.1,76.3 549.1,84.3" fill="#3c2e42"/><polygon points="547.2,130.1 566.0,130.0 569.0,84.3 549.1,84.3" fill="#a16c89"/><polygon points="549.1,84.3 569.0,84.3 567.5,76.2 548.1,76.3" fill="#a86b89"/><line x1="547.2" y1="130.1" x2="566.0" y2="130.0" stroke="rgba(150,230,160,0.22)" stroke-width="0.8"/><line x1="547.2" y1="130.1" x2="546.3" y2="121.4" stroke="rgba(150,230,160,0.22)" stroke-width="0.8"/><line x1="547.2" y1="130.1" x2="549.1" y2="84.3" stroke="rgba(150,230,160,0.22)" stroke-width="0.8"/><line x1="549.1" y1="84.3" x2="569.0" y2="84.3" stroke="rgba(150,230,160,0.22)" stroke-width="0.8"/><line x1="549.1" y1="84.3" x2="548.1" y2="76.3" stroke="rgba(150,230,160,0.22)" stroke-width="0.8"/><line x1="546.3" y1="121.4" x2="564.7" y2="121.3" stroke="rgba(150,230,160,0.22)" stroke-width="0.8"/><line x1="546.3" y1="121.4" x2="548.1" y2="76.3" stroke="rgba(150,230,160,0.22)" stroke-width="0.8"/><line x1="548.1" y1="76.3" x2="567.5" y2="76.2" stroke="rgba(150,230,160,0.22)" stroke-width="0.8"/><line x1="566.0" y1="130.0" x2="564.7" y2="121.3" stroke="rgba(150,230,160,0.22)" stroke-width="0.8"/><line x1="566.0" y1="130.0" x2="569.0" y2="84.3" stroke="rgba(150,230,160,0.22)" stroke-width="0.8"/><line x1="569.0" y1="84.3" x2="567.5" y2="76.2" stroke="rgba(150,230,160,0.22)" stroke-width="0.8"/><line x1="564.7" y1="121.3" x2="567.5" y2="76.2" stroke="rgba(150,230,160,0.22)" stroke-width="0.8"/><polygon points="547.2,130.1 546.3,121.4 548.1,76.3 549.1,84.3" fill="none" stroke="#8ff08a" stroke-width="1.0" stroke-linejoin="round" stroke-opacity="0.85"/><polygon points="547.2,130.1 566.0,130.0 569.0,84.3 549.1,84.3" fill="none" stroke="#8ff08a" stroke-width="1.0" stroke-linejoin="round" stroke-opacity="0.85"/><polygon points="549.1,84.3 569.0,84.3 567.5,76.2 548.1,76.3" fill="none" stroke="#8ff08a" stroke-width="1.0" stroke-linejoin="round" stroke-opacity="0.85"/></g>
<g><polygon points="572.1,141.2 570.6,132.0 574.2,80.8 575.9,89.3" fill="#3a3044"/><polygon points="572.1,141.2 591.4,141.1 596.6,89.3 575.9,89.3" fill="#9c6e8b"/><polygon points="575.9,89.3 596.6,89.3 594.4,80.8 574.2,80.8" fill="#a26c8b"/><line x1="572.1" y1="141.2" x2="591.4" y2="141.1" stroke="rgba(150,230,160,0.22)" stroke-width="0.8"/><line x1="572.1" y1="141.2" x2="570.6" y2="132.0" stroke="rgba(150,230,160,0.22)" stroke-width="0.8"/><line x1="572.1" y1="141.2" x2="575.9" y2="89.3" stroke="rgba(150,230,160,0.22)" stroke-width="0.8"/><line x1="575.9" y1="89.3" x2="596.6" y2="89.3" stroke="rgba(150,230,160,0.22)" stroke-width="0.8"/><line x1="575.9" y1="89.3" x2="574.2" y2="80.8" stroke="rgba(150,230,160,0.22)" stroke-width="0.8"/><line x1="570.6" y1="132.0" x2="589.5" y2="132.0" stroke="rgba(150,230,160,0.22)" stroke-width="0.8"/><line x1="570.6" y1="132.0" x2="574.2" y2="80.8" stroke="rgba(150,230,160,0.22)" stroke-width="0.8"/><line x1="574.2" y1="80.8" x2="594.4" y2="80.8" stroke="rgba(150,230,160,0.22)" stroke-width="0.8"/><line x1="591.4" y1="141.1" x2="589.5" y2="132.0" stroke="rgba(150,230,160,0.22)" stroke-width="0.8"/><line x1="591.4" y1="141.1" x2="596.6" y2="89.3" stroke="rgba(150,230,160,0.22)" stroke-width="0.8"/><line x1="596.6" y1="89.3" x2="594.4" y2="80.8" stroke="rgba(150,230,160,0.22)" stroke-width="0.8"/><line x1="589.5" y1="132.0" x2="594.4" y2="80.8" stroke="rgba(150,230,160,0.22)" stroke-width="0.8"/><polygon points="572.1,141.2 570.6,132.0 574.2,80.8 575.9,89.3" fill="none" stroke="#8ff08a" stroke-width="1.0" stroke-linejoin="round" stroke-opacity="0.85"/><polygon points="572.1,141.2 591.4,141.1 596.6,89.3 575.9,89.3" fill="none" stroke="#8ff08a" stroke-width="1.0" stroke-linejoin="round" stroke-opacity="0.85"/><polygon points="575.9,89.3 596.6,89.3 594.4,80.8 574.2,80.8" fill="none" stroke="#8ff08a" stroke-width="1.0" stroke-linejoin="round" stroke-opacity="0.85"/></g>
<g><polygon points="448.8,141.8 450.2,132.6 448.5,112.9 447.1,121.9" fill="#3a3044"/><polygon points="429.4,141.9 448.8,141.8 447.1,121.9 427.2,121.9" fill="#9c6e8b"/><polygon points="427.2,121.9 447.1,121.9 448.5,112.9 429.1,113.0" fill="#a26c8b"/><line x1="429.4" y1="141.9" x2="448.8" y2="141.8" stroke="rgba(150,230,160,0.22)" stroke-width="0.8"/><line x1="429.4" y1="141.9" x2="431.2" y2="132.7" stroke="rgba(150,230,160,0.22)" stroke-width="0.8"/><line x1="429.4" y1="141.9" x2="427.2" y2="121.9" stroke="rgba(150,230,160,0.22)" stroke-width="0.8"/><line x1="427.2" y1="121.9" x2="447.1" y2="121.9" stroke="rgba(150,230,160,0.22)" stroke-width="0.8"/><line x1="427.2" y1="121.9" x2="429.1" y2="113.0" stroke="rgba(150,230,160,0.22)" stroke-width="0.8"/><line x1="431.2" y1="132.7" x2="450.2" y2="132.6" stroke="rgba(150,230,160,0.22)" stroke-width="0.8"/><line x1="431.2" y1="132.7" x2="429.1" y2="113.0" stroke="rgba(150,230,160,0.22)" stroke-width="0.8"/><line x1="429.1" y1="113.0" x2="448.5" y2="112.9" stroke="rgba(150,230,160,0.22)" stroke-width="0.8"/><line x1="448.8" y1="141.8" x2="450.2" y2="132.6" stroke="rgba(150,230,160,0.22)" stroke-width="0.8"/><line x1="448.8" y1="141.8" x2="447.1" y2="121.9" stroke="rgba(150,230,160,0.22)" stroke-width="0.8"/><line x1="447.1" y1="121.9" x2="448.5" y2="112.9" stroke="rgba(150,230,160,0.22)" stroke-width="0.8"/><line x1="450.2" y1="132.6" x2="448.5" y2="112.9" stroke="rgba(150,230,160,0.22)" stroke-width="0.8"/><polygon points="448.8,141.8 450.2,132.6 448.5,112.9 447.1,121.9" fill="none" stroke="#8ff08a" stroke-width="1.0" stroke-linejoin="round" stroke-opacity="0.85"/><polygon points="429.4,141.9 448.8,141.8 447.1,121.9 427.2,121.9" fill="none" stroke="#8ff08a" stroke-width="1.0" stroke-linejoin="round" stroke-opacity="0.85"/><polygon points="427.2,121.9 447.1,121.9 448.5,112.9 429.1,113.0" fill="none" stroke="#8ff08a" stroke-width="1.0" stroke-linejoin="round" stroke-opacity="0.85"/></g>
<g><polygon points="622.9,152.9 620.2,143.2 628.8,80.5 632.0,89.3" fill="#393145"/><polygon points="622.9,152.9 642.8,152.8 653.6,89.3 632.0,89.3" fill="#96718d"/><polygon points="632.0,89.3 653.6,89.3 649.8,80.4 628.8,80.5" fill="#9b6e8d"/><line x1="622.9" y1="152.9" x2="642.8" y2="152.8" stroke="rgba(150,230,160,0.22)" stroke-width="0.8"/><line x1="622.9" y1="152.9" x2="620.2" y2="143.2" stroke="rgba(150,230,160,0.22)" stroke-width="0.8"/><line x1="622.9" y1="152.9" x2="632.0" y2="89.3" stroke="rgba(150,230,160,0.22)" stroke-width="0.8"/><line x1="632.0" y1="89.3" x2="653.6" y2="89.3" stroke="rgba(150,230,160,0.22)" stroke-width="0.8"/><line x1="632.0" y1="89.3" x2="628.8" y2="80.5" stroke="rgba(150,230,160,0.22)" stroke-width="0.8"/><line x1="620.2" y1="143.2" x2="639.6" y2="143.1" stroke="rgba(150,230,160,0.22)" stroke-width="0.8"/><line x1="620.2" y1="143.2" x2="628.8" y2="80.5" stroke="rgba(150,230,160,0.22)" stroke-width="0.8"/><line x1="628.8" y1="80.5" x2="649.8" y2="80.4" stroke="rgba(150,230,160,0.22)" stroke-width="0.8"/><line x1="642.8" y1="152.8" x2="639.6" y2="143.1" stroke="rgba(150,230,160,0.22)" stroke-width="0.8"/><line x1="642.8" y1="152.8" x2="653.6" y2="89.3" stroke="rgba(150,230,160,0.22)" stroke-width="0.8"/><line x1="653.6" y1="89.3" x2="649.8" y2="80.4" stroke="rgba(150,230,160,0.22)" stroke-width="0.8"/><line x1="639.6" y1="143.1" x2="649.8" y2="80.4" stroke="rgba(150,230,160,0.22)" stroke-width="0.8"/><polygon points="622.9,152.9 620.2,143.2 628.8,80.5 632.0,89.3" fill="none" stroke="#8ff08a" stroke-width="1.0" stroke-linejoin="round" stroke-opacity="0.85"/><polygon points="622.9,152.9 642.8,152.8 653.6,89.3 632.0,89.3" fill="none" stroke="#8ff08a" stroke-width="1.0" stroke-linejoin="round" stroke-opacity="0.85"/><polygon points="632.0,89.3 653.6,89.3 649.8,80.4 628.8,80.5" fill="none" stroke="#8ff08a" stroke-width="1.0" stroke-linejoin="round" stroke-opacity="0.85"/></g>
<g><polygon points="574.0,153.1 572.4,143.4 575.6,100.7 577.4,109.9" fill="#393145"/><polygon points="574.0,153.1 594.0,153.0 598.5,109.9 577.4,109.9" fill="#96718d"/><polygon points="577.4,109.9 598.5,109.9 596.2,100.7 575.6,100.7" fill="#9b6e8d"/><line x1="574.0" y1="153.1" x2="594.0" y2="153.0" stroke="rgba(150,230,160,0.22)" stroke-width="0.8"/><line x1="574.0" y1="153.1" x2="572.4" y2="143.4" stroke="rgba(150,230,160,0.22)" stroke-width="0.8"/><line x1="574.0" y1="153.1" x2="577.4" y2="109.9" stroke="rgba(150,230,160,0.22)" stroke-width="0.8"/><line x1="577.4" y1="109.9" x2="598.5" y2="109.9" stroke="rgba(150,230,160,0.22)" stroke-width="0.8"/><line x1="577.4" y1="109.9" x2="575.6" y2="100.7" stroke="rgba(150,230,160,0.22)" stroke-width="0.8"/><line x1="572.4" y1="143.4" x2="591.9" y2="143.3" stroke="rgba(150,230,160,0.22)" stroke-width="0.8"/><line x1="572.4" y1="143.4" x2="575.6" y2="100.7" stroke="rgba(150,230,160,0.22)" stroke-width="0.8"/><line x1="575.6" y1="100.7" x2="596.2" y2="100.7" stroke="rgba(150,230,160,0.22)" stroke-width="0.8"/><line x1="594.0" y1="153.0" x2="591.9" y2="143.3" stroke="rgba(150,230,160,0.22)" stroke-width="0.8"/><line x1="594.0" y1="153.0" x2="598.5" y2="109.9" stroke="rgba(150,230,160,0.22)" stroke-width="0.8"/><line x1="598.5" y1="109.9" x2="596.2" y2="100.7" stroke="rgba(150,230,160,0.22)" stroke-width="0.8"/><line x1="591.9" y1="143.3" x2="596.2" y2="100.7" stroke="rgba(150,230,160,0.22)" stroke-width="0.8"/><polygon points="574.0,153.1 572.4,143.4 575.6,100.7 577.4,109.9" fill="none" stroke="#8ff08a" stroke-width="1.0" stroke-linejoin="round" stroke-opacity="0.85"/><polygon points="574.0,153.1 594.0,153.0 598.5,109.9 577.4,109.9" fill="none" stroke="#8ff08a" stroke-width="1.0" stroke-linejoin="round" stroke-opacity="0.85"/><polygon points="577.4,109.9 598.5,109.9 596.2,100.7 575.6,100.7" fill="none" stroke="#8ff08a" stroke-width="1.0" stroke-linejoin="round" stroke-opacity="0.85"/></g>
<g><polygon points="495.7,166.2 496.0,155.8 494.5,97.8 494.2,107.4" fill="#373246"/><polygon points="475.1,166.3 495.7,166.2 494.2,107.4 472.0,107.5" fill="#91738f"/><polygon points="472.0,107.5 494.2,107.4 494.5,97.8 472.9,97.9" fill="#956f8f"/><line x1="475.1" y1="166.3" x2="495.7" y2="166.2" stroke="rgba(150,230,160,0.22)" stroke-width="0.8"/><line x1="475.1" y1="166.3" x2="475.9" y2="155.9" stroke="rgba(150,230,160,0.22)" stroke-width="0.8"/><line x1="475.1" y1="166.3" x2="472.0" y2="107.5" stroke="rgba(150,230,160,0.22)" stroke-width="0.8"/><line x1="472.0" y1="107.5" x2="494.2" y2="107.4" stroke="rgba(150,230,160,0.22)" stroke-width="0.8"/><line x1="472.0" y1="107.5" x2="472.9" y2="97.9" stroke="rgba(150,230,160,0.22)" stroke-width="0.8"/><line x1="475.9" y1="155.9" x2="496.0" y2="155.8" stroke="rgba(150,230,160,0.22)" stroke-width="0.8"/><line x1="475.9" y1="155.9" x2="472.9" y2="97.9" stroke="rgba(150,230,160,0.22)" stroke-width="0.8"/><line x1="472.9" y1="97.9" x2="494.5" y2="97.8" stroke="rgba(150,230,160,0.22)" stroke-width="0.8"/><line x1="495.7" y1="166.2" x2="496.0" y2="155.8" stroke="rgba(150,230,160,0.22)" stroke-width="0.8"/><line x1="495.7" y1="166.2" x2="494.2" y2="107.4" stroke="rgba(150,230,160,0.22)" stroke-width="0.8"/><line x1="494.2" y1="107.4" x2="494.5" y2="97.8" stroke="rgba(150,230,160,0.22)" stroke-width="0.8"/><line x1="496.0" y1="155.8" x2="494.5" y2="97.8" stroke="rgba(150,230,160,0.22)" stroke-width="0.8"/><polygon points="495.7,166.2 496.0,155.8 494.5,97.8 494.2,107.4" fill="none" stroke="#8ff08a" stroke-width="1.0" stroke-linejoin="round" stroke-opacity="0.85"/><polygon points="475.1,166.3 495.7,166.2 494.2,107.4 472.0,107.5" fill="none" stroke="#8ff08a" stroke-width="1.0" stroke-linejoin="round" stroke-opacity="0.85"/><polygon points="472.0,107.5 494.2,107.4 494.5,97.8 472.9,97.9" fill="none" stroke="#8ff08a" stroke-width="1.0" stroke-linejoin="round" stroke-opacity="0.85"/></g>
<g><polygon points="604.3,179.1 601.9,168.1 608.7,109.9 611.5,120.1" fill="#353347"/><polygon points="604.3,179.1 625.5,179.0 634.4,120.1 611.5,120.1" fill="#8b7592"/><polygon points="611.5,120.1 634.4,120.1 630.9,109.8 608.7,109.9" fill="#8e7190"/><line x1="604.3" y1="179.1" x2="625.5" y2="179.0" stroke="rgba(150,230,160,0.22)" stroke-width="0.8"/><line x1="604.3" y1="179.1" x2="601.9" y2="168.1" stroke="rgba(150,230,160,0.22)" stroke-width="0.8"/><line x1="604.3" y1="179.1" x2="611.5" y2="120.1" stroke="rgba(150,230,160,0.22)" stroke-width="0.8"/><line x1="611.5" y1="120.1" x2="634.4" y2="120.1" stroke="rgba(150,230,160,0.22)" stroke-width="0.8"/><line x1="611.5" y1="120.1" x2="608.7" y2="109.9" stroke="rgba(150,230,160,0.22)" stroke-width="0.8"/><line x1="601.9" y1="168.1" x2="622.5" y2="168.0" stroke="rgba(150,230,160,0.22)" stroke-width="0.8"/><line x1="601.9" y1="168.1" x2="608.7" y2="109.9" stroke="rgba(150,230,160,0.22)" stroke-width="0.8"/><line x1="608.7" y1="109.9" x2="630.9" y2="109.8" stroke="rgba(150,230,160,0.22)" stroke-width="0.8"/><line x1="625.5" y1="179.0" x2="622.5" y2="168.0" stroke="rgba(150,230,160,0.22)" stroke-width="0.8"/><line x1="625.5" y1="179.0" x2="634.4" y2="120.1" stroke="rgba(150,230,160,0.22)" stroke-width="0.8"/><line x1="634.4" y1="120.1" x2="630.9" y2="109.8" stroke="rgba(150,230,160,0.22)" stroke-width="0.8"/><line x1="622.5" y1="168.0" x2="630.9" y2="109.8" stroke="rgba(150,230,160,0.22)" stroke-width="0.8"/><polygon points="604.3,179.1 601.9,168.1 608.7,109.9 611.5,120.1" fill="none" stroke="#8ff08a" stroke-width="1.0" stroke-linejoin="round" stroke-opacity="0.85"/><polygon points="604.3,179.1 625.5,179.0 634.4,120.1 611.5,120.1" fill="none" stroke="#8ff08a" stroke-width="1.0" stroke-linejoin="round" stroke-opacity="0.85"/><polygon points="611.5,120.1 634.4,120.1 630.9,109.8 608.7,109.9" fill="none" stroke="#8ff08a" stroke-width="1.0" stroke-linejoin="round" stroke-opacity="0.85"/></g>
<g><polygon points="443.1,179.9 444.8,168.8 440.6,124.5 438.7,135.1" fill="#353347"/><polygon points="421.9,180.0 443.1,179.9 438.7,135.1 416.1,135.2" fill="#8b7592"/><polygon points="416.1,135.2 438.7,135.1 440.6,124.5 418.6,124.6" fill="#8e7190"/><line x1="421.9" y1="180.0" x2="443.1" y2="179.9" stroke="rgba(150,230,160,0.22)" stroke-width="0.8"/><line x1="421.9" y1="180.0" x2="424.0" y2="168.9" stroke="rgba(150,230,160,0.22)" stroke-width="0.8"/><line x1="421.9" y1="180.0" x2="416.1" y2="135.2" stroke="rgba(150,230,160,0.22)" stroke-width="0.8"/><line x1="416.1" y1="135.2" x2="438.7" y2="135.1" stroke="rgba(150,230,160,0.22)" stroke-width="0.8"/><line x1="416.1" y1="135.2" x2="418.6" y2="124.6" stroke="rgba(150,230,160,0.22)" stroke-width="0.8"/><line x1="424.0" y1="168.9" x2="444.8" y2="168.8" stroke="rgba(150,230,160,0.22)" stroke-width="0.8"/><line x1="424.0" y1="168.9" x2="418.6" y2="124.6" stroke="rgba(150,230,160,0.22)" stroke-width="0.8"/><line x1="418.6" y1="124.6" x2="440.6" y2="124.5" stroke="rgba(150,230,160,0.22)" stroke-width="0.8"/><line x1="443.1" y1="179.9" x2="444.8" y2="168.8" stroke="rgba(150,230,160,0.22)" stroke-width="0.8"/><line x1="443.1" y1="179.9" x2="438.7" y2="135.1" stroke="rgba(150,230,160,0.22)" stroke-width="0.8"/><line x1="438.7" y1="135.1" x2="440.6" y2="124.5" stroke="rgba(150,230,160,0.22)" stroke-width="0.8"/><line x1="444.8" y1="168.8" x2="440.6" y2="124.5" stroke="rgba(150,230,160,0.22)" stroke-width="0.8"/><polygon points="443.1,179.9 444.8,168.8 440.6,124.5 438.7,135.1" fill="none" stroke="#8ff08a" stroke-width="1.0" stroke-linejoin="round" stroke-opacity="0.85"/><polygon points="421.9,180.0 443.1,179.9 438.7,135.1 416.1,135.2" fill="none" stroke="#8ff08a" stroke-width="1.0" stroke-linejoin="round" stroke-opacity="0.85"/><polygon points="416.1,135.2 438.7,135.1 440.6,124.5 418.6,124.6" fill="none" stroke="#8ff08a" stroke-width="1.0" stroke-linejoin="round" stroke-opacity="0.85"/></g>
<g><polygon points="526.2,179.5 525.7,168.4 526.7,102.6 527.2,112.7" fill="#353347"/><polygon points="526.2,179.5 547.4,179.4 550.4,112.6 527.2,112.7" fill="#8b7592"/><polygon points="527.2,112.7 550.4,112.6 549.2,102.5 526.7,102.6" fill="#8e7190"/><line x1="526.2" y1="179.5" x2="547.4" y2="179.4" stroke="rgba(150,230,160,0.22)" stroke-width="0.8"/><line x1="526.2" y1="179.5" x2="525.7" y2="168.4" stroke="rgba(150,230,160,0.22)" stroke-width="0.8"/><line x1="526.2" y1="179.5" x2="527.2" y2="112.7" stroke="rgba(150,230,160,0.22)" stroke-width="0.8"/><line x1="527.2" y1="112.7" x2="550.4" y2="112.6" stroke="rgba(150,230,160,0.22)" stroke-width="0.8"/><line x1="527.2" y1="112.7" x2="526.7" y2="102.6" stroke="rgba(150,230,160,0.22)" stroke-width="0.8"/><line x1="525.7" y1="168.4" x2="546.4" y2="168.3" stroke="rgba(150,230,160,0.22)" stroke-width="0.8"/><line x1="525.7" y1="168.4" x2="526.7" y2="102.6" stroke="rgba(150,230,160,0.22)" stroke-width="0.8"/><line x1="526.7" y1="102.6" x2="549.2" y2="102.5" stroke="rgba(150,230,160,0.22)" stroke-width="0.8"/><line x1="547.4" y1="179.4" x2="546.4" y2="168.3" stroke="rgba(150,230,160,0.22)" stroke-width="0.8"/><line x1="547.4" y1="179.4" x2="550.4" y2="112.6" stroke="rgba(150,230,160,0.22)" stroke-width="0.8"/><line x1="550.4" y1="112.6" x2="549.2" y2="102.5" stroke="rgba(150,230,160,0.22)" stroke-width="0.8"/><line x1="546.4" y1="168.3" x2="549.2" y2="102.5" stroke="rgba(150,230,160,0.22)" stroke-width="0.8"/><polygon points="526.2,179.5 525.7,168.4 526.7,102.6 527.2,112.7" fill="none" stroke="#8ff08a" stroke-width="1.0" stroke-linejoin="round" stroke-opacity="0.85"/><polygon points="526.2,179.5 547.4,179.4 550.4,112.6 527.2,112.7" fill="none" stroke="#8ff08a" stroke-width="1.0" stroke-linejoin="round" stroke-opacity="0.85"/><polygon points="527.2,112.7 550.4,112.6 549.2,102.5 526.7,102.6" fill="none" stroke="#8ff08a" stroke-width="1.0" stroke-linejoin="round" stroke-opacity="0.85"/></g>
<g><polygon points="500.2,179.6 500.3,168.6 499.3,116.2 499.1,126.5" fill="#353347"/><polygon points="500.2,179.6 521.4,179.5 521.9,126.4 499.1,126.5" fill="#8b7592"/><polygon points="499.1,126.5 521.9,126.4 521.5,116.1 499.3,116.2" fill="#8e7190"/><line x1="500.2" y1="179.6" x2="521.4" y2="179.5" stroke="rgba(150,230,160,0.22)" stroke-width="0.8"/><line x1="500.2" y1="179.6" x2="500.3" y2="168.6" stroke="rgba(150,230,160,0.22)" stroke-width="0.8"/><line x1="500.2" y1="179.6" x2="499.1" y2="126.5" stroke="rgba(150,230,160,0.22)" stroke-width="0.8"/><line x1="499.1" y1="126.5" x2="521.9" y2="126.4" stroke="rgba(150,230,160,0.22)" stroke-width="0.8"/><line x1="499.1" y1="126.5" x2="499.3" y2="116.2" stroke="rgba(150,230,160,0.22)" stroke-width="0.8"/><line x1="500.3" y1="168.6" x2="521.0" y2="168.5" stroke="rgba(150,230,160,0.22)" stroke-width="0.8"/><line x1="500.3" y1="168.6" x2="499.3" y2="116.2" stroke="rgba(150,230,160,0.22)" stroke-width="0.8"/><line x1="499.3" y1="116.2" x2="521.5" y2="116.1" stroke="rgba(150,230,160,0.22)" stroke-width="0.8"/><line x1="521.4" y1="179.5" x2="521.0" y2="168.5" stroke="rgba(150,230,160,0.22)" stroke-width="0.8"/><line x1="521.4" y1="179.5" x2="521.9" y2="126.4" stroke="rgba(150,230,160,0.22)" stroke-width="0.8"/><line x1="521.9" y1="126.4" x2="521.5" y2="116.1" stroke="rgba(150,230,160,0.22)" stroke-width="0.8"/><line x1="521.0" y1="168.5" x2="521.5" y2="116.1" stroke="rgba(150,230,160,0.22)" stroke-width="0.8"/><polygon points="500.2,179.6 500.3,168.6 499.3,116.2 499.1,126.5" fill="none" stroke="#8ff08a" stroke-width="1.0" stroke-linejoin="round" stroke-opacity="0.85"/><polygon points="500.2,179.6 521.4,179.5 521.9,126.4 499.1,126.5" fill="none" stroke="#8ff08a" stroke-width="1.0" stroke-linejoin="round" stroke-opacity="0.85"/><polygon points="499.1,126.5 521.9,126.4 521.5,116.1 499.3,116.2" fill="none" stroke="#8ff08a" stroke-width="1.0" stroke-linejoin="round" stroke-opacity="0.85"/></g>
<g><polygon points="494.9,194.0 495.3,182.2 494.0,136.2 493.6,147.4" fill="#333448"/><polygon points="473.0,194.1 494.9,194.0 493.6,147.4 470.2,147.5" fill="#867794"/><polygon points="470.2,147.5 493.6,147.4 494.0,136.2 471.3,136.3" fill="#887292"/><line x1="473.0" y1="194.1" x2="494.9" y2="194.0" stroke="rgba(150,230,160,0.22)" stroke-width="0.8"/><line x1="473.0" y1="194.1" x2="473.9" y2="182.3" stroke="rgba(150,230,160,0.22)" stroke-width="0.8"/><line x1="473.0" y1="194.1" x2="470.2" y2="147.5" stroke="rgba(150,230,160,0.22)" stroke-width="0.8"/><line x1="470.2" y1="147.5" x2="493.6" y2="147.4" stroke="rgba(150,230,160,0.22)" stroke-width="0.8"/><line x1="470.2" y1="147.5" x2="471.3" y2="136.3" stroke="rgba(150,230,160,0.22)" stroke-width="0.8"/><line x1="473.9" y1="182.3" x2="495.3" y2="182.2" stroke="rgba(150,230,160,0.22)" stroke-width="0.8"/><line x1="473.9" y1="182.3" x2="471.3" y2="136.3" stroke="rgba(150,230,160,0.22)" stroke-width="0.8"/><line x1="471.3" y1="136.3" x2="494.0" y2="136.2" stroke="rgba(150,230,160,0.22)" stroke-width="0.8"/><line x1="494.9" y1="194.0" x2="495.3" y2="182.2" stroke="rgba(150,230,160,0.22)" stroke-width="0.8"/><line x1="494.9" y1="194.0" x2="493.6" y2="147.4" stroke="rgba(150,230,160,0.22)" stroke-width="0.8"/><line x1="493.6" y1="147.4" x2="494.0" y2="136.2" stroke="rgba(150,230,160,0.22)" stroke-width="0.8"/><line x1="495.3" y1="182.2" x2="494.0" y2="136.2" stroke="rgba(150,230,160,0.22)" stroke-width="0.8"/><polygon points="494.9,194.0 495.3,182.2 494.0,136.2 493.6,147.4" fill="none" stroke="#8ff08a" stroke-width="1.0" stroke-linejoin="round" stroke-opacity="0.85"/><polygon points="473.0,194.1 494.9,194.0 493.6,147.4 470.2,147.5" fill="none" stroke="#8ff08a" stroke-width="1.0" stroke-linejoin="round" stroke-opacity="0.85"/><polygon points="470.2,147.5 493.6,147.4 494.0,136.2 471.3,136.3" fill="none" stroke="#8ff08a" stroke-width="1.0" stroke-linejoin="round" stroke-opacity="0.85"/></g>
<g><polygon points="410.8,209.8 413.5,197.2 404.1,131.3 400.9,143.1" fill="#31364a"/><polygon points="388.1,209.9 410.8,209.8 400.9,143.1 376.0,143.2" fill="#807996"/><polygon points="376.0,143.2 400.9,143.1 404.1,131.3 379.9,131.4" fill="#817494"/><line x1="388.1" y1="209.9" x2="410.8" y2="209.8" stroke="rgba(150,230,160,0.22)" stroke-width="0.8"/><line x1="388.1" y1="209.9" x2="391.3" y2="197.3" stroke="rgba(150,230,160,0.22)" stroke-width="0.8"/><line x1="388.1" y1="209.9" x2="376.0" y2="143.2" stroke="rgba(150,230,160,0.22)" stroke-width="0.8"/><line x1="376.0" y1="143.2" x2="400.9" y2="143.1" stroke="rgba(150,230,160,0.22)" stroke-width="0.8"/><line x1="376.0" y1="143.2" x2="379.9" y2="131.4" stroke="rgba(150,230,160,0.22)" stroke-width="0.8"/><line x1="391.3" y1="197.3" x2="413.5" y2="197.2" stroke="rgba(150,230,160,0.22)" stroke-width="0.8"/><line x1="391.3" y1="197.3" x2="379.9" y2="131.4" stroke="rgba(150,230,160,0.22)" stroke-width="0.8"/><line x1="379.9" y1="131.4" x2="404.1" y2="131.3" stroke="rgba(150,230,160,0.22)" stroke-width="0.8"/><line x1="410.8" y1="209.8" x2="413.5" y2="197.2" stroke="rgba(150,230,160,0.22)" stroke-width="0.8"/><line x1="410.8" y1="209.8" x2="400.9" y2="143.1" stroke="rgba(150,230,160,0.22)" stroke-width="0.8"/><line x1="400.9" y1="143.1" x2="404.1" y2="131.3" stroke="rgba(150,230,160,0.22)" stroke-width="0.8"/><line x1="413.5" y1="197.2" x2="404.1" y2="131.3" stroke="rgba(150,230,160,0.22)" stroke-width="0.8"/><polygon points="410.8,209.8 413.5,197.2 404.1,131.3 400.9,143.1" fill="none" stroke="#8ff08a" stroke-width="1.0" stroke-linejoin="round" stroke-opacity="0.85"/><polygon points="388.1,209.9 410.8,209.8 400.9,143.1 376.0,143.2" fill="none" stroke="#8ff08a" stroke-width="1.0" stroke-linejoin="round" stroke-opacity="0.85"/><polygon points="376.0,143.2 400.9,143.1 404.1,131.3 379.9,131.4" fill="none" stroke="#8ff08a" stroke-width="1.0" stroke-linejoin="round" stroke-opacity="0.85"/></g>
<g><polygon points="583.1,208.9 581.1,196.3 586.3,140.2 588.7,152.0" fill="#31364a"/><polygon points="583.1,208.9 605.8,208.8 613.2,151.9 588.7,152.0" fill="#807996"/><polygon points="588.7,152.0 613.2,151.9 610.1,140.1 586.3,140.2" fill="#817494"/><line x1="583.1" y1="208.9" x2="605.8" y2="208.8" stroke="rgba(150,230,160,0.22)" stroke-width="0.8"/><line x1="583.1" y1="208.9" x2="581.1" y2="196.3" stroke="rgba(150,230,160,0.22)" stroke-width="0.8"/><line x1="583.1" y1="208.9" x2="588.7" y2="152.0" stroke="rgba(150,230,160,0.22)" stroke-width="0.8"/><line x1="588.7" y1="152.0" x2="613.2" y2="151.9" stroke="rgba(150,230,160,0.22)" stroke-width="0.8"/><line x1="588.7" y1="152.0" x2="586.3" y2="140.2" stroke="rgba(150,230,160,0.22)" stroke-width="0.8"/><line x1="581.1" y1="196.3" x2="603.1" y2="196.2" stroke="rgba(150,230,160,0.22)" stroke-width="0.8"/><line x1="581.1" y1="196.3" x2="586.3" y2="140.2" stroke="rgba(150,230,160,0.22)" stroke-width="0.8"/><line x1="586.3" y1="140.2" x2="610.1" y2="140.1" stroke="rgba(150,230,160,0.22)" stroke-width="0.8"/><line x1="605.8" y1="208.8" x2="603.1" y2="196.2" stroke="rgba(150,230,160,0.22)" stroke-width="0.8"/><line x1="605.8" y1="208.8" x2="613.2" y2="151.9" stroke="rgba(150,230,160,0.22)" stroke-width="0.8"/><line x1="613.2" y1="151.9" x2="610.1" y2="140.1" stroke="rgba(150,230,160,0.22)" stroke-width="0.8"/><line x1="603.1" y1="196.2" x2="610.1" y2="140.1" stroke="rgba(150,230,160,0.22)" stroke-width="0.8"/><polygon points="583.1,208.9 581.1,196.3 586.3,140.2 588.7,152.0" fill="none" stroke="#8ff08a" stroke-width="1.0" stroke-linejoin="round" stroke-opacity="0.85"/><polygon points="583.1,208.9 605.8,208.8 613.2,151.9 588.7,152.0" fill="none" stroke="#8ff08a" stroke-width="1.0" stroke-linejoin="round" stroke-opacity="0.85"/><polygon points="588.7,152.0 613.2,151.9 610.1,140.1 586.3,140.2" fill="none" stroke="#8ff08a" stroke-width="1.0" stroke-linejoin="round" stroke-opacity="0.85"/></g>
<g><polygon points="555.3,209.0 554.0,196.5 556.3,155.8 557.7,168.0" fill="#31364a"/><polygon points="555.3,209.0 578.0,208.9 581.7,167.8 557.7,168.0" fill="#807996"/><polygon points="557.7,168.0 581.7,167.8 579.6,155.7 556.3,155.8" fill="#817494"/><line x1="555.3" y1="209.0" x2="578.0" y2="208.9" stroke="rgba(150,230,160,0.22)" stroke-width="0.8"/><line x1="555.3" y1="209.0" x2="554.0" y2="196.5" stroke="rgba(150,230,160,0.22)" stroke-width="0.8"/><line x1="555.3" y1="209.0" x2="557.7" y2="168.0" stroke="rgba(150,230,160,0.22)" stroke-width="0.8"/><line x1="557.7" y1="168.0" x2="581.7" y2="167.8" stroke="rgba(150,230,160,0.22)" stroke-width="0.8"/><line x1="557.7" y1="168.0" x2="556.3" y2="155.8" stroke="rgba(150,230,160,0.22)" stroke-width="0.8"/><line x1="554.0" y1="196.5" x2="576.1" y2="196.3" stroke="rgba(150,230,160,0.22)" stroke-width="0.8"/><line x1="554.0" y1="196.5" x2="556.3" y2="155.8" stroke="rgba(150,230,160,0.22)" stroke-width="0.8"/><line x1="556.3" y1="155.8" x2="579.6" y2="155.7" stroke="rgba(150,230,160,0.22)" stroke-width="0.8"/><line x1="578.0" y1="208.9" x2="576.1" y2="196.3" stroke="rgba(150,230,160,0.22)" stroke-width="0.8"/><line x1="578.0" y1="208.9" x2="581.7" y2="167.8" stroke="rgba(150,230,160,0.22)" stroke-width="0.8"/><line x1="581.7" y1="167.8" x2="579.6" y2="155.7" stroke="rgba(150,230,160,0.22)" stroke-width="0.8"/><line x1="576.1" y1="196.3" x2="579.6" y2="155.7" stroke="rgba(150,230,160,0.22)" stroke-width="0.8"/><polygon points="555.3,209.0 554.0,196.5 556.3,155.8 557.7,168.0" fill="none" stroke="#8ff08a" stroke-width="1.0" stroke-linejoin="round" stroke-opacity="0.85"/><polygon points="555.3,209.0 578.0,208.9 581.7,167.8 557.7,168.0" fill="none" stroke="#8ff08a" stroke-width="1.0" stroke-linejoin="round" stroke-opacity="0.85"/><polygon points="557.7,168.0 581.7,167.8 579.6,155.7 556.3,155.8" fill="none" stroke="#8ff08a" stroke-width="1.0" stroke-linejoin="round" stroke-opacity="0.85"/></g>
<g><polygon points="614.6,225.1 611.6,211.7 615.6,182.8 618.8,196.0" fill="#2f374b"/><polygon points="614.6,225.1 638.0,225.0 643.3,195.8 618.8,196.0" fill="#7b7b98"/><polygon points="618.8,196.0 643.3,195.8 639.3,182.7 615.6,182.8" fill="#7b7596"/><line x1="614.6" y1="225.1" x2="638.0" y2="225.0" stroke="rgba(150,230,160,0.22)" stroke-width="0.8"/><line x1="614.6" y1="225.1" x2="611.6" y2="211.7" stroke="rgba(150,230,160,0.22)" stroke-width="0.8"/><line x1="614.6" y1="225.1" x2="618.8" y2="196.0" stroke="rgba(150,230,160,0.22)" stroke-width="0.8"/><line x1="618.8" y1="196.0" x2="643.3" y2="195.8" stroke="rgba(150,230,160,0.22)" stroke-width="0.8"/><line x1="618.8" y1="196.0" x2="615.6" y2="182.8" stroke="rgba(150,230,160,0.22)" stroke-width="0.8"/><line x1="611.6" y1="211.7" x2="634.4" y2="211.6" stroke="rgba(150,230,160,0.22)" stroke-width="0.8"/><line x1="611.6" y1="211.7" x2="615.6" y2="182.8" stroke="rgba(150,230,160,0.22)" stroke-width="0.8"/><line x1="615.6" y1="182.8" x2="639.3" y2="182.7" stroke="rgba(150,230,160,0.22)" stroke-width="0.8"/><line x1="638.0" y1="225.0" x2="634.4" y2="211.6" stroke="rgba(150,230,160,0.22)" stroke-width="0.8"/><line x1="638.0" y1="225.0" x2="643.3" y2="195.8" stroke="rgba(150,230,160,0.22)" stroke-width="0.8"/><line x1="643.3" y1="195.8" x2="639.3" y2="182.7" stroke="rgba(150,230,160,0.22)" stroke-width="0.8"/><line x1="634.4" y1="211.6" x2="639.3" y2="182.7" stroke="rgba(150,230,160,0.22)" stroke-width="0.8"/><polygon points="614.6,225.1 611.6,211.7 615.6,182.8 618.8,196.0" fill="none" stroke="#8ff08a" stroke-width="1.0" stroke-linejoin="round" stroke-opacity="0.85"/><polygon points="614.6,225.1 638.0,225.0 643.3,195.8 618.8,196.0" fill="none" stroke="#8ff08a" stroke-width="1.0" stroke-linejoin="round" stroke-opacity="0.85"/><polygon points="618.8,196.0 643.3,195.8 639.3,182.7 615.6,182.8" fill="none" stroke="#8ff08a" stroke-width="1.0" stroke-linejoin="round" stroke-opacity="0.85"/></g>
<g><polygon points="494.0,225.8 494.4,212.3 492.9,162.5 492.5,175.4" fill="#2f374b"/><polygon points="470.5,225.9 494.0,225.8 492.5,175.4 467.2,175.6" fill="#7b7b98"/><polygon points="467.2,175.6 492.5,175.4 492.9,162.5 468.4,162.6" fill="#7b7596"/><line x1="470.5" y1="225.9" x2="494.0" y2="225.8" stroke="rgba(150,230,160,0.22)" stroke-width="0.8"/><line x1="470.5" y1="225.9" x2="471.6" y2="212.4" stroke="rgba(150,230,160,0.22)" stroke-width="0.8"/><line x1="470.5" y1="225.9" x2="467.2" y2="175.6" stroke="rgba(150,230,160,0.22)" stroke-width="0.8"/><line x1="467.2" y1="175.6" x2="492.5" y2="175.4" stroke="rgba(150,230,160,0.22)" stroke-width="0.8"/><line x1="467.2" y1="175.6" x2="468.4" y2="162.6" stroke="rgba(150,230,160,0.22)" stroke-width="0.8"/><line x1="471.6" y1="212.4" x2="494.4" y2="212.3" stroke="rgba(150,230,160,0.22)" stroke-width="0.8"/><line x1="471.6" y1="212.4" x2="468.4" y2="162.6" stroke="rgba(150,230,160,0.22)" stroke-width="0.8"/><line x1="468.4" y1="162.6" x2="492.9" y2="162.5" stroke="rgba(150,230,160,0.22)" stroke-width="0.8"/><line x1="494.0" y1="225.8" x2="494.4" y2="212.3" stroke="rgba(150,230,160,0.22)" stroke-width="0.8"/><line x1="494.0" y1="225.8" x2="492.5" y2="175.4" stroke="rgba(150,230,160,0.22)" stroke-width="0.8"/><line x1="492.5" y1="175.4" x2="492.9" y2="162.5" stroke="rgba(150,230,160,0.22)" stroke-width="0.8"/><line x1="494.4" y1="212.3" x2="492.9" y2="162.5" stroke="rgba(150,230,160,0.22)" stroke-width="0.8"/><polygon points="494.0,225.8 494.4,212.3 492.9,162.5 492.5,175.4" fill="none" stroke="#8ff08a" stroke-width="1.0" stroke-linejoin="round" stroke-opacity="0.85"/><polygon points="470.5,225.9 494.0,225.8 492.5,175.4 467.2,175.6" fill="none" stroke="#8ff08a" stroke-width="1.0" stroke-linejoin="round" stroke-opacity="0.85"/><polygon points="467.2,175.6 492.5,175.4 492.9,162.5 468.4,162.6" fill="none" stroke="#8ff08a" stroke-width="1.0" stroke-linejoin="round" stroke-opacity="0.85"/></g>
<g><polygon points="403.7,243.9 406.7,229.4 401.1,194.1 397.7,208.2" fill="#2d384c"/><polygon points="379.3,244.1 403.7,243.9 397.7,208.2 372.0,208.4" fill="#767d9a"/><polygon points="372.0,208.4 397.7,208.2 401.1,194.1 376.2,194.2" fill="#757698"/><line x1="379.3" y1="244.1" x2="403.7" y2="243.9" stroke="rgba(150,230,160,0.22)" stroke-width="0.8"/><line x1="379.3" y1="244.1" x2="383.0" y2="229.6" stroke="rgba(150,230,160,0.22)" stroke-width="0.8"/><line x1="379.3" y1="244.1" x2="372.0" y2="208.4" stroke="rgba(150,230,160,0.22)" stroke-width="0.8"/><line x1="372.0" y1="208.4" x2="397.7" y2="208.2" stroke="rgba(150,230,160,0.22)" stroke-width="0.8"/><line x1="372.0" y1="208.4" x2="376.2" y2="194.2" stroke="rgba(150,230,160,0.22)" stroke-width="0.8"/><line x1="383.0" y1="229.6" x2="406.7" y2="229.4" stroke="rgba(150,230,160,0.22)" stroke-width="0.8"/><line x1="383.0" y1="229.6" x2="376.2" y2="194.2" stroke="rgba(150,230,160,0.22)" stroke-width="0.8"/><line x1="376.2" y1="194.2" x2="401.1" y2="194.1" stroke="rgba(150,230,160,0.22)" stroke-width="0.8"/><line x1="403.7" y1="243.9" x2="406.7" y2="229.4" stroke="rgba(150,230,160,0.22)" stroke-width="0.8"/><line x1="403.7" y1="243.9" x2="397.7" y2="208.2" stroke="rgba(150,230,160,0.22)" stroke-width="0.8"/><line x1="397.7" y1="208.2" x2="401.1" y2="194.1" stroke="rgba(150,230,160,0.22)" stroke-width="0.8"/><line x1="406.7" y1="229.4" x2="401.1" y2="194.1" stroke="rgba(150,230,160,0.22)" stroke-width="0.8"/><polygon points="403.7,243.9 406.7,229.4 401.1,194.1 397.7,208.2" fill="none" stroke="#8ff08a" stroke-width="1.0" stroke-linejoin="round" stroke-opacity="0.85"/><polygon points="379.3,244.1 403.7,243.9 397.7,208.2 372.0,208.4" fill="none" stroke="#8ff08a" stroke-width="1.0" stroke-linejoin="round" stroke-opacity="0.85"/><polygon points="372.0,208.4 397.7,208.2 401.1,194.1 376.2,194.2" fill="none" stroke="#8ff08a" stroke-width="1.0" stroke-linejoin="round" stroke-opacity="0.85"/></g>
<g><polygon points="433.7,243.8 435.8,229.3 433.0,204.9 430.7,219.1" fill="#2d384c"/><polygon points="409.3,243.9 433.7,243.8 430.7,219.1 405.3,219.3" fill="#767d9a"/><polygon points="405.3,219.3 430.7,219.1 433.0,204.9 408.4,205.0" fill="#757698"/><line x1="409.3" y1="243.9" x2="433.7" y2="243.8" stroke="rgba(150,230,160,0.22)" stroke-width="0.8"/><line x1="409.3" y1="243.9" x2="412.1" y2="229.4" stroke="rgba(150,230,160,0.22)" stroke-width="0.8"/><line x1="409.3" y1="243.9" x2="405.3" y2="219.3" stroke="rgba(150,230,160,0.22)" stroke-width="0.8"/><line x1="405.3" y1="219.3" x2="430.7" y2="219.1" stroke="rgba(150,230,160,0.22)" stroke-width="0.8"/><line x1="405.3" y1="219.3" x2="408.4" y2="205.0" stroke="rgba(150,230,160,0.22)" stroke-width="0.8"/><line x1="412.1" y1="229.4" x2="435.8" y2="229.3" stroke="rgba(150,230,160,0.22)" stroke-width="0.8"/><line x1="412.1" y1="229.4" x2="408.4" y2="205.0" stroke="rgba(150,230,160,0.22)" stroke-width="0.8"/><line x1="408.4" y1="205.0" x2="433.0" y2="204.9" stroke="rgba(150,230,160,0.22)" stroke-width="0.8"/><line x1="433.7" y1="243.8" x2="435.8" y2="229.3" stroke="rgba(150,230,160,0.22)" stroke-width="0.8"/><line x1="433.7" y1="243.8" x2="430.7" y2="219.1" stroke="rgba(150,230,160,0.22)" stroke-width="0.8"/><line x1="430.7" y1="219.1" x2="433.0" y2="204.9" stroke="rgba(150,230,160,0.22)" stroke-width="0.8"/><line x1="435.8" y1="229.3" x2="433.0" y2="204.9" stroke="rgba(150,230,160,0.22)" stroke-width="0.8"/><polygon points="433.7,243.8 435.8,229.3 433.0,204.9 430.7,219.1" fill="none" stroke="#8ff08a" stroke-width="1.0" stroke-linejoin="round" stroke-opacity="0.85"/><polygon points="409.3,243.9 433.7,243.8 430.7,219.1 405.3,219.3" fill="none" stroke="#8ff08a" stroke-width="1.0" stroke-linejoin="round" stroke-opacity="0.85"/><polygon points="405.3,219.3 430.7,219.1 433.0,204.9 408.4,205.0" fill="none" stroke="#8ff08a" stroke-width="1.0" stroke-linejoin="round" stroke-opacity="0.85"/></g>
<g><polygon points="558.8,243.1 557.4,228.6 559.4,195.9 561.0,210.1" fill="#2d384c"/><polygon points="558.8,243.1 583.2,242.9 586.6,209.9 561.0,210.1" fill="#767d9a"/><polygon points="561.0,210.1 586.6,209.9 584.1,195.8 559.4,195.9" fill="#757698"/><line x1="558.8" y1="243.1" x2="583.2" y2="242.9" stroke="rgba(150,230,160,0.22)" stroke-width="0.8"/><line x1="558.8" y1="243.1" x2="557.4" y2="228.6" stroke="rgba(150,230,160,0.22)" stroke-width="0.8"/><line x1="558.8" y1="243.1" x2="561.0" y2="210.1" stroke="rgba(150,230,160,0.22)" stroke-width="0.8"/><line x1="561.0" y1="210.1" x2="586.6" y2="209.9" stroke="rgba(150,230,160,0.22)" stroke-width="0.8"/><line x1="561.0" y1="210.1" x2="559.4" y2="195.9" stroke="rgba(150,230,160,0.22)" stroke-width="0.8"/><line x1="557.4" y1="228.6" x2="581.0" y2="228.5" stroke="rgba(150,230,160,0.22)" stroke-width="0.8"/><line x1="557.4" y1="228.6" x2="559.4" y2="195.9" stroke="rgba(150,230,160,0.22)" stroke-width="0.8"/><line x1="559.4" y1="195.9" x2="584.1" y2="195.8" stroke="rgba(150,230,160,0.22)" stroke-width="0.8"/><line x1="583.2" y1="242.9" x2="581.0" y2="228.5" stroke="rgba(150,230,160,0.22)" stroke-width="0.8"/><line x1="583.2" y1="242.9" x2="586.6" y2="209.9" stroke="rgba(150,230,160,0.22)" stroke-width="0.8"/><line x1="586.6" y1="209.9" x2="584.1" y2="195.8" stroke="rgba(150,230,160,0.22)" stroke-width="0.8"/><line x1="581.0" y1="228.5" x2="584.1" y2="195.8" stroke="rgba(150,230,160,0.22)" stroke-width="0.8"/><polygon points="558.8,243.1 557.4,228.6 559.4,195.9 561.0,210.1" fill="none" stroke="#8ff08a" stroke-width="1.0" stroke-linejoin="round" stroke-opacity="0.85"/><polygon points="558.8,243.1 583.2,242.9 586.6,209.9 561.0,210.1" fill="none" stroke="#8ff08a" stroke-width="1.0" stroke-linejoin="round" stroke-opacity="0.85"/><polygon points="561.0,210.1 586.6,209.9 584.1,195.8 559.4,195.9" fill="none" stroke="#8ff08a" stroke-width="1.0" stroke-linejoin="round" stroke-opacity="0.85"/></g>
<g><polygon points="463.6,243.6 464.9,229.1 462.9,202.7 461.6,216.9" fill="#2d384c"/><polygon points="439.2,243.7 463.6,243.6 461.6,216.9 436.2,217.1" fill="#767d9a"/><polygon points="436.2,217.1 461.6,216.9 462.9,202.7 438.3,202.8" fill="#757698"/><line x1="439.2" y1="243.7" x2="463.6" y2="243.6" stroke="rgba(150,230,160,0.22)" stroke-width="0.8"/><line x1="439.2" y1="243.7" x2="441.2" y2="229.2" stroke="rgba(150,230,160,0.22)" stroke-width="0.8"/><line x1="439.2" y1="243.7" x2="436.2" y2="217.1" stroke="rgba(150,230,160,0.22)" stroke-width="0.8"/><line x1="436.2" y1="217.1" x2="461.6" y2="216.9" stroke="rgba(150,230,160,0.22)" stroke-width="0.8"/><line x1="436.2" y1="217.1" x2="438.3" y2="202.8" stroke="rgba(150,230,160,0.22)" stroke-width="0.8"/><line x1="441.2" y1="229.2" x2="464.9" y2="229.1" stroke="rgba(150,230,160,0.22)" stroke-width="0.8"/><line x1="441.2" y1="229.2" x2="438.3" y2="202.8" stroke="rgba(150,230,160,0.22)" stroke-width="0.8"/><line x1="438.3" y1="202.8" x2="462.9" y2="202.7" stroke="rgba(150,230,160,0.22)" stroke-width="0.8"/><line x1="463.6" y1="243.6" x2="464.9" y2="229.1" stroke="rgba(150,230,160,0.22)" stroke-width="0.8"/><line x1="463.6" y1="243.6" x2="461.6" y2="216.9" stroke="rgba(150,230,160,0.22)" stroke-width="0.8"/><line x1="461.6" y1="216.9" x2="462.9" y2="202.7" stroke="rgba(150,230,160,0.22)" stroke-width="0.8"/><line x1="464.9" y1="229.1" x2="462.9" y2="202.7" stroke="rgba(150,230,160,0.22)" stroke-width="0.8"/><polygon points="463.6,243.6 464.9,229.1 462.9,202.7 461.6,216.9" fill="none" stroke="#8ff08a" stroke-width="1.0" stroke-linejoin="round" stroke-opacity="0.85"/><polygon points="439.2,243.7 463.6,243.6 461.6,216.9 436.2,217.1" fill="none" stroke="#8ff08a" stroke-width="1.0" stroke-linejoin="round" stroke-opacity="0.85"/><polygon points="436.2,217.1 461.6,216.9 462.9,202.7 438.3,202.8" fill="none" stroke="#8ff08a" stroke-width="1.0" stroke-linejoin="round" stroke-opacity="0.85"/></g>
<g><polygon points="529.0,243.2 528.3,228.8 529.1,192.5 529.7,206.6" fill="#2d384c"/><polygon points="529.0,243.2 553.3,243.1 555.4,206.4 529.7,206.6" fill="#767d9a"/><polygon points="529.7,206.6 555.4,206.4 554.0,192.3 529.1,192.5" fill="#757698"/><line x1="529.0" y1="243.2" x2="553.3" y2="243.1" stroke="rgba(150,230,160,0.22)" stroke-width="0.8"/><line x1="529.0" y1="243.2" x2="528.3" y2="228.8" stroke="rgba(150,230,160,0.22)" stroke-width="0.8"/><line x1="529.0" y1="243.2" x2="529.7" y2="206.6" stroke="rgba(150,230,160,0.22)" stroke-width="0.8"/><line x1="529.7" y1="206.6" x2="555.4" y2="206.4" stroke="rgba(150,230,160,0.22)" stroke-width="0.8"/><line x1="529.7" y1="206.6" x2="529.1" y2="192.5" stroke="rgba(150,230,160,0.22)" stroke-width="0.8"/><line x1="528.3" y1="228.8" x2="552.0" y2="228.6" stroke="rgba(150,230,160,0.22)" stroke-width="0.8"/><line x1="528.3" y1="228.8" x2="529.1" y2="192.5" stroke="rgba(150,230,160,0.22)" stroke-width="0.8"/><line x1="529.1" y1="192.5" x2="554.0" y2="192.3" stroke="rgba(150,230,160,0.22)" stroke-width="0.8"/><line x1="553.3" y1="243.1" x2="552.0" y2="228.6" stroke="rgba(150,230,160,0.22)" stroke-width="0.8"/><line x1="553.3" y1="243.1" x2="555.4" y2="206.4" stroke="rgba(150,230,160,0.22)" stroke-width="0.8"/><line x1="555.4" y1="206.4" x2="554.0" y2="192.3" stroke="rgba(150,230,160,0.22)" stroke-width="0.8"/><line x1="552.0" y1="228.6" x2="554.0" y2="192.3" stroke="rgba(150,230,160,0.22)" stroke-width="0.8"/><polygon points="529.0,243.2 528.3,228.8 529.1,192.5 529.7,206.6" fill="none" stroke="#8ff08a" stroke-width="1.0" stroke-linejoin="round" stroke-opacity="0.85"/><polygon points="529.0,243.2 553.3,243.1 555.4,206.4 529.7,206.6" fill="none" stroke="#8ff08a" stroke-width="1.0" stroke-linejoin="round" stroke-opacity="0.85"/><polygon points="529.7,206.6 555.4,206.4 554.0,192.3 529.1,192.5" fill="none" stroke="#8ff08a" stroke-width="1.0" stroke-linejoin="round" stroke-opacity="0.85"/></g>
<g><polygon points="659.5,281.9 654.8,265.1 661.3,234.9 666.5,251.5" fill="#293b4f"/><polygon points="659.5,281.9 685.7,281.7 694.0,251.3 666.5,251.5" fill="#6b819e"/><polygon points="666.5,251.5 694.0,251.3 687.9,234.8 661.3,234.9" fill="#68799c"/><line x1="659.5" y1="281.9" x2="685.7" y2="281.7" stroke="rgba(150,230,160,0.22)" stroke-width="0.8"/><line x1="659.5" y1="281.9" x2="654.8" y2="265.1" stroke="rgba(150,230,160,0.22)" stroke-width="0.8"/><line x1="659.5" y1="281.9" x2="666.5" y2="251.5" stroke="rgba(150,230,160,0.22)" stroke-width="0.8"/><line x1="666.5" y1="251.5" x2="694.0" y2="251.3" stroke="rgba(150,230,160,0.22)" stroke-width="0.8"/><line x1="666.5" y1="251.5" x2="661.3" y2="234.9" stroke="rgba(150,230,160,0.22)" stroke-width="0.8"/><line x1="654.8" y1="265.1" x2="680.1" y2="265.0" stroke="rgba(150,230,160,0.22)" stroke-width="0.8"/><line x1="654.8" y1="265.1" x2="661.3" y2="234.9" stroke="rgba(150,230,160,0.22)" stroke-width="0.8"/><line x1="661.3" y1="234.9" x2="687.9" y2="234.8" stroke="rgba(150,230,160,0.22)" stroke-width="0.8"/><line x1="685.7" y1="281.7" x2="680.1" y2="265.0" stroke="rgba(150,230,160,0.22)" stroke-width="0.8"/><line x1="685.7" y1="281.7" x2="694.0" y2="251.3" stroke="rgba(150,230,160,0.22)" stroke-width="0.8"/><line x1="694.0" y1="251.3" x2="687.9" y2="234.8" stroke="rgba(150,230,160,0.22)" stroke-width="0.8"/><line x1="680.1" y1="265.0" x2="687.9" y2="234.8" stroke="rgba(150,230,160,0.22)" stroke-width="0.8"/><polygon points="659.5,281.9 654.8,265.1 661.3,234.9 666.5,251.5" fill="none" stroke="#8ff08a" stroke-width="1.0" stroke-linejoin="round" stroke-opacity="0.85"/><polygon points="659.5,281.9 685.7,281.7 694.0,251.3 666.5,251.5" fill="none" stroke="#8ff08a" stroke-width="1.0" stroke-linejoin="round" stroke-opacity="0.85"/><polygon points="666.5,251.5 694.0,251.3 687.9,234.8 661.3,234.9" fill="none" stroke="#8ff08a" stroke-width="1.0" stroke-linejoin="round" stroke-opacity="0.85"/></g>
<g><polygon points="395.5,283.5 399.0,266.7 386.9,199.7 382.6,216.0" fill="#293b4f"/><polygon points="369.1,283.7 395.5,283.5 382.6,216.0 353.3,216.2" fill="#6b819e"/><polygon points="353.3,216.2 382.6,216.0 386.9,199.7 358.7,199.9" fill="#68799c"/><line x1="369.1" y1="283.7" x2="395.5" y2="283.5" stroke="rgba(150,230,160,0.22)" stroke-width="0.8"/><line x1="369.1" y1="283.7" x2="373.4" y2="266.8" stroke="rgba(150,230,160,0.22)" stroke-width="0.8"/><line x1="369.1" y1="283.7" x2="353.3" y2="216.2" stroke="rgba(150,230,160,0.22)" stroke-width="0.8"/><line x1="353.3" y1="216.2" x2="382.6" y2="216.0" stroke="rgba(150,230,160,0.22)" stroke-width="0.8"/><line x1="353.3" y1="216.2" x2="358.7" y2="199.9" stroke="rgba(150,230,160,0.22)" stroke-width="0.8"/><line x1="373.4" y1="266.8" x2="399.0" y2="266.7" stroke="rgba(150,230,160,0.22)" stroke-width="0.8"/><line x1="373.4" y1="266.8" x2="358.7" y2="199.9" stroke="rgba(150,230,160,0.22)" stroke-width="0.8"/><line x1="358.7" y1="199.9" x2="386.9" y2="199.7" stroke="rgba(150,230,160,0.22)" stroke-width="0.8"/><line x1="395.5" y1="283.5" x2="399.0" y2="266.7" stroke="rgba(150,230,160,0.22)" stroke-width="0.8"/><line x1="395.5" y1="283.5" x2="382.6" y2="216.0" stroke="rgba(150,230,160,0.22)" stroke-width="0.8"/><line x1="382.6" y1="216.0" x2="386.9" y2="199.7" stroke="rgba(150,230,160,0.22)" stroke-width="0.8"/><line x1="399.0" y1="266.7" x2="386.9" y2="199.7" stroke="rgba(150,230,160,0.22)" stroke-width="0.8"/><polygon points="395.5,283.5 399.0,266.7 386.9,199.7 382.6,216.0" fill="none" stroke="#8ff08a" stroke-width="1.0" stroke-linejoin="round" stroke-opacity="0.85"/><polygon points="369.1,283.7 395.5,283.5 382.6,216.0 353.3,216.2" fill="none" stroke="#8ff08a" stroke-width="1.0" stroke-linejoin="round" stroke-opacity="0.85"/><polygon points="353.3,216.2 382.6,216.0 386.9,199.7 358.7,199.9" fill="none" stroke="#8ff08a" stroke-width="1.0" stroke-linejoin="round" stroke-opacity="0.85"/></g>
<g><polygon points="427.8,283.3 430.3,266.5 427.5,245.5 424.9,262.2" fill="#293b4f"/><polygon points="401.4,283.5 427.8,283.3 424.9,262.2 397.6,262.4" fill="#6b819e"/><polygon points="397.6,262.4 424.9,262.2 427.5,245.5 401.2,245.6" fill="#68799c"/><line x1="401.4" y1="283.5" x2="427.8" y2="283.3" stroke="rgba(150,230,160,0.22)" stroke-width="0.8"/><line x1="401.4" y1="283.5" x2="404.8" y2="266.6" stroke="rgba(150,230,160,0.22)" stroke-width="0.8"/><line x1="401.4" y1="283.5" x2="397.6" y2="262.4" stroke="rgba(150,230,160,0.22)" stroke-width="0.8"/><line x1="397.6" y1="262.4" x2="424.9" y2="262.2" stroke="rgba(150,230,160,0.22)" stroke-width="0.8"/><line x1="397.6" y1="262.4" x2="401.2" y2="245.6" stroke="rgba(150,230,160,0.22)" stroke-width="0.8"/><line x1="404.8" y1="266.6" x2="430.3" y2="266.5" stroke="rgba(150,230,160,0.22)" stroke-width="0.8"/><line x1="404.8" y1="266.6" x2="401.2" y2="245.6" stroke="rgba(150,230,160,0.22)" stroke-width="0.8"/><line x1="401.2" y1="245.6" x2="427.5" y2="245.5" stroke="rgba(150,230,160,0.22)" stroke-width="0.8"/><line x1="427.8" y1="283.3" x2="430.3" y2="266.5" stroke="rgba(150,230,160,0.22)" stroke-width="0.8"/><line x1="427.8" y1="283.3" x2="424.9" y2="262.2" stroke="rgba(150,230,160,0.22)" stroke-width="0.8"/><line x1="424.9" y1="262.2" x2="427.5" y2="245.5" stroke="rgba(150,230,160,0.22)" stroke-width="0.8"/><line x1="430.3" y1="266.5" x2="427.5" y2="245.5" stroke="rgba(150,230,160,0.22)" stroke-width="0.8"/><polygon points="427.8,283.3 430.3,266.5 427.5,245.5 424.9,262.2" fill="none" stroke="#8ff08a" stroke-width="1.0" stroke-linejoin="round" stroke-opacity="0.85"/><polygon points="401.4,283.5 427.8,283.3 424.9,262.2 397.6,262.4" fill="none" stroke="#8ff08a" stroke-width="1.0" stroke-linejoin="round" stroke-opacity="0.85"/><polygon points="397.6,262.4 424.9,262.2 427.5,245.5 401.2,245.6" fill="none" stroke="#8ff08a" stroke-width="1.0" stroke-linejoin="round" stroke-opacity="0.85"/></g>
<g><polygon points="492.4,282.9 492.9,266.1 490.8,206.3 490.3,222.6" fill="#293b4f"/><polygon points="466.1,283.1 492.4,282.9 490.3,222.6 461.4,222.8" fill="#6b819e"/><polygon points="461.4,222.8 490.3,222.6 490.8,206.3 463.0,206.4" fill="#68799c"/><line x1="466.1" y1="283.1" x2="492.4" y2="282.9" stroke="rgba(150,230,160,0.22)" stroke-width="0.8"/><line x1="466.1" y1="283.1" x2="467.4" y2="266.2" stroke="rgba(150,230,160,0.22)" stroke-width="0.8"/><line x1="466.1" y1="283.1" x2="461.4" y2="222.8" stroke="rgba(150,230,160,0.22)" stroke-width="0.8"/><line x1="461.4" y1="222.8" x2="490.3" y2="222.6" stroke="rgba(150,230,160,0.22)" stroke-width="0.8"/><line x1="461.4" y1="222.8" x2="463.0" y2="206.4" stroke="rgba(150,230,160,0.22)" stroke-width="0.8"/><line x1="467.4" y1="266.2" x2="492.9" y2="266.1" stroke="rgba(150,230,160,0.22)" stroke-width="0.8"/><line x1="467.4" y1="266.2" x2="463.0" y2="206.4" stroke="rgba(150,230,160,0.22)" stroke-width="0.8"/><line x1="463.0" y1="206.4" x2="490.8" y2="206.3" stroke="rgba(150,230,160,0.22)" stroke-width="0.8"/><line x1="492.4" y1="282.9" x2="492.9" y2="266.1" stroke="rgba(150,230,160,0.22)" stroke-width="0.8"/><line x1="492.4" y1="282.9" x2="490.3" y2="222.6" stroke="rgba(150,230,160,0.22)" stroke-width="0.8"/><line x1="490.3" y1="222.6" x2="490.8" y2="206.3" stroke="rgba(150,230,160,0.22)" stroke-width="0.8"/><line x1="492.9" y1="266.1" x2="490.8" y2="206.3" stroke="rgba(150,230,160,0.22)" stroke-width="0.8"/><polygon points="492.4,282.9 492.9,266.1 490.8,206.3 490.3,222.6" fill="none" stroke="#8ff08a" stroke-width="1.0" stroke-linejoin="round" stroke-opacity="0.85"/><polygon points="466.1,283.1 492.4,282.9 490.3,222.6 461.4,222.8" fill="none" stroke="#8ff08a" stroke-width="1.0" stroke-linejoin="round" stroke-opacity="0.85"/><polygon points="461.4,222.8 490.3,222.6 490.8,206.3 463.0,206.4" fill="none" stroke="#8ff08a" stroke-width="1.0" stroke-linejoin="round" stroke-opacity="0.85"/></g>
<g><polygon points="498.0,305.1 498.3,286.9 496.6,223.9 496.2,241.7" fill="#273c50"/><polygon points="498.0,305.1 525.4,304.9 526.5,241.5 496.2,241.7" fill="#6583a1"/><polygon points="496.2,241.7 526.5,241.5 525.8,223.7 496.6,223.9" fill="#617b9d"/><line x1="498.0" y1="305.1" x2="525.4" y2="304.9" stroke="rgba(150,230,160,0.22)" stroke-width="0.8"/><line x1="498.0" y1="305.1" x2="498.3" y2="286.9" stroke="rgba(150,230,160,0.22)" stroke-width="0.8"/><line x1="498.0" y1="305.1" x2="496.2" y2="241.7" stroke="rgba(150,230,160,0.22)" stroke-width="0.8"/><line x1="496.2" y1="241.7" x2="526.5" y2="241.5" stroke="rgba(150,230,160,0.22)" stroke-width="0.8"/><line x1="496.2" y1="241.7" x2="496.6" y2="223.9" stroke="rgba(150,230,160,0.22)" stroke-width="0.8"/><line x1="498.3" y1="286.9" x2="524.8" y2="286.7" stroke="rgba(150,230,160,0.22)" stroke-width="0.8"/><line x1="498.3" y1="286.9" x2="496.6" y2="223.9" stroke="rgba(150,230,160,0.22)" stroke-width="0.8"/><line x1="496.6" y1="223.9" x2="525.8" y2="223.7" stroke="rgba(150,230,160,0.22)" stroke-width="0.8"/><line x1="525.4" y1="304.9" x2="524.8" y2="286.7" stroke="rgba(150,230,160,0.22)" stroke-width="0.8"/><line x1="525.4" y1="304.9" x2="526.5" y2="241.5" stroke="rgba(150,230,160,0.22)" stroke-width="0.8"/><line x1="526.5" y1="241.5" x2="525.8" y2="223.7" stroke="rgba(150,230,160,0.22)" stroke-width="0.8"/><line x1="524.8" y1="286.7" x2="525.8" y2="223.7" stroke="rgba(150,230,160,0.22)" stroke-width="0.8"/><polygon points="498.0,305.1 498.3,286.9 496.6,223.9 496.2,241.7" fill="none" stroke="#8ff08a" stroke-width="1.0" stroke-linejoin="round" stroke-opacity="0.85"/><polygon points="498.0,305.1 525.4,304.9 526.5,241.5 496.2,241.7" fill="none" stroke="#8ff08a" stroke-width="1.0" stroke-linejoin="round" stroke-opacity="0.85"/><polygon points="496.2,241.7 526.5,241.5 525.8,223.7 496.6,223.9" fill="none" stroke="#8ff08a" stroke-width="1.0" stroke-linejoin="round" stroke-opacity="0.85"/></g>
<g><polygon points="637.7,328.3 633.2,308.5 640.5,271.8 645.4,291.4" fill="#253d51"/><polygon points="637.7,328.3 666.1,328.1 675.7,291.2 645.4,291.4" fill="#6085a3"/><polygon points="645.4,291.4 675.7,291.2 669.7,271.6 640.5,271.8" fill="#5b7c9f"/><line x1="637.7" y1="328.3" x2="666.1" y2="328.1" stroke="rgba(150,230,160,0.22)" stroke-width="0.8"/><line x1="637.7" y1="328.3" x2="633.2" y2="308.5" stroke="rgba(150,230,160,0.22)" stroke-width="0.8"/><line x1="637.7" y1="328.3" x2="645.4" y2="291.4" stroke="rgba(150,230,160,0.22)" stroke-width="0.8"/><line x1="645.4" y1="291.4" x2="675.7" y2="291.2" stroke="rgba(150,230,160,0.22)" stroke-width="0.8"/><line x1="645.4" y1="291.4" x2="640.5" y2="271.8" stroke="rgba(150,230,160,0.22)" stroke-width="0.8"/><line x1="633.2" y1="308.5" x2="660.8" y2="308.3" stroke="rgba(150,230,160,0.22)" stroke-width="0.8"/><line x1="633.2" y1="308.5" x2="640.5" y2="271.8" stroke="rgba(150,230,160,0.22)" stroke-width="0.8"/><line x1="640.5" y1="271.8" x2="669.7" y2="271.6" stroke="rgba(150,230,160,0.22)" stroke-width="0.8"/><line x1="666.1" y1="328.1" x2="660.8" y2="308.3" stroke="rgba(150,230,160,0.22)" stroke-width="0.8"/><line x1="666.1" y1="328.1" x2="675.7" y2="291.2" stroke="rgba(150,230,160,0.22)" stroke-width="0.8"/><line x1="675.7" y1="291.2" x2="669.7" y2="271.6" stroke="rgba(150,230,160,0.22)" stroke-width="0.8"/><line x1="660.8" y1="308.3" x2="669.7" y2="271.6" stroke="rgba(150,230,160,0.22)" stroke-width="0.8"/><polygon points="637.7,328.3 633.2,308.5 640.5,271.8 645.4,291.4" fill="none" stroke="#8ff08a" stroke-width="1.0" stroke-linejoin="round" stroke-opacity="0.85"/><polygon points="637.7,328.3 666.1,328.1 675.7,291.2 645.4,291.4" fill="none" stroke="#8ff08a" stroke-width="1.0" stroke-linejoin="round" stroke-opacity="0.85"/><polygon points="645.4,291.4 675.7,291.2 669.7,271.6 640.5,271.8" fill="none" stroke="#8ff08a" stroke-width="1.0" stroke-linejoin="round" stroke-opacity="0.85"/></g>
<g><polygon points="456.0,329.5 457.8,309.6 452.0,249.2 449.9,268.7" fill="#253d51"/><polygon points="427.4,329.7 456.0,329.5 449.9,268.7 418.3,268.9" fill="#6085a3"/><polygon points="418.3,268.9 449.9,268.7 452.0,249.2 421.6,249.3" fill="#5b7c9f"/><line x1="427.4" y1="329.7" x2="456.0" y2="329.5" stroke="rgba(150,230,160,0.22)" stroke-width="0.8"/><line x1="427.4" y1="329.7" x2="430.1" y2="309.8" stroke="rgba(150,230,160,0.22)" stroke-width="0.8"/><line x1="427.4" y1="329.7" x2="418.3" y2="268.9" stroke="rgba(150,230,160,0.22)" stroke-width="0.8"/><line x1="418.3" y1="268.9" x2="449.9" y2="268.7" stroke="rgba(150,230,160,0.22)" stroke-width="0.8"/><line x1="418.3" y1="268.9" x2="421.6" y2="249.3" stroke="rgba(150,230,160,0.22)" stroke-width="0.8"/><line x1="430.1" y1="309.8" x2="457.8" y2="309.6" stroke="rgba(150,230,160,0.22)" stroke-width="0.8"/><line x1="430.1" y1="309.8" x2="421.6" y2="249.3" stroke="rgba(150,230,160,0.22)" stroke-width="0.8"/><line x1="421.6" y1="249.3" x2="452.0" y2="249.2" stroke="rgba(150,230,160,0.22)" stroke-width="0.8"/><line x1="456.0" y1="329.5" x2="457.8" y2="309.6" stroke="rgba(150,230,160,0.22)" stroke-width="0.8"/><line x1="456.0" y1="329.5" x2="449.9" y2="268.7" stroke="rgba(150,230,160,0.22)" stroke-width="0.8"/><line x1="449.9" y1="268.7" x2="452.0" y2="249.2" stroke="rgba(150,230,160,0.22)" stroke-width="0.8"/><line x1="457.8" y1="309.6" x2="452.0" y2="249.2" stroke="rgba(150,230,160,0.22)" stroke-width="0.8"/><polygon points="456.0,329.5 457.8,309.6 452.0,249.2 449.9,268.7" fill="none" stroke="#8ff08a" stroke-width="1.0" stroke-linejoin="round" stroke-opacity="0.85"/><polygon points="427.4,329.7 456.0,329.5 449.9,268.7 418.3,268.9" fill="none" stroke="#8ff08a" stroke-width="1.0" stroke-linejoin="round" stroke-opacity="0.85"/><polygon points="418.3,268.9 449.9,268.7 452.0,249.2 421.6,249.3" fill="none" stroke="#8ff08a" stroke-width="1.0" stroke-linejoin="round" stroke-opacity="0.85"/></g>
<g><polygon points="680.0,354.2 673.9,332.7 689.8,275.2 697.1,296.6" fill="#243e52"/><polygon points="680.0,354.2 709.8,354.0 730.0,296.4 697.1,296.6" fill="#5a88a5"/><polygon points="697.1,296.6 730.0,296.4 721.3,275.0 689.8,275.2" fill="#547ea1"/><line x1="680.0" y1="354.2" x2="709.8" y2="354.0" stroke="rgba(150,230,160,0.22)" stroke-width="0.8"/><line x1="680.0" y1="354.2" x2="673.9" y2="332.7" stroke="rgba(150,230,160,0.22)" stroke-width="0.8"/><line x1="680.0" y1="354.2" x2="697.1" y2="296.6" stroke="rgba(150,230,160,0.22)" stroke-width="0.8"/><line x1="697.1" y1="296.6" x2="730.0" y2="296.4" stroke="rgba(150,230,160,0.22)" stroke-width="0.8"/><line x1="697.1" y1="296.6" x2="689.8" y2="275.2" stroke="rgba(150,230,160,0.22)" stroke-width="0.8"/><line x1="673.9" y1="332.7" x2="702.6" y2="332.5" stroke="rgba(150,230,160,0.22)" stroke-width="0.8"/><line x1="673.9" y1="332.7" x2="689.8" y2="275.2" stroke="rgba(150,230,160,0.22)" stroke-width="0.8"/><line x1="689.8" y1="275.2" x2="721.3" y2="275.0" stroke="rgba(150,230,160,0.22)" stroke-width="0.8"/><line x1="709.8" y1="354.0" x2="702.6" y2="332.5" stroke="rgba(150,230,160,0.22)" stroke-width="0.8"/><line x1="709.8" y1="354.0" x2="730.0" y2="296.4" stroke="rgba(150,230,160,0.22)" stroke-width="0.8"/><line x1="730.0" y1="296.4" x2="721.3" y2="275.0" stroke="rgba(150,230,160,0.22)" stroke-width="0.8"/><line x1="702.6" y1="332.5" x2="721.3" y2="275.0" stroke="rgba(150,230,160,0.22)" stroke-width="0.8"/><polygon points="680.0,354.2 673.9,332.7 689.8,275.2 697.1,296.6" fill="none" stroke="#8ff08a" stroke-width="1.0" stroke-linejoin="round" stroke-opacity="0.85"/><polygon points="680.0,354.2 709.8,354.0 730.0,296.4 697.1,296.6" fill="none" stroke="#8ff08a" stroke-width="1.0" stroke-linejoin="round" stroke-opacity="0.85"/><polygon points="697.1,296.6 730.0,296.4 721.3,275.0 689.8,275.2" fill="none" stroke="#8ff08a" stroke-width="1.0" stroke-linejoin="round" stroke-opacity="0.85"/></g>
<g><polygon points="688.1,382.8 681.5,359.3 702.6,289.6 711.0,313.2" fill="#224054"/><polygon points="688.1,382.8 719.3,382.6 746.3,313.0 711.0,313.2" fill="#558aa7"/><polygon points="711.0,313.2 746.3,313.0 736.3,289.4 702.6,289.6" fill="#4e7fa3"/><line x1="688.1" y1="382.8" x2="719.3" y2="382.6" stroke="rgba(150,230,160,0.22)" stroke-width="0.8"/><line x1="688.1" y1="382.8" x2="681.5" y2="359.3" stroke="rgba(150,230,160,0.22)" stroke-width="0.8"/><line x1="688.1" y1="382.8" x2="711.0" y2="313.2" stroke="rgba(150,230,160,0.22)" stroke-width="0.8"/><line x1="711.0" y1="313.2" x2="746.3" y2="313.0" stroke="rgba(150,230,160,0.22)" stroke-width="0.8"/><line x1="711.0" y1="313.2" x2="702.6" y2="289.6" stroke="rgba(150,230,160,0.22)" stroke-width="0.8"/><line x1="681.5" y1="359.3" x2="711.5" y2="359.1" stroke="rgba(150,230,160,0.22)" stroke-width="0.8"/><line x1="681.5" y1="359.3" x2="702.6" y2="289.6" stroke="rgba(150,230,160,0.22)" stroke-width="0.8"/><line x1="702.6" y1="289.6" x2="736.3" y2="289.4" stroke="rgba(150,230,160,0.22)" stroke-width="0.8"/><line x1="719.3" y1="382.6" x2="711.5" y2="359.1" stroke="rgba(150,230,160,0.22)" stroke-width="0.8"/><line x1="719.3" y1="382.6" x2="746.3" y2="313.0" stroke="rgba(150,230,160,0.22)" stroke-width="0.8"/><line x1="746.3" y1="313.0" x2="736.3" y2="289.4" stroke="rgba(150,230,160,0.22)" stroke-width="0.8"/><line x1="711.5" y1="359.1" x2="736.3" y2="289.4" stroke="rgba(150,230,160,0.22)" stroke-width="0.8"/><polygon points="688.1,382.8 681.5,359.3 702.6,289.6 711.0,313.2" fill="none" stroke="#8ff08a" stroke-width="1.0" stroke-linejoin="round" stroke-opacity="0.85"/><polygon points="688.1,382.8 719.3,382.6 746.3,313.0 711.0,313.2" fill="none" stroke="#8ff08a" stroke-width="1.0" stroke-linejoin="round" stroke-opacity="0.85"/><polygon points="711.0,313.2 746.3,313.0 736.3,289.4 702.6,289.6" fill="none" stroke="#8ff08a" stroke-width="1.0" stroke-linejoin="round" stroke-opacity="0.85"/></g>
<g><polygon points="649.9,383.1 644.7,359.6 656.3,310.2 662.5,333.9" fill="#224054"/><polygon points="649.9,383.1 681.1,382.9 696.6,333.7 662.5,333.9" fill="#558aa7"/><polygon points="662.5,333.9 696.6,333.7 689.0,310.0 656.3,310.2" fill="#4e7fa3"/><line x1="649.9" y1="383.1" x2="681.1" y2="382.9" stroke="rgba(150,230,160,0.22)" stroke-width="0.8"/><line x1="649.9" y1="383.1" x2="644.7" y2="359.6" stroke="rgba(150,230,160,0.22)" stroke-width="0.8"/><line x1="649.9" y1="383.1" x2="662.5" y2="333.9" stroke="rgba(150,230,160,0.22)" stroke-width="0.8"/><line x1="662.5" y1="333.9" x2="696.6" y2="333.7" stroke="rgba(150,230,160,0.22)" stroke-width="0.8"/><line x1="662.5" y1="333.9" x2="656.3" y2="310.2" stroke="rgba(150,230,160,0.22)" stroke-width="0.8"/><line x1="644.7" y1="359.6" x2="674.7" y2="359.4" stroke="rgba(150,230,160,0.22)" stroke-width="0.8"/><line x1="644.7" y1="359.6" x2="656.3" y2="310.2" stroke="rgba(150,230,160,0.22)" stroke-width="0.8"/><line x1="656.3" y1="310.2" x2="689.0" y2="310.0" stroke="rgba(150,230,160,0.22)" stroke-width="0.8"/><line x1="681.1" y1="382.9" x2="674.7" y2="359.4" stroke="rgba(150,230,160,0.22)" stroke-width="0.8"/><line x1="681.1" y1="382.9" x2="696.6" y2="333.7" stroke="rgba(150,230,160,0.22)" stroke-width="0.8"/><line x1="696.6" y1="333.7" x2="689.0" y2="310.0" stroke="rgba(150,230,160,0.22)" stroke-width="0.8"/><line x1="674.7" y1="359.4" x2="689.0" y2="310.0" stroke="rgba(150,230,160,0.22)" stroke-width="0.8"/><polygon points="649.9,383.1 644.7,359.6 656.3,310.2 662.5,333.9" fill="none" stroke="#8ff08a" stroke-width="1.0" stroke-linejoin="round" stroke-opacity="0.85"/><polygon points="649.9,383.1 681.1,382.9 696.6,333.7 662.5,333.9" fill="none" stroke="#8ff08a" stroke-width="1.0" stroke-linejoin="round" stroke-opacity="0.85"/><polygon points="662.5,333.9 696.6,333.7 689.0,310.0 656.3,310.2" fill="none" stroke="#8ff08a" stroke-width="1.0" stroke-linejoin="round" stroke-opacity="0.85"/></g>
<g><polygon points="412.8,384.8 416.3,361.2 406.8,308.8 402.6,332.6" fill="#224054"/><polygon points="381.4,385.1 412.8,384.8 402.6,332.6 368.1,332.8" fill="#558aa7"/><polygon points="368.1,332.8 402.6,332.6 406.8,308.8 373.8,309.0" fill="#4e7fa3"/><line x1="381.4" y1="385.1" x2="412.8" y2="384.8" stroke="rgba(150,230,160,0.22)" stroke-width="0.8"/><line x1="381.4" y1="385.1" x2="386.1" y2="361.4" stroke="rgba(150,230,160,0.22)" stroke-width="0.8"/><line x1="381.4" y1="385.1" x2="368.1" y2="332.8" stroke="rgba(150,230,160,0.22)" stroke-width="0.8"/><line x1="368.1" y1="332.8" x2="402.6" y2="332.6" stroke="rgba(150,230,160,0.22)" stroke-width="0.8"/><line x1="368.1" y1="332.8" x2="373.8" y2="309.0" stroke="rgba(150,230,160,0.22)" stroke-width="0.8"/><line x1="386.1" y1="361.4" x2="416.3" y2="361.2" stroke="rgba(150,230,160,0.22)" stroke-width="0.8"/><line x1="386.1" y1="361.4" x2="373.8" y2="309.0" stroke="rgba(150,230,160,0.22)" stroke-width="0.8"/><line x1="373.8" y1="309.0" x2="406.8" y2="308.8" stroke="rgba(150,230,160,0.22)" stroke-width="0.8"/><line x1="412.8" y1="384.8" x2="416.3" y2="361.2" stroke="rgba(150,230,160,0.22)" stroke-width="0.8"/><line x1="412.8" y1="384.8" x2="402.6" y2="332.6" stroke="rgba(150,230,160,0.22)" stroke-width="0.8"/><line x1="402.6" y1="332.6" x2="406.8" y2="308.8" stroke="rgba(150,230,160,0.22)" stroke-width="0.8"/><line x1="416.3" y1="361.2" x2="406.8" y2="308.8" stroke="rgba(150,230,160,0.22)" stroke-width="0.8"/><polygon points="412.8,384.8 416.3,361.2 406.8,308.8 402.6,332.6" fill="none" stroke="#8ff08a" stroke-width="1.0" stroke-linejoin="round" stroke-opacity="0.85"/><polygon points="381.4,385.1 412.8,384.8 402.6,332.6 368.1,332.8" fill="none" stroke="#8ff08a" stroke-width="1.0" stroke-linejoin="round" stroke-opacity="0.85"/><polygon points="368.1,332.8 402.6,332.6 406.8,308.8 373.8,309.0" fill="none" stroke="#8ff08a" stroke-width="1.0" stroke-linejoin="round" stroke-opacity="0.85"/></g>
<g><polygon points="535.0,384.0 534.0,360.3 535.6,316.0 536.7,339.7" fill="#224054"/><polygon points="535.0,384.0 566.3,383.7 570.6,339.5 536.7,339.7" fill="#558aa7"/><polygon points="536.7,339.7 570.6,339.5 568.1,315.7 535.6,316.0" fill="#4e7fa3"/><line x1="535.0" y1="384.0" x2="566.3" y2="383.7" stroke="rgba(150,230,160,0.22)" stroke-width="0.8"/><line x1="535.0" y1="384.0" x2="534.0" y2="360.3" stroke="rgba(150,230,160,0.22)" stroke-width="0.8"/><line x1="535.0" y1="384.0" x2="536.7" y2="339.7" stroke="rgba(150,230,160,0.22)" stroke-width="0.8"/><line x1="536.7" y1="339.7" x2="570.6" y2="339.5" stroke="rgba(150,230,160,0.22)" stroke-width="0.8"/><line x1="536.7" y1="339.7" x2="535.6" y2="316.0" stroke="rgba(150,230,160,0.22)" stroke-width="0.8"/><line x1="534.0" y1="360.3" x2="564.1" y2="360.1" stroke="rgba(150,230,160,0.22)" stroke-width="0.8"/><line x1="534.0" y1="360.3" x2="535.6" y2="316.0" stroke="rgba(150,230,160,0.22)" stroke-width="0.8"/><line x1="535.6" y1="316.0" x2="568.1" y2="315.7" stroke="rgba(150,230,160,0.22)" stroke-width="0.8"/><line x1="566.3" y1="383.7" x2="564.1" y2="360.1" stroke="rgba(150,230,160,0.22)" stroke-width="0.8"/><line x1="566.3" y1="383.7" x2="570.6" y2="339.5" stroke="rgba(150,230,160,0.22)" stroke-width="0.8"/><line x1="570.6" y1="339.5" x2="568.1" y2="315.7" stroke="rgba(150,230,160,0.22)" stroke-width="0.8"/><line x1="564.1" y1="360.1" x2="568.1" y2="315.7" stroke="rgba(150,230,160,0.22)" stroke-width="0.8"/><polygon points="535.0,384.0 534.0,360.3 535.6,316.0 536.7,339.7" fill="none" stroke="#8ff08a" stroke-width="1.0" stroke-linejoin="round" stroke-opacity="0.85"/><polygon points="535.0,384.0 566.3,383.7 570.6,339.5 536.7,339.7" fill="none" stroke="#8ff08a" stroke-width="1.0" stroke-linejoin="round" stroke-opacity="0.85"/><polygon points="536.7,339.7 570.6,339.5 568.1,315.7 535.6,316.0" fill="none" stroke="#8ff08a" stroke-width="1.0" stroke-linejoin="round" stroke-opacity="0.85"/></g>
<g><polygon points="489.6,384.3 490.2,360.6 488.8,327.5 488.0,351.3" fill="#224054"/><polygon points="458.3,384.5 489.6,384.3 488.0,351.3 454.7,351.5" fill="#558aa7"/><polygon points="454.7,351.5 488.0,351.3 488.8,327.5 456.8,327.7" fill="#4e7fa3"/><line x1="458.3" y1="384.5" x2="489.6" y2="384.3" stroke="rgba(150,230,160,0.22)" stroke-width="0.8"/><line x1="458.3" y1="384.5" x2="460.1" y2="360.9" stroke="rgba(150,230,160,0.22)" stroke-width="0.8"/><line x1="458.3" y1="384.5" x2="454.7" y2="351.5" stroke="rgba(150,230,160,0.22)" stroke-width="0.8"/><line x1="454.7" y1="351.5" x2="488.0" y2="351.3" stroke="rgba(150,230,160,0.22)" stroke-width="0.8"/><line x1="454.7" y1="351.5" x2="456.8" y2="327.7" stroke="rgba(150,230,160,0.22)" stroke-width="0.8"/><line x1="460.1" y1="360.9" x2="490.2" y2="360.6" stroke="rgba(150,230,160,0.22)" stroke-width="0.8"/><line x1="460.1" y1="360.9" x2="456.8" y2="327.7" stroke="rgba(150,230,160,0.22)" stroke-width="0.8"/><line x1="456.8" y1="327.7" x2="488.8" y2="327.5" stroke="rgba(150,230,160,0.22)" stroke-width="0.8"/><line x1="489.6" y1="384.3" x2="490.2" y2="360.6" stroke="rgba(150,230,160,0.22)" stroke-width="0.8"/><line x1="489.6" y1="384.3" x2="488.0" y2="351.3" stroke="rgba(150,230,160,0.22)" stroke-width="0.8"/><line x1="488.0" y1="351.3" x2="488.8" y2="327.5" stroke="rgba(150,230,160,0.22)" stroke-width="0.8"/><line x1="490.2" y1="360.6" x2="488.8" y2="327.5" stroke="rgba(150,230,160,0.22)" stroke-width="0.8"/><polygon points="489.6,384.3 490.2,360.6 488.8,327.5 488.0,351.3" fill="none" stroke="#8ff08a" stroke-width="1.0" stroke-linejoin="round" stroke-opacity="0.85"/><polygon points="458.3,384.5 489.6,384.3 488.0,351.3 454.7,351.5" fill="none" stroke="#8ff08a" stroke-width="1.0" stroke-linejoin="round" stroke-opacity="0.85"/><polygon points="454.7,351.5 488.0,351.3 488.8,327.5 456.8,327.7" fill="none" stroke="#8ff08a" stroke-width="1.0" stroke-linejoin="round" stroke-opacity="0.85"/></g>
<g><polygon points="496.7,384.2 497.1,360.6 495.8,322.5 495.4,346.3" fill="#224054"/><polygon points="496.7,384.2 528.0,384.0 528.9,346.1 495.4,346.3" fill="#558aa7"/><polygon points="495.4,346.3 528.9,346.1 528.0,322.3 495.8,322.5" fill="#4e7fa3"/><line x1="496.7" y1="384.2" x2="528.0" y2="384.0" stroke="rgba(150,230,160,0.22)" stroke-width="0.8"/><line x1="496.7" y1="384.2" x2="497.1" y2="360.6" stroke="rgba(150,230,160,0.22)" stroke-width="0.8"/><line x1="496.7" y1="384.2" x2="495.4" y2="346.3" stroke="rgba(150,230,160,0.22)" stroke-width="0.8"/><line x1="495.4" y1="346.3" x2="528.9" y2="346.1" stroke="rgba(150,230,160,0.22)" stroke-width="0.8"/><line x1="495.4" y1="346.3" x2="495.8" y2="322.5" stroke="rgba(150,230,160,0.22)" stroke-width="0.8"/><line x1="497.1" y1="360.6" x2="527.2" y2="360.4" stroke="rgba(150,230,160,0.22)" stroke-width="0.8"/><line x1="497.1" y1="360.6" x2="495.8" y2="322.5" stroke="rgba(150,230,160,0.22)" stroke-width="0.8"/><line x1="495.8" y1="322.5" x2="528.0" y2="322.3" stroke="rgba(150,230,160,0.22)" stroke-width="0.8"/><line x1="528.0" y1="384.0" x2="527.2" y2="360.4" stroke="rgba(150,230,160,0.22)" stroke-width="0.8"/><line x1="528.0" y1="384.0" x2="528.9" y2="346.1" stroke="rgba(150,230,160,0.22)" stroke-width="0.8"/><line x1="528.9" y1="346.1" x2="528.0" y2="322.3" stroke="rgba(150,230,160,0.22)" stroke-width="0.8"/><line x1="527.2" y1="360.4" x2="528.0" y2="322.3" stroke="rgba(150,230,160,0.22)" stroke-width="0.8"/><polygon points="496.7,384.2 497.1,360.6 495.8,322.5 495.4,346.3" fill="none" stroke="#8ff08a" stroke-width="1.0" stroke-linejoin="round" stroke-opacity="0.85"/><polygon points="496.7,384.2 528.0,384.0 528.9,346.1 495.4,346.3" fill="none" stroke="#8ff08a" stroke-width="1.0" stroke-linejoin="round" stroke-opacity="0.85"/><polygon points="495.4,346.3 528.9,346.1 528.0,322.3 495.8,322.5" fill="none" stroke="#8ff08a" stroke-width="1.0" stroke-linejoin="round" stroke-opacity="0.85"/></g>
<g><polygon points="408.1,416.5 411.9,390.5 407.9,370.1 403.7,396.4" fill="#204155"/><polygon points="375.2,416.8 408.1,416.5 403.7,396.4 369.4,396.6" fill="#508ca9"/><polygon points="369.4,396.6 403.7,396.4 407.9,370.1 375.0,370.4" fill="#4880a5"/><line x1="375.2" y1="416.8" x2="408.1" y2="416.5" stroke="rgba(150,230,160,0.22)" stroke-width="0.8"/><line x1="375.2" y1="416.8" x2="380.3" y2="390.7" stroke="rgba(150,230,160,0.22)" stroke-width="0.8"/><line x1="375.2" y1="416.8" x2="369.4" y2="396.6" stroke="rgba(150,230,160,0.22)" stroke-width="0.8"/><line x1="369.4" y1="396.6" x2="403.7" y2="396.4" stroke="rgba(150,230,160,0.22)" stroke-width="0.8"/><line x1="369.4" y1="396.6" x2="375.0" y2="370.4" stroke="rgba(150,230,160,0.22)" stroke-width="0.8"/><line x1="380.3" y1="390.7" x2="411.9" y2="390.5" stroke="rgba(150,230,160,0.22)" stroke-width="0.8"/><line x1="380.3" y1="390.7" x2="375.0" y2="370.4" stroke="rgba(150,230,160,0.22)" stroke-width="0.8"/><line x1="375.0" y1="370.4" x2="407.9" y2="370.1" stroke="rgba(150,230,160,0.22)" stroke-width="0.8"/><line x1="408.1" y1="416.5" x2="411.9" y2="390.5" stroke="rgba(150,230,160,0.22)" stroke-width="0.8"/><line x1="408.1" y1="416.5" x2="403.7" y2="396.4" stroke="rgba(150,230,160,0.22)" stroke-width="0.8"/><line x1="403.7" y1="396.4" x2="407.9" y2="370.1" stroke="rgba(150,230,160,0.22)" stroke-width="0.8"/><line x1="411.9" y1="390.5" x2="407.9" y2="370.1" stroke="rgba(150,230,160,0.22)" stroke-width="0.8"/><polygon points="408.1,416.5 411.9,390.5 407.9,370.1 403.7,396.4" fill="none" stroke="#8ff08a" stroke-width="1.0" stroke-linejoin="round" stroke-opacity="0.85"/><polygon points="375.2,416.8 408.1,416.5 403.7,396.4 369.4,396.6" fill="none" stroke="#8ff08a" stroke-width="1.0" stroke-linejoin="round" stroke-opacity="0.85"/><polygon points="369.4,396.6 403.7,396.4 407.9,370.1 375.0,370.4" fill="none" stroke="#8ff08a" stroke-width="1.0" stroke-linejoin="round" stroke-opacity="0.85"/></g>
<g><polygon points="448.4,416.2 450.7,390.2 447.3,362.6 444.7,388.9" fill="#204155"/><polygon points="415.5,416.5 448.4,416.2 444.7,388.9 410.0,389.1" fill="#508ca9"/><polygon points="410.0,389.1 444.7,388.9 447.3,362.6 414.0,362.8" fill="#4880a5"/><line x1="415.5" y1="416.5" x2="448.4" y2="416.2" stroke="rgba(150,230,160,0.22)" stroke-width="0.8"/><line x1="415.5" y1="416.5" x2="419.1" y2="390.4" stroke="rgba(150,230,160,0.22)" stroke-width="0.8"/><line x1="415.5" y1="416.5" x2="410.0" y2="389.1" stroke="rgba(150,230,160,0.22)" stroke-width="0.8"/><line x1="410.0" y1="389.1" x2="444.7" y2="388.9" stroke="rgba(150,230,160,0.22)" stroke-width="0.8"/><line x1="410.0" y1="389.1" x2="414.0" y2="362.8" stroke="rgba(150,230,160,0.22)" stroke-width="0.8"/><line x1="419.1" y1="390.4" x2="450.7" y2="390.2" stroke="rgba(150,230,160,0.22)" stroke-width="0.8"/><line x1="419.1" y1="390.4" x2="414.0" y2="362.8" stroke="rgba(150,230,160,0.22)" stroke-width="0.8"/><line x1="414.0" y1="362.8" x2="447.3" y2="362.6" stroke="rgba(150,230,160,0.22)" stroke-width="0.8"/><line x1="448.4" y1="416.2" x2="450.7" y2="390.2" stroke="rgba(150,230,160,0.22)" stroke-width="0.8"/><line x1="448.4" y1="416.2" x2="444.7" y2="388.9" stroke="rgba(150,230,160,0.22)" stroke-width="0.8"/><line x1="444.7" y1="388.9" x2="447.3" y2="362.6" stroke="rgba(150,230,160,0.22)" stroke-width="0.8"/><line x1="450.7" y1="390.2" x2="447.3" y2="362.6" stroke="rgba(150,230,160,0.22)" stroke-width="0.8"/><polygon points="448.4,416.2 450.7,390.2 447.3,362.6 444.7,388.9" fill="none" stroke="#8ff08a" stroke-width="1.0" stroke-linejoin="round" stroke-opacity="0.85"/><polygon points="415.5,416.5 448.4,416.2 444.7,388.9 410.0,389.1" fill="none" stroke="#8ff08a" stroke-width="1.0" stroke-linejoin="round" stroke-opacity="0.85"/><polygon points="410.0,389.1 444.7,388.9 447.3,362.6 414.0,362.8" fill="none" stroke="#8ff08a" stroke-width="1.0" stroke-linejoin="round" stroke-opacity="0.85"/></g>
<g><polygon points="536.4,415.5 535.3,389.6 536.6,356.9 537.8,383.1" fill="#204155"/><polygon points="536.4,415.5 569.2,415.3 572.7,382.9 537.8,383.1" fill="#508ca9"/><polygon points="537.8,383.1 572.7,382.9 570.1,356.6 536.6,356.9" fill="#4880a5"/><line x1="536.4" y1="415.5" x2="569.2" y2="415.3" stroke="rgba(150,230,160,0.22)" stroke-width="0.8"/><line x1="536.4" y1="415.5" x2="535.3" y2="389.6" stroke="rgba(150,230,160,0.22)" stroke-width="0.8"/><line x1="536.4" y1="415.5" x2="537.8" y2="383.1" stroke="rgba(150,230,160,0.22)" stroke-width="0.8"/><line x1="537.8" y1="383.1" x2="572.7" y2="382.9" stroke="rgba(150,230,160,0.22)" stroke-width="0.8"/><line x1="537.8" y1="383.1" x2="536.6" y2="356.9" stroke="rgba(150,230,160,0.22)" stroke-width="0.8"/><line x1="535.3" y1="389.6" x2="566.8" y2="389.3" stroke="rgba(150,230,160,0.22)" stroke-width="0.8"/><line x1="535.3" y1="389.6" x2="536.6" y2="356.9" stroke="rgba(150,230,160,0.22)" stroke-width="0.8"/><line x1="536.6" y1="356.9" x2="570.1" y2="356.6" stroke="rgba(150,230,160,0.22)" stroke-width="0.8"/><line x1="569.2" y1="415.3" x2="566.8" y2="389.3" stroke="rgba(150,230,160,0.22)" stroke-width="0.8"/><line x1="569.2" y1="415.3" x2="572.7" y2="382.9" stroke="rgba(150,230,160,0.22)" stroke-width="0.8"/><line x1="572.7" y1="382.9" x2="570.1" y2="356.6" stroke="rgba(150,230,160,0.22)" stroke-width="0.8"/><line x1="566.8" y1="389.3" x2="570.1" y2="356.6" stroke="rgba(150,230,160,0.22)" stroke-width="0.8"/><polygon points="536.4,415.5 535.3,389.6 536.6,356.9 537.8,383.1" fill="none" stroke="#8ff08a" stroke-width="1.0" stroke-linejoin="round" stroke-opacity="0.85"/><polygon points="536.4,415.5 569.2,415.3 572.7,382.9 537.8,383.1" fill="none" stroke="#8ff08a" stroke-width="1.0" stroke-linejoin="round" stroke-opacity="0.85"/><polygon points="537.8,383.1 572.7,382.9 570.1,356.6 536.6,356.9" fill="none" stroke="#8ff08a" stroke-width="1.0" stroke-linejoin="round" stroke-opacity="0.85"/></g>
<g><polygon points="664.7,449.4 658.3,420.8 664.1,401.2 671.0,430.1" fill="#1e4256"/><polygon points="664.7,449.4 699.1,449.1 706.8,429.9 671.0,430.1" fill="#4a8eac"/><polygon points="671.0,430.1 706.8,429.9 698.4,401.0 664.1,401.2" fill="#4182a6"/><line x1="664.7" y1="449.4" x2="699.1" y2="449.1" stroke="rgba(150,230,160,0.22)" stroke-width="0.8"/><line x1="664.7" y1="449.4" x2="658.3" y2="420.8" stroke="rgba(150,230,160,0.22)" stroke-width="0.8"/><line x1="664.7" y1="449.4" x2="671.0" y2="430.1" stroke="rgba(150,230,160,0.22)" stroke-width="0.8"/><line x1="671.0" y1="430.1" x2="706.8" y2="429.9" stroke="rgba(150,230,160,0.22)" stroke-width="0.8"/><line x1="671.0" y1="430.1" x2="664.1" y2="401.2" stroke="rgba(150,230,160,0.22)" stroke-width="0.8"/><line x1="658.3" y1="420.8" x2="691.3" y2="420.5" stroke="rgba(150,230,160,0.22)" stroke-width="0.8"/><line x1="658.3" y1="420.8" x2="664.1" y2="401.2" stroke="rgba(150,230,160,0.22)" stroke-width="0.8"/><line x1="664.1" y1="401.2" x2="698.4" y2="401.0" stroke="rgba(150,230,160,0.22)" stroke-width="0.8"/><line x1="699.1" y1="449.1" x2="691.3" y2="420.5" stroke="rgba(150,230,160,0.22)" stroke-width="0.8"/><line x1="699.1" y1="449.1" x2="706.8" y2="429.9" stroke="rgba(150,230,160,0.22)" stroke-width="0.8"/><line x1="706.8" y1="429.9" x2="698.4" y2="401.0" stroke="rgba(150,230,160,0.22)" stroke-width="0.8"/><line x1="691.3" y1="420.5" x2="698.4" y2="401.0" stroke="rgba(150,230,160,0.22)" stroke-width="0.8"/><polygon points="664.7,449.4 658.3,420.8 664.1,401.2 671.0,430.1" fill="none" stroke="#8ff08a" stroke-width="1.0" stroke-linejoin="round" stroke-opacity="0.85"/><polygon points="664.7,449.4 699.1,449.1 706.8,429.9 671.0,430.1" fill="none" stroke="#8ff08a" stroke-width="1.0" stroke-linejoin="round" stroke-opacity="0.85"/><polygon points="671.0,430.1 706.8,429.9 698.4,401.0 664.1,401.2" fill="none" stroke="#8ff08a" stroke-width="1.0" stroke-linejoin="round" stroke-opacity="0.85"/></g>
<g><polygon points="360.4,451.8 366.4,423.0 356.2,389.7 349.3,419.1" fill="#1e4256"/><polygon points="325.7,452.1 360.4,451.8 349.3,419.1 312.2,419.3" fill="#4a8eac"/><polygon points="312.2,419.3 349.3,419.1 356.2,389.7 320.7,390.0" fill="#4182a6"/><line x1="325.7" y1="452.1" x2="360.4" y2="451.8" stroke="rgba(150,230,160,0.22)" stroke-width="0.8"/><line x1="325.7" y1="452.1" x2="333.2" y2="423.3" stroke="rgba(150,230,160,0.22)" stroke-width="0.8"/><line x1="325.7" y1="452.1" x2="312.2" y2="419.3" stroke="rgba(150,230,160,0.22)" stroke-width="0.8"/><line x1="312.2" y1="419.3" x2="349.3" y2="419.1" stroke="rgba(150,230,160,0.22)" stroke-width="0.8"/><line x1="312.2" y1="419.3" x2="320.7" y2="390.0" stroke="rgba(150,230,160,0.22)" stroke-width="0.8"/><line x1="333.2" y1="423.3" x2="366.4" y2="423.0" stroke="rgba(150,230,160,0.22)" stroke-width="0.8"/><line x1="333.2" y1="423.3" x2="320.7" y2="390.0" stroke="rgba(150,230,160,0.22)" stroke-width="0.8"/><line x1="320.7" y1="390.0" x2="356.2" y2="389.7" stroke="rgba(150,230,160,0.22)" stroke-width="0.8"/><line x1="360.4" y1="451.8" x2="366.4" y2="423.0" stroke="rgba(150,230,160,0.22)" stroke-width="0.8"/><line x1="360.4" y1="451.8" x2="349.3" y2="419.1" stroke="rgba(150,230,160,0.22)" stroke-width="0.8"/><line x1="349.3" y1="419.1" x2="356.2" y2="389.7" stroke="rgba(150,230,160,0.22)" stroke-width="0.8"/><line x1="366.4" y1="423.0" x2="356.2" y2="389.7" stroke="rgba(150,230,160,0.22)" stroke-width="0.8"/><polygon points="360.4,451.8 366.4,423.0 356.2,389.7 349.3,419.1" fill="none" stroke="#8ff08a" stroke-width="1.0" stroke-linejoin="round" stroke-opacity="0.85"/><polygon points="325.7,452.1 360.4,451.8 349.3,419.1 312.2,419.3" fill="none" stroke="#8ff08a" stroke-width="1.0" stroke-linejoin="round" stroke-opacity="0.85"/><polygon points="312.2,419.3 349.3,419.1 356.2,389.7 320.7,390.0" fill="none" stroke="#8ff08a" stroke-width="1.0" stroke-linejoin="round" stroke-opacity="0.85"/></g>
<g><polygon points="673.4,488.0 666.3,456.2 685.7,398.0 694.7,431.0" fill="#1c4458"/><polygon points="673.4,488.0 709.6,487.7 735.9,430.7 694.7,431.0" fill="#4590ae"/><polygon points="694.7,431.0 735.9,430.7 724.9,397.7 685.7,398.0" fill="#3b83a8"/><line x1="673.4" y1="488.0" x2="709.6" y2="487.7" stroke="rgba(150,230,160,0.22)" stroke-width="0.8"/><line x1="673.4" y1="488.0" x2="666.3" y2="456.2" stroke="rgba(150,230,160,0.22)" stroke-width="0.8"/><line x1="673.4" y1="488.0" x2="694.7" y2="431.0" stroke="rgba(150,230,160,0.22)" stroke-width="0.8"/><line x1="694.7" y1="431.0" x2="735.9" y2="430.7" stroke="rgba(150,230,160,0.22)" stroke-width="0.8"/><line x1="694.7" y1="431.0" x2="685.7" y2="398.0" stroke="rgba(150,230,160,0.22)" stroke-width="0.8"/><line x1="666.3" y1="456.2" x2="701.0" y2="455.9" stroke="rgba(150,230,160,0.22)" stroke-width="0.8"/><line x1="666.3" y1="456.2" x2="685.7" y2="398.0" stroke="rgba(150,230,160,0.22)" stroke-width="0.8"/><line x1="685.7" y1="398.0" x2="724.9" y2="397.7" stroke="rgba(150,230,160,0.22)" stroke-width="0.8"/><line x1="709.6" y1="487.7" x2="701.0" y2="455.9" stroke="rgba(150,230,160,0.22)" stroke-width="0.8"/><line x1="709.6" y1="487.7" x2="735.9" y2="430.7" stroke="rgba(150,230,160,0.22)" stroke-width="0.8"/><line x1="735.9" y1="430.7" x2="724.9" y2="397.7" stroke="rgba(150,230,160,0.22)" stroke-width="0.8"/><line x1="701.0" y1="455.9" x2="724.9" y2="397.7" stroke="rgba(150,230,160,0.22)" stroke-width="0.8"/><polygon points="673.4,488.0 666.3,456.2 685.7,398.0 694.7,431.0" fill="none" stroke="#8ff08a" stroke-width="1.0" stroke-linejoin="round" stroke-opacity="0.85"/><polygon points="673.4,488.0 709.6,487.7 735.9,430.7 694.7,431.0" fill="none" stroke="#8ff08a" stroke-width="1.0" stroke-linejoin="round" stroke-opacity="0.85"/><polygon points="694.7,431.0 735.9,430.7 724.9,397.7 685.7,398.0" fill="none" stroke="#8ff08a" stroke-width="1.0" stroke-linejoin="round" stroke-opacity="0.85"/></g>
<g><polygon points="397.1,490.3 401.9,458.4 393.2,423.7 387.6,456.5" fill="#1c4458"/><polygon points="360.6,490.6 397.1,490.3 387.6,456.5 348.2,456.9" fill="#4590ae"/><polygon points="348.2,456.9 387.6,456.5 393.2,423.7 355.5,424.0" fill="#3b83a8"/><line x1="360.6" y1="490.6" x2="397.1" y2="490.3" stroke="rgba(150,230,160,0.22)" stroke-width="0.8"/><line x1="360.6" y1="490.6" x2="366.9" y2="458.6" stroke="rgba(150,230,160,0.22)" stroke-width="0.8"/><line x1="360.6" y1="490.6" x2="348.2" y2="456.9" stroke="rgba(150,230,160,0.22)" stroke-width="0.8"/><line x1="348.2" y1="456.9" x2="387.6" y2="456.5" stroke="rgba(150,230,160,0.22)" stroke-width="0.8"/><line x1="348.2" y1="456.9" x2="355.5" y2="424.0" stroke="rgba(150,230,160,0.22)" stroke-width="0.8"/><line x1="366.9" y1="458.6" x2="401.9" y2="458.4" stroke="rgba(150,230,160,0.22)" stroke-width="0.8"/><line x1="366.9" y1="458.6" x2="355.5" y2="424.0" stroke="rgba(150,230,160,0.22)" stroke-width="0.8"/><line x1="355.5" y1="424.0" x2="393.2" y2="423.7" stroke="rgba(150,230,160,0.22)" stroke-width="0.8"/><line x1="397.1" y1="490.3" x2="401.9" y2="458.4" stroke="rgba(150,230,160,0.22)" stroke-width="0.8"/><line x1="397.1" y1="490.3" x2="387.6" y2="456.5" stroke="rgba(150,230,160,0.22)" stroke-width="0.8"/><line x1="387.6" y1="456.5" x2="393.2" y2="423.7" stroke="rgba(150,230,160,0.22)" stroke-width="0.8"/><line x1="401.9" y1="458.4" x2="393.2" y2="423.7" stroke="rgba(150,230,160,0.22)" stroke-width="0.8"/><polygon points="397.1,490.3 401.9,458.4 393.2,423.7 387.6,456.5" fill="none" stroke="#8ff08a" stroke-width="1.0" stroke-linejoin="round" stroke-opacity="0.85"/><polygon points="360.6,490.6 397.1,490.3 387.6,456.5 348.2,456.9" fill="none" stroke="#8ff08a" stroke-width="1.0" stroke-linejoin="round" stroke-opacity="0.85"/><polygon points="348.2,456.9 387.6,456.5 393.2,423.7 355.5,424.0" fill="none" stroke="#8ff08a" stroke-width="1.0" stroke-linejoin="round" stroke-opacity="0.85"/></g>
<g><polygon points="539.6,489.1 538.2,457.3 539.9,423.9 541.5,456.6" fill="#1c4458"/><polygon points="539.6,489.1 576.0,488.8 580.7,456.3 541.5,456.6" fill="#4590ae"/><polygon points="541.5,456.6 580.7,456.3 577.3,423.7 539.9,423.9" fill="#3b83a8"/><line x1="539.6" y1="489.1" x2="576.0" y2="488.8" stroke="rgba(150,230,160,0.22)" stroke-width="0.8"/><line x1="539.6" y1="489.1" x2="538.2" y2="457.3" stroke="rgba(150,230,160,0.22)" stroke-width="0.8"/><line x1="539.6" y1="489.1" x2="541.5" y2="456.6" stroke="rgba(150,230,160,0.22)" stroke-width="0.8"/><line x1="541.5" y1="456.6" x2="580.7" y2="456.3" stroke="rgba(150,230,160,0.22)" stroke-width="0.8"/><line x1="541.5" y1="456.6" x2="539.9" y2="423.9" stroke="rgba(150,230,160,0.22)" stroke-width="0.8"/><line x1="538.2" y1="457.3" x2="573.0" y2="457.0" stroke="rgba(150,230,160,0.22)" stroke-width="0.8"/><line x1="538.2" y1="457.3" x2="539.9" y2="423.9" stroke="rgba(150,230,160,0.22)" stroke-width="0.8"/><line x1="539.9" y1="423.9" x2="577.3" y2="423.7" stroke="rgba(150,230,160,0.22)" stroke-width="0.8"/><line x1="576.0" y1="488.8" x2="573.0" y2="457.0" stroke="rgba(150,230,160,0.22)" stroke-width="0.8"/><line x1="576.0" y1="488.8" x2="580.7" y2="456.3" stroke="rgba(150,230,160,0.22)" stroke-width="0.8"/><line x1="580.7" y1="456.3" x2="577.3" y2="423.7" stroke="rgba(150,230,160,0.22)" stroke-width="0.8"/><line x1="573.0" y1="457.0" x2="577.3" y2="423.7" stroke="rgba(150,230,160,0.22)" stroke-width="0.8"/><polygon points="539.6,489.1 538.2,457.3 539.9,423.9 541.5,456.6" fill="none" stroke="#8ff08a" stroke-width="1.0" stroke-linejoin="round" stroke-opacity="0.85"/><polygon points="539.6,489.1 576.0,488.8 580.7,456.3 541.5,456.6" fill="none" stroke="#8ff08a" stroke-width="1.0" stroke-linejoin="round" stroke-opacity="0.85"/><polygon points="541.5,456.6 580.7,456.3 577.3,423.7 539.9,423.9" fill="none" stroke="#8ff08a" stroke-width="1.0" stroke-linejoin="round" stroke-opacity="0.85"/></g>
<g><polygon points="494.2,532.7 494.8,497.1 492.8,456.7 492.0,493.9" fill="#1a4559"/><polygon points="494.2,532.7 532.7,532.4 534.5,493.5 492.0,493.9" fill="#3f92b0"/><polygon points="492.0,493.9 534.5,493.5 533.2,456.4 492.8,456.7" fill="#3485aa"/><line x1="494.2" y1="532.7" x2="532.7" y2="532.4" stroke="rgba(150,230,160,0.22)" stroke-width="0.8"/><line x1="494.2" y1="532.7" x2="494.8" y2="497.1" stroke="rgba(150,230,160,0.22)" stroke-width="0.8"/><line x1="494.2" y1="532.7" x2="492.0" y2="493.9" stroke="rgba(150,230,160,0.22)" stroke-width="0.8"/><line x1="492.0" y1="493.9" x2="534.5" y2="493.5" stroke="rgba(150,230,160,0.22)" stroke-width="0.8"/><line x1="492.0" y1="493.9" x2="492.8" y2="456.7" stroke="rgba(150,230,160,0.22)" stroke-width="0.8"/><line x1="494.8" y1="497.1" x2="531.6" y2="496.8" stroke="rgba(150,230,160,0.22)" stroke-width="0.8"/><line x1="494.8" y1="497.1" x2="492.8" y2="456.7" stroke="rgba(150,230,160,0.22)" stroke-width="0.8"/><line x1="492.8" y1="456.7" x2="533.2" y2="456.4" stroke="rgba(150,230,160,0.22)" stroke-width="0.8"/><line x1="532.7" y1="532.4" x2="531.6" y2="496.8" stroke="rgba(150,230,160,0.22)" stroke-width="0.8"/><line x1="532.7" y1="532.4" x2="534.5" y2="493.5" stroke="rgba(150,230,160,0.22)" stroke-width="0.8"/><line x1="534.5" y1="493.5" x2="533.2" y2="456.4" stroke="rgba(150,230,160,0.22)" stroke-width="0.8"/><line x1="531.6" y1="496.8" x2="533.2" y2="456.4" stroke="rgba(150,230,160,0.22)" stroke-width="0.8"/><polygon points="494.2,532.7 494.8,497.1 492.8,456.7 492.0,493.9" fill="none" stroke="#8ff08a" stroke-width="1.0" stroke-linejoin="round" stroke-opacity="0.85"/><polygon points="494.2,532.7 532.7,532.4 534.5,493.5 492.0,493.9" fill="none" stroke="#8ff08a" stroke-width="1.0" stroke-linejoin="round" stroke-opacity="0.85"/><polygon points="492.0,493.9 534.5,493.5 533.2,456.4 492.8,456.7" fill="none" stroke="#8ff08a" stroke-width="1.0" stroke-linejoin="round" stroke-opacity="0.85"/></g>
<g><polygon points="383.5,582.3 389.4,542.2 383.4,524.7 376.9,565.9" fill="#18465a"/><polygon points="342.4,582.7 383.5,582.3 376.9,565.9 333.7,566.3" fill="#3a94b2"/><polygon points="333.7,566.3 376.9,565.9 383.4,524.7 342.5,525.1" fill="#2e86ac"/><line x1="342.4" y1="582.7" x2="383.5" y2="582.3" stroke="rgba(150,230,160,0.22)" stroke-width="0.8"/><line x1="342.4" y1="582.7" x2="350.3" y2="542.6" stroke="rgba(150,230,160,0.22)" stroke-width="0.8"/><line x1="342.4" y1="582.7" x2="333.7" y2="566.3" stroke="rgba(150,230,160,0.22)" stroke-width="0.8"/><line x1="333.7" y1="566.3" x2="376.9" y2="565.9" stroke="rgba(150,230,160,0.22)" stroke-width="0.8"/><line x1="333.7" y1="566.3" x2="342.5" y2="525.1" stroke="rgba(150,230,160,0.22)" stroke-width="0.8"/><line x1="350.3" y1="542.6" x2="389.4" y2="542.2" stroke="rgba(150,230,160,0.22)" stroke-width="0.8"/><line x1="350.3" y1="542.6" x2="342.5" y2="525.1" stroke="rgba(150,230,160,0.22)" stroke-width="0.8"/><line x1="342.5" y1="525.1" x2="383.4" y2="524.7" stroke="rgba(150,230,160,0.22)" stroke-width="0.8"/><line x1="383.5" y1="582.3" x2="389.4" y2="542.2" stroke="rgba(150,230,160,0.22)" stroke-width="0.8"/><line x1="383.5" y1="582.3" x2="376.9" y2="565.9" stroke="rgba(150,230,160,0.22)" stroke-width="0.8"/><line x1="376.9" y1="565.9" x2="383.4" y2="524.7" stroke="rgba(150,230,160,0.22)" stroke-width="0.8"/><line x1="389.4" y1="542.2" x2="383.4" y2="524.7" stroke="rgba(150,230,160,0.22)" stroke-width="0.8"/><polygon points="383.5,582.3 389.4,542.2 383.4,524.7 376.9,565.9" fill="none" stroke="#8ff08a" stroke-width="1.0" stroke-linejoin="round" stroke-opacity="0.85"/><polygon points="342.4,582.7 383.5,582.3 376.9,565.9 333.7,566.3" fill="none" stroke="#8ff08a" stroke-width="1.0" stroke-linejoin="round" stroke-opacity="0.85"/><polygon points="333.7,566.3 376.9,565.9 383.4,524.7 342.5,525.1" fill="none" stroke="#8ff08a" stroke-width="1.0" stroke-linejoin="round" stroke-opacity="0.85"/></g>
<g><polygon points="484.1,581.4 485.2,541.4 482.3,506.3 480.9,548.4" fill="#18465a"/><polygon points="443.1,581.8 484.1,581.4 480.9,548.4 435.9,548.8" fill="#3a94b2"/><polygon points="435.9,548.8 480.9,548.4 482.3,506.3 439.6,506.6" fill="#2e86ac"/><line x1="443.1" y1="581.8" x2="484.1" y2="581.4" stroke="rgba(150,230,160,0.22)" stroke-width="0.8"/><line x1="443.1" y1="581.8" x2="446.2" y2="541.7" stroke="rgba(150,230,160,0.22)" stroke-width="0.8"/><line x1="443.1" y1="581.8" x2="435.9" y2="548.8" stroke="rgba(150,230,160,0.22)" stroke-width="0.8"/><line x1="435.9" y1="548.8" x2="480.9" y2="548.4" stroke="rgba(150,230,160,0.22)" stroke-width="0.8"/><line x1="435.9" y1="548.8" x2="439.6" y2="506.6" stroke="rgba(150,230,160,0.22)" stroke-width="0.8"/><line x1="446.2" y1="541.7" x2="485.2" y2="541.4" stroke="rgba(150,230,160,0.22)" stroke-width="0.8"/><line x1="446.2" y1="541.7" x2="439.6" y2="506.6" stroke="rgba(150,230,160,0.22)" stroke-width="0.8"/><line x1="439.6" y1="506.6" x2="482.3" y2="506.3" stroke="rgba(150,230,160,0.22)" stroke-width="0.8"/><line x1="484.1" y1="581.4" x2="485.2" y2="541.4" stroke="rgba(150,230,160,0.22)" stroke-width="0.8"/><line x1="484.1" y1="581.4" x2="480.9" y2="548.4" stroke="rgba(150,230,160,0.22)" stroke-width="0.8"/><line x1="480.9" y1="548.4" x2="482.3" y2="506.3" stroke="rgba(150,230,160,0.22)" stroke-width="0.8"/><line x1="485.2" y1="541.4" x2="482.3" y2="506.3" stroke="rgba(150,230,160,0.22)" stroke-width="0.8"/><polygon points="484.1,581.4 485.2,541.4 482.3,506.3 480.9,548.4" fill="none" stroke="#8ff08a" stroke-width="1.0" stroke-linejoin="round" stroke-opacity="0.85"/><polygon points="443.1,581.8 484.1,581.4 480.9,548.4 435.9,548.8" fill="none" stroke="#8ff08a" stroke-width="1.0" stroke-linejoin="round" stroke-opacity="0.85"/><polygon points="435.9,548.8 480.9,548.4 482.3,506.3 439.6,506.6" fill="none" stroke="#8ff08a" stroke-width="1.0" stroke-linejoin="round" stroke-opacity="0.85"/></g>
<g><polygon points="493.4,581.3 494.0,541.3 492.1,508.1 491.3,550.1" fill="#18465a"/><polygon points="493.4,581.3 534.3,580.9 536.1,549.7 491.3,550.1" fill="#3a94b2"/><polygon points="491.3,550.1 536.1,549.7 534.6,507.7 492.1,508.1" fill="#2e86ac"/><line x1="493.4" y1="581.3" x2="534.3" y2="580.9" stroke="rgba(150,230,160,0.22)" stroke-width="0.8"/><line x1="493.4" y1="581.3" x2="494.0" y2="541.3" stroke="rgba(150,230,160,0.22)" stroke-width="0.8"/><line x1="493.4" y1="581.3" x2="491.3" y2="550.1" stroke="rgba(150,230,160,0.22)" stroke-width="0.8"/><line x1="491.3" y1="550.1" x2="536.1" y2="549.7" stroke="rgba(150,230,160,0.22)" stroke-width="0.8"/><line x1="491.3" y1="550.1" x2="492.1" y2="508.1" stroke="rgba(150,230,160,0.22)" stroke-width="0.8"/><line x1="494.0" y1="541.3" x2="533.0" y2="540.9" stroke="rgba(150,230,160,0.22)" stroke-width="0.8"/><line x1="494.0" y1="541.3" x2="492.1" y2="508.1" stroke="rgba(150,230,160,0.22)" stroke-width="0.8"/><line x1="492.1" y1="508.1" x2="534.6" y2="507.7" stroke="rgba(150,230,160,0.22)" stroke-width="0.8"/><line x1="534.3" y1="580.9" x2="533.0" y2="540.9" stroke="rgba(150,230,160,0.22)" stroke-width="0.8"/><line x1="534.3" y1="580.9" x2="536.1" y2="549.7" stroke="rgba(150,230,160,0.22)" stroke-width="0.8"/><line x1="536.1" y1="549.7" x2="534.6" y2="507.7" stroke="rgba(150,230,160,0.22)" stroke-width="0.8"/><line x1="533.0" y1="540.9" x2="534.6" y2="507.7" stroke="rgba(150,230,160,0.22)" stroke-width="0.8"/><polygon points="493.4,581.3 494.0,541.3 492.1,508.1 491.3,550.1" fill="none" stroke="#8ff08a" stroke-width="1.0" stroke-linejoin="round" stroke-opacity="0.85"/><polygon points="493.4,581.3 534.3,580.9 536.1,549.7 491.3,550.1" fill="none" stroke="#8ff08a" stroke-width="1.0" stroke-linejoin="round" stroke-opacity="0.85"/><polygon points="491.3,550.1 536.1,549.7 534.6,507.7 492.1,508.1" fill="none" stroke="#8ff08a" stroke-width="1.0" stroke-linejoin="round" stroke-opacity="0.85"/></g>
<g stroke-opacity="0.28"><line x1="286.3" y1="588.5" x2="790.3" y2="583.7" stroke="#8ff08a" stroke-width="1.0"/><line x1="286.3" y1="588.5" x2="420.9" y2="75.8" stroke="#8ff08a" stroke-width="1.0"/><line x1="286.3" y1="588.5" x2="285.8" y2="587.7" stroke="#8ff08a" stroke-width="1.0"/><line x1="285.8" y1="587.7" x2="791.0" y2="582.9" stroke="#8ff08a" stroke-width="1.0"/><line x1="285.8" y1="587.7" x2="420.8" y2="75.0" stroke="#8ff08a" stroke-width="1.0"/><line x1="420.9" y1="75.8" x2="618.6" y2="75.0" stroke="#8ff08a" stroke-width="1.0"/><line x1="420.9" y1="75.8" x2="420.8" y2="75.0" stroke="#8ff08a" stroke-width="1.0"/><line x1="420.8" y1="75.0" x2="618.7" y2="74.2" stroke="#8ff08a" stroke-width="1.0"/><line x1="790.3" y1="583.7" x2="618.6" y2="75.0" stroke="#8ff08a" stroke-width="1.0"/><line x1="790.3" y1="583.7" x2="791.0" y2="582.9" stroke="#8ff08a" stroke-width="1.0"/><line x1="791.0" y1="582.9" x2="618.7" y2="74.2" stroke="#8ff08a" stroke-width="1.0"/><line x1="618.6" y1="75.0" x2="618.7" y2="74.2" stroke="#8ff08a" stroke-width="1.0"/><line x1="45.9" y1="600.0" x2="292.8" y2="597.6" stroke="#8ff08a" stroke-width="1.0"/><line x1="45.9" y1="600.0" x2="323.9" y2="85.6" stroke="#8ff08a" stroke-width="1.0"/><line x1="45.9" y1="600.0" x2="16.4" y2="580.5" stroke="#8ff08a" stroke-width="1.0"/><line x1="16.4" y1="580.5" x2="278.9" y2="578.0" stroke="#8ff08a" stroke-width="1.0"/><line x1="16.4" y1="580.5" x2="319.3" y2="65.7" stroke="#8ff08a" stroke-width="1.0"/><line x1="323.9" y1="85.6" x2="422.0" y2="85.2" stroke="#8ff08a" stroke-width="1.0"/><line x1="323.9" y1="85.6" x2="319.3" y2="65.7" stroke="#8ff08a" stroke-width="1.0"/><line x1="319.3" y1="65.7" x2="419.7" y2="65.3" stroke="#8ff08a" stroke-width="1.0"/><line x1="292.8" y1="597.6" x2="422.0" y2="85.2" stroke="#8ff08a" stroke-width="1.0"/><line x1="292.8" y1="597.6" x2="278.9" y2="578.0" stroke="#8ff08a" stroke-width="1.0"/><line x1="278.9" y1="578.0" x2="419.7" y2="65.3" stroke="#8ff08a" stroke-width="1.0"/><line x1="422.0" y1="85.2" x2="419.7" y2="65.3" stroke="#8ff08a" stroke-width="1.0"/><line x1="782.6" y1="592.8" x2="1025.4" y2="590.5" stroke="#8ff08a" stroke-width="1.0"/><line x1="782.6" y1="592.8" x2="617.4" y2="84.4" stroke="#8ff08a" stroke-width="1.0"/><line x1="782.6" y1="592.8" x2="799.3" y2="573.1" stroke="#8ff08a" stroke-width="1.0"/><line x1="799.3" y1="573.1" x2="1057.2" y2="570.7" stroke="#8ff08a" stroke-width="1.0"/><line x1="799.3" y1="573.1" x2="619.9" y2="64.6" stroke="#8ff08a" stroke-width="1.0"/><line x1="617.4" y1="84.4" x2="714.9" y2="84.0" stroke="#8ff08a" stroke-width="1.0"/><line x1="617.4" y1="84.4" x2="619.9" y2="64.6" stroke="#8ff08a" stroke-width="1.0"/><line x1="619.9" y1="64.6" x2="719.6" y2="64.2" stroke="#8ff08a" stroke-width="1.0"/><line x1="1025.4" y1="590.5" x2="714.9" y2="84.0" stroke="#8ff08a" stroke-width="1.0"/><line x1="1025.4" y1="590.5" x2="1057.2" y2="570.7" stroke="#8ff08a" stroke-width="1.0"/><line x1="1057.2" y1="570.7" x2="719.6" y2="64.2" stroke="#8ff08a" stroke-width="1.0"/><line x1="714.9" y1="84.0" x2="719.6" y2="64.2" stroke="#8ff08a" stroke-width="1.0"/><line x1="312.1" y1="107.3" x2="728.1" y2="105.6" stroke="#8ff08a" stroke-width="1.0"/><line x1="312.1" y1="107.3" x2="323.9" y2="85.6" stroke="#8ff08a" stroke-width="1.0"/><line x1="312.1" y1="107.3" x2="306.9" y2="86.7" stroke="#8ff08a" stroke-width="1.0"/><line x1="306.9" y1="86.7" x2="733.5" y2="85.1" stroke="#8ff08a" stroke-width="1.0"/><line x1="306.9" y1="86.7" x2="319.3" y2="65.7" stroke="#8ff08a" stroke-width="1.0"/><line x1="323.9" y1="85.6" x2="714.9" y2="84.0" stroke="#8ff08a" stroke-width="1.0"/><line x1="323.9" y1="85.6" x2="319.3" y2="65.7" stroke="#8ff08a" stroke-width="1.0"/><line x1="319.3" y1="65.7" x2="719.6" y2="64.2" stroke="#8ff08a" stroke-width="1.0"/><line x1="728.1" y1="105.6" x2="714.9" y2="84.0" stroke="#8ff08a" stroke-width="1.0"/><line x1="728.1" y1="105.6" x2="733.5" y2="85.1" stroke="#8ff08a" stroke-width="1.0"/><line x1="733.5" y1="85.1" x2="719.6" y2="64.2" stroke="#8ff08a" stroke-width="1.0"/><line x1="714.9" y1="84.0" x2="719.6" y2="64.2" stroke="#8ff08a" stroke-width="1.0"/><line x1="45.9" y1="600.0" x2="1025.4" y2="590.5" stroke="#8ff08a" stroke-width="1.0"/><line x1="45.9" y1="600.0" x2="106.6" y2="487.6" stroke="#8ff08a" stroke-width="1.0"/><line x1="45.9" y1="600.0" x2="16.4" y2="580.5" stroke="#8ff08a" stroke-width="1.0"/><line x1="16.4" y1="580.5" x2="1057.2" y2="570.7" stroke="#8ff08a" stroke-width="1.0"/><line x1="16.4" y1="580.5" x2="84.5" y2="464.8" stroke="#8ff08a" stroke-width="1.0"/><line x1="106.6" y1="487.6" x2="958.0" y2="480.5" stroke="#8ff08a" stroke-width="1.0"/><line x1="106.6" y1="487.6" x2="84.5" y2="464.8" stroke="#8ff08a" stroke-width="1.0"/><line x1="84.5" y1="464.8" x2="981.7" y2="457.5" stroke="#8ff08a" stroke-width="1.0"/><line x1="1025.4" y1="590.5" x2="958.0" y2="480.5" stroke="#8ff08a" stroke-width="1.0"/><line x1="1025.4" y1="590.5" x2="1057.2" y2="570.7" stroke="#8ff08a" stroke-width="1.0"/><line x1="1057.2" y1="570.7" x2="981.7" y2="457.5" stroke="#8ff08a" stroke-width="1.0"/><line x1="958.0" y1="480.5" x2="981.7" y2="457.5" stroke="#8ff08a" stroke-width="1.0"/></g>
<g id="giz">
<!-- player capsule -->
<path d="M516 194 a9.4 9.4 0 0 1 18.8 0 v-2.5 h-6.5 v27.4 h-3 a9.4 9.4 0 0 1 -9.3 -8 z" fill="#b53a49"/>
<path d="M516 194 a9.4 9.4 0 0 1 6 -8.8 v33 a9.4 9.4 0 0 1 -6 -7.3 z" fill="#a23143"/>
<!-- plane handles -->
<rect x="504.5" y="201.5" width="18.6" height="17.3" fill="rgba(110,160,245,0.12)" stroke="#6ea4f3" stroke-width="1"/>
<rect x="504.5" y="219" width="20.4" height="11" fill="rgba(200,225,110,0.10)" stroke="#c6de73" stroke-width="1"/>
<!-- axes -->
<line x1="525.3" y1="218.8" x2="525.3" y2="155" stroke="#a2ee54" stroke-width="1.3"/>
<line x1="525.3" y1="218.8" x2="525.3" y2="230" stroke="#e8e86a" stroke-width="1.2"/>
<line x1="525.3" y1="218.8" x2="597" y2="218.3" stroke="#f0644a" stroke-width="0.9" stroke-opacity="0.85"/>
<path d="M525.4 133 L532.2 154.6 Q525.4 157.6 518.6 154.6 Z" fill="#98e43c"/>
<path d="M525.4 133 L527 155.9 Q522 156.2 518.6 154.6 Z" fill="#b2f25c"/>
<ellipse cx="596.8" cy="218.1" rx="1.6" ry="6" fill="#7c2110"/><path d="M614.4 217.8 L596.8 212.1 Q598.4 218 596.8 224.1 Z" fill="#e3421f"/>
<path d="M614.4 217.8 L596.8 212.1 Q597.6 215 597.6 217.9 Z" fill="#f4562c"/>
<!-- sun (light) -->
<g stroke="#b9ab8a" stroke-width="1.4" stroke-linecap="round">
<line x1="525.8" y1="159" x2="525.8" y2="176.2"/><line x1="517.2" y1="167.6" x2="534.4" y2="167.6"/>
<line x1="519.7" y1="161.5" x2="531.9" y2="173.7"/><line x1="531.9" y1="161.5" x2="519.7" y2="173.7"/>
</g>
<circle cx="525.8" cy="167.6" r="4.6" fill="#cdbf9c"/>
<circle cx="525.8" cy="167.6" r="3.3" fill="#fff4cf"/>
<!-- z axis dot -->
<circle cx="523.2" cy="179.3" r="5.2" fill="#3b7ff2"/>
<circle cx="522.4" cy="178.2" r="3" fill="#4f8ff8"/>
<!-- camera icon -->
<g fill="#000" fill-opacity="0.18" transform="translate(0,1.2)">
<circle cx="598.1" cy="238.7" r="17.8"/><circle cx="568" cy="255.1" r="17.4"/><rect x="568.4" y="250" width="54.6" height="35.2" rx="4"/>
</g>
<g fill="#ffffff">
<circle cx="598.1" cy="238.7" r="17.5"/>
<circle cx="568" cy="255.1" r="17.1"/>
<rect x="568.7" y="249" width="53.9" height="35.9" rx="3.8"/>
<path d="M621.6 263 L638.6 257.4 Q640.8 256.8 640.8 259 V275.2 Q640.8 277.6 638.6 276.8 L621.6 271.2 Z"/>
</g>
<!-- scene orientation gizmo -->
<g>
<ellipse cx="978.2" cy="75.8" rx="8.6" ry="4.1" fill="#b9b9bd"/>
<path d="M978 58.5 L969.8 75 Q978 79 986.6 75 Z" fill="#8f9096"/>
<path d="M978 58.5 L977 77.8 Q982 78.2 986.6 75 Z" fill="#a9aab0"/>
<ellipse cx="978.2" cy="75.9" rx="8.4" ry="3.9" fill="#bdbdc2"/>
<path d="M969.3 50 L948.2 44.6 Q946.6 50 948.2 55.4 Z" fill="#f4f4f4"/>
<path d="M969.3 50 L948.2 50 Q947.4 53 948.2 55.4 Z" fill="#cfcfd2"/>
<path d="M987.4 50 L1007.6 44.4 Q1009.4 50 1007.6 55.8 Z" fill="#e4441f"/>
<path d="M987.4 50 L1007.6 50.5 Q1008.6 53.5 1007.6 55.8 Z" fill="#b93414"/>
<rect x="971.3" y="41.3" width="13.8" height="17" fill="#c9c9ce"/>
<rect x="971.3" y="50.5" width="13.8" height="7.8" fill="#b4b4ba"/>
<path d="M977.9 43 L969.4 25 H986.6 Z" fill="#3e9a24"/>
<path d="M977.9 43 L973 26 H969.4 Z" fill="#2f7d1c"/>
<path d="M977.4 38.5 L976.6 41 L977.9 43 L979.2 41 L978.4 38.5Z" fill="#2446a8"/>
<ellipse cx="978" cy="24.6" rx="8.9" ry="3.7" fill="#86e238"/>
<ellipse cx="978" cy="24.2" rx="6" ry="2.2" fill="#93ea46"/>
<text x="977.9" y="15.6" font-family="'DejaVu Sans','Liberation Sans',sans-serif" font-weight="bold" font-size="11" fill="#ffffff" text-anchor="middle">y</text>
<text x="1012.9" y="53.6" font-family="'DejaVu Sans','Liberation Sans',sans-serif" font-weight="bold" font-size="11" fill="#ffffff" text-anchor="middle">x</text>
<g stroke="#b4b4b4" stroke-width="1" fill="none"><path d="M963.8 96.6 L954.8 100.4 L963.8 104.6 M954.8 100.4 H963.8"/></g>
<text x="967.2" y="104.6" font-family="'DejaVu Sans','Liberation Sans',sans-serif" font-size="11" fill="#c4c4c4" letter-spacing="0.2">Persp</text>
<!-- lock -->
<path d="M1010.4 17.4 v-1.8 a2.4 2.4 0 0 1 4.8 0 v0.5" fill="none" stroke="#a4a4a4" stroke-width="1.2"/>
<rect x="1008.8" y="17.2" width="7.6" height="4.9" fill="#b0b0b0"/>
</g>
</g>

</g>
</svg>
<div style="position:absolute;left:1028px;top:0;width:3px;height:643px;background:#a2a2a2"></div>
<div style="position:absolute;left:1030.4px;top:0;width:1px;height:643px;background:#8c8c8c"></div>
<div style="position:absolute;left:1031px;top:0;width:417px;height:643px;background:#c2c2c2"></div>
<div style="position:absolute;left:1031px;top:0;width:417px;height:31px;background:linear-gradient(#e4e4e4,#dadada)"></div>
<svg class="a" style="left:1037px;top:-12px" width="26" height="28" viewBox="0 0 26 28"><path d="M3 6 L13 2 L23 6 V20 L13 25 L3 20 Z" fill="#e9e9e9"/><path d="M3 6 L13 10 V25 L3 20 Z" fill="#f4f4f4"/><path d="M13 10 L23 6 V20 L13 25 Z" fill="#c4c4c4"/><path d="M3 6 L13 2 L23 6 L13 10 Z" fill="#fafafa"/></svg>
<svg class="a" style="left:1039.5px;top:9px" width="9" height="5" viewBox="0 0 9 5"><path d="M0.5 0.3 H8.2 L4.35 4.6 Z" fill="#1f1f1f"/></svg>
<div class="cb" style="left:1075.0px;top:-5.5px;width:10px;height:10px;"><svg width="14" height="14" viewBox="0 0 14 14" style="position:absolute;left:-1px;top:-3px"><path d="M2.6 7.2 L5.4 10.6 L11.6 1.6" fill="none" stroke="#000" stroke-width="2"/></svg></div>
<div class="f" style="left:1093.0px;top:-9.0px;width:280.0px;height:14px;border-bottom-color:#a6a6a6;border-right-color:#a0a0a0;background:#dcdcdc;"><span>Map</span></div>
<div class="cb" style="left:1381.0px;top:-6.5px;width:10px;height:10px;background:linear-gradient(#ececec,#d2d2d2);border-color:#8a8a8a;"></div>
<div class="t" style="left:1397.0px;top:-6.5px;color:#000;">Static</div>
<svg class="a" style="left:1433.5px;top:-2.5px" width="8" height="5" viewBox="0 0 8 5"><path d="M0.5 0.3 H7.2 L3.85 4.2 Z" fill="#1f1f1f"/></svg>
<div class="t" style="left:1066.0px;top:13.5px;color:#000;">Tag</div>
<div class="dd" style="left:1093px;top:12.5px;width:158px"><span>Untagged</span><svg width="6" height="9" viewBox="0 0 6 9" style="position:absolute;right:4.5px;top:2px"><path d="M3 0.4 L5.4 3.4 H0.6 Z M3 8.6 L5.4 5.6 H0.6 Z" fill="#222"/></svg></div>
<div class="t" style="left:1258.5px;top:13.5px;color:#000;">Layer</div>
<div class="dd" style="left:1298px;top:12.5px;width:145px"><span>Default</span><svg width="6" height="9" viewBox="0 0 6 9" style="position:absolute;right:4.5px;top:2px"><path d="M3 0.4 L5.4 3.4 H0.6 Z M3 8.6 L5.4 5.6 H0.6 Z" fill="#222"/></svg></div>
<div style="position:absolute;left:1031px;top:30px;width:417px;height:1px;background:#8e8e8e"></div>
<div style="position:absolute;left:1031px;top:31px;width:417px;height:1px;background:#d0d0d0"></div>
<svg class="a" style="left:1036.0px;top:37.0px" width="10" height="9" viewBox="0 0 10 9"><path d="M0.3 0.5 H9.3 L4.8 8.3 Z" fill="#6e6e6e"/></svg>
<svg class="a" style="left:1047.5px;top:32.5px" width="16" height="16" viewBox="0 0 16 16"><g stroke-width="2.2" stroke-linecap="round" fill="none"><path d="M8 9 V2" stroke="#7bd321"/><path d="M8 9 L14 13" stroke="#d8322c"/><path d="M8 9 L2 13" stroke="#2c9ae0"/></g></svg>
<div class="t b" style="left:1081.5px;top:35.0px;color:#000;letter-spacing:0.55px;">Transform</div>
<svg class="a" style="left:1398px;top:33.0px" width="14" height="14" viewBox="0 0 14 14"><path d="M0.4 0.9 L10.6 0.2 Q12.8 0.2 12.8 2.2 V11.6 Q12.8 13.8 10.6 13.5 L0.4 12.6 Z" fill="#2f426b"/><path d="M2 0.9 L12 0.4 V12.9 L2 12.2 Z" fill="#e9edf3"/><path d="M2.4 1.6 L11.2 1.2 V13 L2.4 12.2 Z" fill="#5b7db8"/><path d="M2.4 1.6 L11.2 1.2 V6 L2.4 7 Z" fill="#7796cb"/><text x="6.8" y="10.6" font-size="9" font-family="'DejaVu Sans','Liberation Sans',sans-serif" fill="#e8eef9" text-anchor="middle">?</text></svg>
<svg class="a" style="left:1418px;top:33.9px" width="11" height="13" viewBox="0 0 11 13"><g fill="#1e1e1e"><rect x="0" y="2.8" width="6.8" height="1.4"/><rect x="8.1" y="0" width="2" height="6"/><rect x="0" y="8.7" width="2.5" height="1.3"/><rect x="4.4" y="6.2" width="2.4" height="5.6" rx="1.2"/><rect x="8.1" y="8.7" width="2" height="1.3"/></g></svg>
<svg class="a" style="left:1434px;top:33.4px" width="14" height="13" viewBox="0 0 14 13"><g transform="translate(5.8,5.3)"><g fill="#1e1e1e"><rect x="-0.9" y="-5" width="1.8" height="3" transform="rotate(0)"/><rect x="-0.9" y="-5" width="1.8" height="3" transform="rotate(45)"/><rect x="-0.9" y="-5" width="1.8" height="3" transform="rotate(90)"/><rect x="-0.9" y="-5" width="1.8" height="3" transform="rotate(135)"/><rect x="-0.9" y="-5" width="1.8" height="3" transform="rotate(180)"/><rect x="-0.9" y="-5" width="1.8" height="3" transform="rotate(225)"/><rect x="-0.9" y="-5" width="1.8" height="3" transform="rotate(270)"/><rect x="-0.9" y="-5" width="1.8" height="3" transform="rotate(315)"/></g><circle r="3.5" fill="#1e1e1e"/><circle r="1.9" fill="#c2c2c2"/></g><path d="M11 8.3 H14 L12.5 11.4 Z" fill="#1e1e1e"/></svg>
<div class="t" style="left:1046.5px;top:51.0px;color:#000;">Position</div>
<div class="t" style="left:1194.5px;top:51.0px;color:#000;">X</div>
<div class="f" style="left:1206.0px;top:49.0px;width:68.0px;height:14px;"><span>0</span></div>
<div class="t" style="left:1279.5px;top:51.0px;color:#000;">Y</div>
<div class="f" style="left:1291.0px;top:49.0px;width:68.0px;height:14px;"><span>0</span></div>
<div class="t" style="left:1364.5px;top:51.0px;color:#000;">Z</div>
<div class="f" style="left:1376.0px;top:49.0px;width:68.0px;height:14px;"><span>0</span></div>
<div class="t" style="left:1046.5px;top:69.0px;color:#000;">Rotation</div>
<div class="t" style="left:1194.5px;top:69.0px;color:#000;">X</div>
<div class="f" style="left:1206.0px;top:67.0px;width:68.0px;height:14px;"><span>0</span></div>
<div class="t" style="left:1279.5px;top:69.0px;color:#000;">Y</div>
<div class="f" style="left:1291.0px;top:67.0px;width:68.0px;height:14px;"><span>0</span></div>
<div class="t" style="left:1364.5px;top:69.0px;color:#000;">Z</div>
<div class="f" style="left:1376.0px;top:67.0px;width:68.0px;height:14px;"><span>0</span></div>
<div class="t" style="left:1046.5px;top:87.0px;color:#000;">Scale</div>
<div class="t" style="left:1194.5px;top:87.0px;color:#000;">X</div>
<div class="f" style="left:1206.0px;top:85.0px;width:68.0px;height:14px;"><span>1</span></div>
<div class="t" style="left:1279.5px;top:87.0px;color:#000;">Y</div>
<div class="f" style="left:1291.0px;top:85.0px;width:68.0px;height:14px;"><span>1</span></div>
<div class="t" style="left:1364.5px;top:87.0px;color:#000;">Z</div>
<div class="f" style="left:1376.0px;top:85.0px;width:68.0px;height:14px;"><span>1</span></div>
<div style="position:absolute;left:1031px;top:108px;width:417px;height:1px;background:#8e8e8e"></div>
<div style="position:absolute;left:1031px;top:109px;width:417px;height:1px;background:#d0d0d0"></div>
<svg class="a" style="left:1036.0px;top:115.0px" width="10" height="9" viewBox="0 0 10 9"><path d="M0.3 0.5 H9.3 L4.8 8.3 Z" fill="#6e6e6e"/></svg>
<svg class="a" style="left:1049px;top:111px" width="12" height="15" viewBox="0 0 12 15"><path d="M0.5 0.5 H8 L11.5 4 V14.5 H0.5 Z" fill="#ededed" stroke="#b8b8b8" stroke-width="0.8"/><text x="6" y="10.6" font-size="6.6" font-family="'DejaVu Sans','Liberation Sans',sans-serif" font-weight="bold" fill="#5b86d6" text-anchor="middle">C#</text></svg>
<div class="cb" style="left:1066.0px;top:112.0px;width:10px;height:10px;"><svg width="14" height="14" viewBox="0 0 14 14" style="position:absolute;left:-1px;top:-3px"><path d="M2.6 7.2 L5.4 10.6 L11.6 1.6" fill="none" stroke="#000" stroke-width="2"/></svg></div>
<div class="t b" style="left:1081.5px;top:113.0px;color:#000;">Map Generator (Script)</div>
<svg class="a" style="left:1398px;top:111.0px" width="14" height="14" viewBox="0 0 14 14"><path d="M0.4 0.9 L10.6 0.2 Q12.8 0.2 12.8 2.2 V11.6 Q12.8 13.8 10.6 13.5 L0.4 12.6 Z" fill="#2f426b"/><path d="M2 0.9 L12 0.4 V12.9 L2 12.2 Z" fill="#e9edf3"/><path d="M2.4 1.6 L11.2 1.2 V13 L2.4 12.2 Z" fill="#5b7db8"/><path d="M2.4 1.6 L11.2 1.2 V6 L2.4 7 Z" fill="#7796cb"/><text x="6.8" y="10.6" font-size="9" font-family="'DejaVu Sans','Liberation Sans',sans-serif" fill="#e8eef9" text-anchor="middle">?</text></svg>
<svg class="a" style="left:1418px;top:111.9px" width="11" height="13" viewBox="0 0 11 13"><g fill="#1e1e1e"><rect x="0" y="2.8" width="6.8" height="1.4"/><rect x="8.1" y="0" width="2" height="6"/><rect x="0" y="8.7" width="2.5" height="1.3"/><rect x="4.4" y="6.2" width="2.4" height="5.6" rx="1.2"/><rect x="8.1" y="8.7" width="2" height="1.3"/></g></svg>
<svg class="a" style="left:1434px;top:111.4px" width="14" height="13" viewBox="0 0 14 13"><g transform="translate(5.8,5.3)"><g fill="#1e1e1e"><rect x="-0.9" y="-5" width="1.8" height="3" transform="rotate(0)"/><rect x="-0.9" y="-5" width="1.8" height="3" transform="rotate(45)"/><rect x="-0.9" y="-5" width="1.8" height="3" transform="rotate(90)"/><rect x="-0.9" y="-5" width="1.8" height="3" transform="rotate(135)"/><rect x="-0.9" y="-5" width="1.8" height="3" transform="rotate(180)"/><rect x="-0.9" y="-5" width="1.8" height="3" transform="rotate(225)"/><rect x="-0.9" y="-5" width="1.8" height="3" transform="rotate(270)"/><rect x="-0.9" y="-5" width="1.8" height="3" transform="rotate(315)"/></g><circle r="3.5" fill="#1e1e1e"/><circle r="1.9" fill="#c2c2c2"/></g><path d="M11 8.3 H14 L12.5 11.4 Z" fill="#1e1e1e"/></svg>
<div class="t" style="left:1046.5px;top:129.0px;color:#6e6e6e;">Script</div>
<div class="f" style="left:1194px;top:127.0px;width:232px;height:14px;color:#727272;background:#cbcbcb;border-color:#b4b4b4;border-top-color:#a4a4a4;border-bottom-color:#d2d2d2;"><span style="left:15.5px">MapGenerator</span></div>
<svg class="a" style="left:1198.5px;top:129.0px" width="9" height="12" viewBox="0 0 9 12"><path d="M0.5 0.5 H6 L8.5 3 V11.5 H0.5 Z" fill="#ececec" stroke="#b4b4b4" stroke-width="0.8"/><text x="4.5" y="8.8" font-size="4.6" font-family="'DejaVu Sans','Liberation Sans',sans-serif" font-weight="bold" fill="#6f94d8" text-anchor="middle">c#</text></svg>
<svg class="a" style="left:1434px;top:130.0px" width="10" height="10" viewBox="0 0 10 10"><circle cx="5" cy="5" r="3.6" fill="none" stroke="#8a8a8a" stroke-width="1"/><circle cx="5" cy="5" r="1.1" fill="#8a8a8a"/></svg>
<svg class="a" style="left:1035.0px;top:149.5px" width="9" height="9" viewBox="0 0 9 9"><path d="M0.2 0.5 H7.4 L3.8 7.9 Z" fill="#6e6e6e"/></svg>
<div class="t" style="left:1046.5px;top:147.0px;color:#000;">Maps</div>
<div class="t" style="left:1061.5px;top:165.0px;color:#000;">Size</div>
<div class="f" style="left:1194.0px;top:163.0px;width:250.0px;height:14px;"><span>2</span></div>
<svg class="a" style="left:1050.0px;top:185.5px" width="9" height="9" viewBox="0 0 9 9"><path d="M0.2 0.5 H7.4 L3.8 7.9 Z" fill="#6e6e6e"/></svg>
<div class="t" style="left:1061.5px;top:183.0px;color:#000;">Element 0</div>
<svg class="a" style="left:1065.0px;top:203.5px" width="9" height="9" viewBox="0 0 9 9"><path d="M0.2 0.5 H7.4 L3.8 7.9 Z" fill="#6e6e6e"/></svg>
<div class="t" style="left:1076.5px;top:201.0px;color:#000;">Map Size</div>
<div class="t" style="left:1091.5px;top:219.0px;color:#000;">X</div>
<div class="f" style="left:1194.0px;top:217.0px;width:250.0px;height:14px;"><span>10</span></div>
<div class="t" style="left:1091.5px;top:237.0px;color:#000;">Y</div>
<div class="f" style="left:1194.0px;top:235.0px;width:250.0px;height:14px;"><span>25</span></div>
<div class="t" style="left:1076.5px;top:255.0px;color:#000;">Obstacle Percent</div>
<div style="position:absolute;left:1194.5px;top:259.5px;width:196.0px;height:3px;border-radius:2px;background:linear-gradient(#6f6f6f,#9d9d9d)"></div>
<div style="position:absolute;left:1248.5px;top:255.5px;width:9px;height:9px;border-radius:6px;border:1px solid #6a6a6a;background:radial-gradient(circle at 50% 35%,#ffffff,#d8d8d8)"></div>
<div class="f" style="left:1396.0px;top:253.0px;width:48.0px;height:14px;"><span>0.296</span></div>
<div class="t" style="left:1076.5px;top:273.0px;color:#000;">Seed</div>
<div class="f" style="left:1194.0px;top:271.0px;width:250.0px;height:14px;"><span>543</span></div>
<div class="t" style="left:1076.5px;top:291.0px;color:#000;">Min Obstacle Height</div>
<div class="f" style="left:1194.0px;top:289.0px;width:250.0px;height:14px;"><span>1</span></div>
<div class="t" style="left:1076.5px;top:309.0px;color:#000;">Max Obstacle Height</div>
<div class="f" style="left:1194.0px;top:307.0px;width:250.0px;height:14px;"><span>4</span></div>
<div class="t" style="left:1076.5px;top:327.0px;color:#000;">Foreground Color</div>
<div style="position:absolute;left:1194px;top:325.0px;width:232px;height:14px;border:1px solid #6f6f6f;background:#15758c"><div style="position:absolute;left:0;right:0;bottom:0;height:3px;background:#ffffff"></div></div>
<svg class="a" style="left:1431px;top:325.0px" width="16" height="16" viewBox="0 0 16 16"><path d="M2 14.5 L2.6 12 L8.6 6 L10.4 7.8 L4.4 13.8 Z" fill="#e6e6e6" stroke="#222" stroke-width="1"/><path d="M8.2 4.6 L11.8 8.2" stroke="#111" stroke-width="2.2"/><path d="M10 5.4 L12.2 3.2 Q13.6 2 14.4 3 Q15.2 4 14 5.2 L11.6 7.4 Z" fill="#111"/></svg>
<div class="t" style="left:1076.5px;top:345.0px;color:#000;">Background Color</div>
<div style="position:absolute;left:1194px;top:343.0px;width:232px;height:14px;border:1px solid #6f6f6f;background:#cc4d63"><div style="position:absolute;left:0;right:0;bottom:0;height:3px;background:#000000"></div></div>
<svg class="a" style="left:1431px;top:343.0px" width="16" height="16" viewBox="0 0 16 16"><path d="M2 14.5 L2.6 12 L8.6 6 L10.4 7.8 L4.4 13.8 Z" fill="#e6e6e6" stroke="#222" stroke-width="1"/><path d="M8.2 4.6 L11.8 8.2" stroke="#111" stroke-width="2.2"/><path d="M10 5.4 L12.2 3.2 Q13.6 2 14.4 3 Q15.2 4 14 5.2 L11.6 7.4 Z" fill="#111"/></svg>
<svg class="a" style="left:1050.5px;top:364.0px" width="9" height="10" viewBox="0 0 9 10"><path d="M0.5 0.3 V9.3 L8.3 4.8 Z" fill="#6e6e6e"/></svg>
<div class="t" style="left:1061.5px;top:363.0px;color:#000;">Element 1</div>
<div class="t" style="left:1046.5px;top:381.0px;color:#000;">Map Index</div>
<div class="f" style="left:1194.0px;top:379.0px;width:250.0px;height:14px;"><span>0</span></div>
<div class="t" style="left:1046.5px;top:399.0px;color:#000;">Tile Prefab</div>
<div class="f" style="left:1194px;top:397.0px;width:232px;height:14px;"><span style="left:15.5px">Tile (Transform)</span></div>
<svg class="a" style="left:1196.5px;top:399.0px" width="12" height="12" viewBox="0 0 16 16"><g stroke-width="2.4" stroke-linecap="round" fill="none"><path d="M8 9 V2" stroke="#6fc12a"/><path d="M8 9 L14 13.4" stroke="#d5403a"/><path d="M8 9 L2 13.4" stroke="#3c9fe0"/></g></svg>
<svg class="a" style="left:1434.0px;top:400.0px" width="10" height="10" viewBox="0 0 10 10"><circle cx="5" cy="5" r="3.6" fill="none" stroke="#4a4a4a" stroke-width="1"/><circle cx="5" cy="5" r="1.1" fill="#4a4a4a"/></svg>
<div class="t" style="left:1046.5px;top:417.0px;color:#000;">Obstacle Prefab</div>
<div class="f" style="left:1194px;top:415.0px;width:232px;height:14px;"><span style="left:15.5px">Obstacle (Transform)</span></div>
<svg class="a" style="left:1196.5px;top:417.0px" width="12" height="12" viewBox="0 0 16 16"><g stroke-width="2.4" stroke-linecap="round" fill="none"><path d="M8 9 V2" stroke="#6fc12a"/><path d="M8 9 L14 13.4" stroke="#d5403a"/><path d="M8 9 L2 13.4" stroke="#3c9fe0"/></g></svg>
<svg class="a" style="left:1434.0px;top:418.0px" width="10" height="10" viewBox="0 0 10 10"><circle cx="5" cy="5" r="3.6" fill="none" stroke="#4a4a4a" stroke-width="1"/><circle cx="5" cy="5" r="1.1" fill="#4a4a4a"/></svg>
<div class="t" style="left:1046.5px;top:435.0px;color:#000;">Navmesh Floor</div>
<div class="f" style="left:1194px;top:433.0px;width:232px;height:14px;"><span style="left:15.5px">Navmesh Floor (Transform)</span></div>
<svg class="a" style="left:1196.5px;top:435.0px" width="12" height="12" viewBox="0 0 16 16"><g stroke-width="2.4" stroke-linecap="round" fill="none"><path d="M8 9 V2" stroke="#6fc12a"/><path d="M8 9 L14 13.4" stroke="#d5403a"/><path d="M8 9 L2 13.4" stroke="#3c9fe0"/></g></svg>
<svg class="a" style="left:1434.0px;top:436.0px" width="10" height="10" viewBox="0 0 10 10"><circle cx="5" cy="5" r="3.6" fill="none" stroke="#4a4a4a" stroke-width="1"/><circle cx="5" cy="5" r="1.1" fill="#4a4a4a"/></svg>
<div class="t" style="left:1046.5px;top:453.0px;color:#000;">Navmesh Mask Prefab</div>
<div class="f" style="left:1194px;top:451.0px;width:232px;height:14px;"><span style="left:15.5px">Navmesh Mask (Transform)</span></div>
<svg class="a" style="left:1196.5px;top:453.0px" width="12" height="12" viewBox="0 0 16 16"><g stroke-width="2.4" stroke-linecap="round" fill="none"><path d="M8 9 V2" stroke="#6fc12a"/><path d="M8 9 L14 13.4" stroke="#d5403a"/><path d="M8 9 L2 13.4" stroke="#3c9fe0"/></g></svg>
<svg class="a" style="left:1434.0px;top:454.0px" width="10" height="10" viewBox="0 0 10 10"><circle cx="5" cy="5" r="3.6" fill="none" stroke="#4a4a4a" stroke-width="1"/><circle cx="5" cy="5" r="1.1" fill="#4a4a4a"/></svg>
<div class="t" style="left:1046.5px;top:471.0px;color:#000;">Max Map Size</div>
<div class="t" style="left:1194.5px;top:471.0px;color:#000;">X</div>
<div class="f" style="left:1206.0px;top:469.0px;width:68.0px;height:14px;"><span>20</span></div>
<div class="t" style="left:1279.5px;top:471.0px;color:#000;">Y</div>
<div class="f" style="left:1291.0px;top:469.0px;width:68.0px;height:14px;"><span>20</span></div>
<div class="t" style="left:1046.5px;top:489.0px;color:#000;">Outline Percent</div>
<div style="position:absolute;left:1194.5px;top:493.5px;width:196.0px;height:3px;border-radius:2px;background:linear-gradient(#6f6f6f,#9d9d9d)"></div>
<div style="position:absolute;left:1227.5px;top:489.5px;width:9px;height:9px;border-radius:6px;border:1px solid #6a6a6a;background:radial-gradient(circle at 50% 35%,#ffffff,#d8d8d8)"></div>
<div class="f" style="left:1396.0px;top:487.0px;width:48.0px;height:14px;"><span>0.185</span></div>
<div class="t" style="left:1046.5px;top:507.0px;color:#000;">Tile Size</div>
<div class="f" style="left:1194.0px;top:505.0px;width:250.0px;height:14px;"><span>1.5</span></div>
<div class="btn" style="left:1045px;top:524px;width:399px;height:16px"><span>Generate Map</span></div>
<div style="position:absolute;left:1031px;top:549px;width:417px;height:1px;background:#8e8e8e"></div>
<div style="position:absolute;left:1031px;top:550px;width:417px;height:1px;background:#d0d0d0"></div>
<svg class="a" style="left:1036.0px;top:557.0px" width="10" height="9" viewBox="0 0 10 9"><path d="M0.3 0.5 H9.3 L4.8 8.3 Z" fill="#6e6e6e"/></svg>
<svg class="a" style="left:1047px;top:552.5px" width="15" height="16" viewBox="0 0 15 16"><path d="M7.5 0.6 L14.2 3.6 V11.6 L7.5 15.4 L0.8 11.6 V3.6 Z" fill="#6d9d2c"/><path d="M7.5 0.6 L14.2 3.6 L7.5 6.8 L0.8 3.6 Z" fill="#b5e35c"/><path d="M0.8 3.6 L7.5 6.8 V15.4 L0.8 11.6 Z" fill="#8cc63a"/><path d="M7.5 6.8 L14.2 3.6 V11.6 L7.5 15.4 Z" fill="#5f8f22"/></svg>
<div class="cb" style="left:1066.0px;top:554.0px;width:10px;height:10px;"><svg width="14" height="14" viewBox="0 0 14 14" style="position:absolute;left:-1px;top:-3px"><path d="M2.6 7.2 L5.4 10.6 L11.6 1.6" fill="none" stroke="#000" stroke-width="2"/></svg></div>
<div class="t b" style="left:1081.5px;top:555.0px;color:#000;">Box Collider</div>
<svg class="a" style="left:1398px;top:553.0px" width="14" height="14" viewBox="0 0 14 14"><path d="M0.4 0.9 L10.6 0.2 Q12.8 0.2 12.8 2.2 V11.6 Q12.8 13.8 10.6 13.5 L0.4 12.6 Z" fill="#2f426b"/><path d="M2 0.9 L12 0.4 V12.9 L2 12.2 Z" fill="#e9edf3"/><path d="M2.4 1.6 L11.2 1.2 V13 L2.4 12.2 Z" fill="#5b7db8"/><path d="M2.4 1.6 L11.2 1.2 V6 L2.4 7 Z" fill="#7796cb"/><text x="6.8" y="10.6" font-size="9" font-family="'DejaVu Sans','Liberation Sans',sans-serif" fill="#e8eef9" text-anchor="middle">?</text></svg>
<svg class="a" style="left:1418px;top:553.9px" width="11" height="13" viewBox="0 0 11 13"><g fill="#1e1e1e"><rect x="0" y="2.8" width="6.8" height="1.4"/><rect x="8.1" y="0" width="2" height="6"/><rect x="0" y="8.7" width="2.5" height="1.3"/><rect x="4.4" y="6.2" width="2.4" height="5.6" rx="1.2"/><rect x="8.1" y="8.7" width="2" height="1.3"/></g></svg>
<svg class="a" style="left:1434px;top:553.4px" width="14" height="13" viewBox="0 0 14 13"><g transform="translate(5.8,5.3)"><g fill="#1e1e1e"><rect x="-0.9" y="-5" width="1.8" height="3" transform="rotate(0)"/><rect x="-0.9" y="-5" width="1.8" height="3" transform="rotate(45)"/><rect x="-0.9" y="-5" width="1.8" height="3" transform="rotate(90)"/><rect x="-0.9" y="-5" width="1.8" height="3" transform="rotate(135)"/><rect x="-0.9" y="-5" width="1.8" height="3" transform="rotate(180)"/><rect x="-0.9" y="-5" width="1.8" height="3" transform="rotate(225)"/><rect x="-0.9" y="-5" width="1.8" height="3" transform="rotate(270)"/><rect x="-0.9" y="-5" width="1.8" height="3" transform="rotate(315)"/></g><circle r="3.5" fill="#1e1e1e"/><circle r="1.9" fill="#c2c2c2"/></g><path d="M11 8.3 H14 L12.5 11.4 Z" fill="#1e1e1e"/></svg>
<div class="btn" style="left:1194px;top:571px;width:31px;height:21px"></div>
<svg class="a" style="left:1201px;top:574px" width="18" height="16" viewBox="0 0 18 16"><path d="M4.4 11.4 L7.4 4.6 Q8.6 2.8 10 4.6 L13.6 9.2" fill="none" stroke="#111" stroke-width="1.2"/><g fill="#d4d4d4" stroke="#111" stroke-width="1"><rect x="2.8" y="11.4" width="3" height="3"/><rect x="12.4" y="9.2" width="3.2" height="3.2"/></g></svg>
<div class="t" style="left:1234.5px;top:576.5px;color:#000;">Edit Collider</div>
<div class="t" style="left:1046.5px;top:600.0px;color:#000;">Is Trigger</div>
<div class="cb" style="left:1195.0px;top:600.0px;width:10px;height:10px;background:linear-gradient(#ececec,#d2d2d2);border-color:#8a8a8a;"></div>
<div class="t" style="left:1046.5px;top:618.0px;color:#000;">Material</div>
<div class="f" style="left:1194px;top:616px;width:232px;height:14px"><span>None (Physic Material)</span></div>
<svg class="a" style="left:1434.0px;top:619.0px" width="10" height="10" viewBox="0 0 10 10"><circle cx="5" cy="5" r="3.6" fill="none" stroke="#4a4a4a" stroke-width="1"/><circle cx="5" cy="5" r="1.1" fill="#4a4a4a"/></svg>
<div class="t" style="left:1046.5px;top:636.0px;color:#000;">Center</div>
<div class="t" style="left:1194.5px;top:636.0px;color:#000;">X</div>
<div class="f" style="left:1206.0px;top:634.0px;width:68.0px;height:14px;"><span>0</span></div>
<div class="t" style="left:1279.5px;top:636.0px;color:#000;">Y</div>
<div class="f" style="left:1291.0px;top:634.0px;width:68.0px;height:14px;"><span>0</span></div>
<div class="t" style="left:1364.5px;top:636.0px;color:#000;">Z</div>
<div class="f" style="left:1376.0px;top:634.0px;width:68.0px;height:14px;"><span>0</span></div>
</div></body></html>
